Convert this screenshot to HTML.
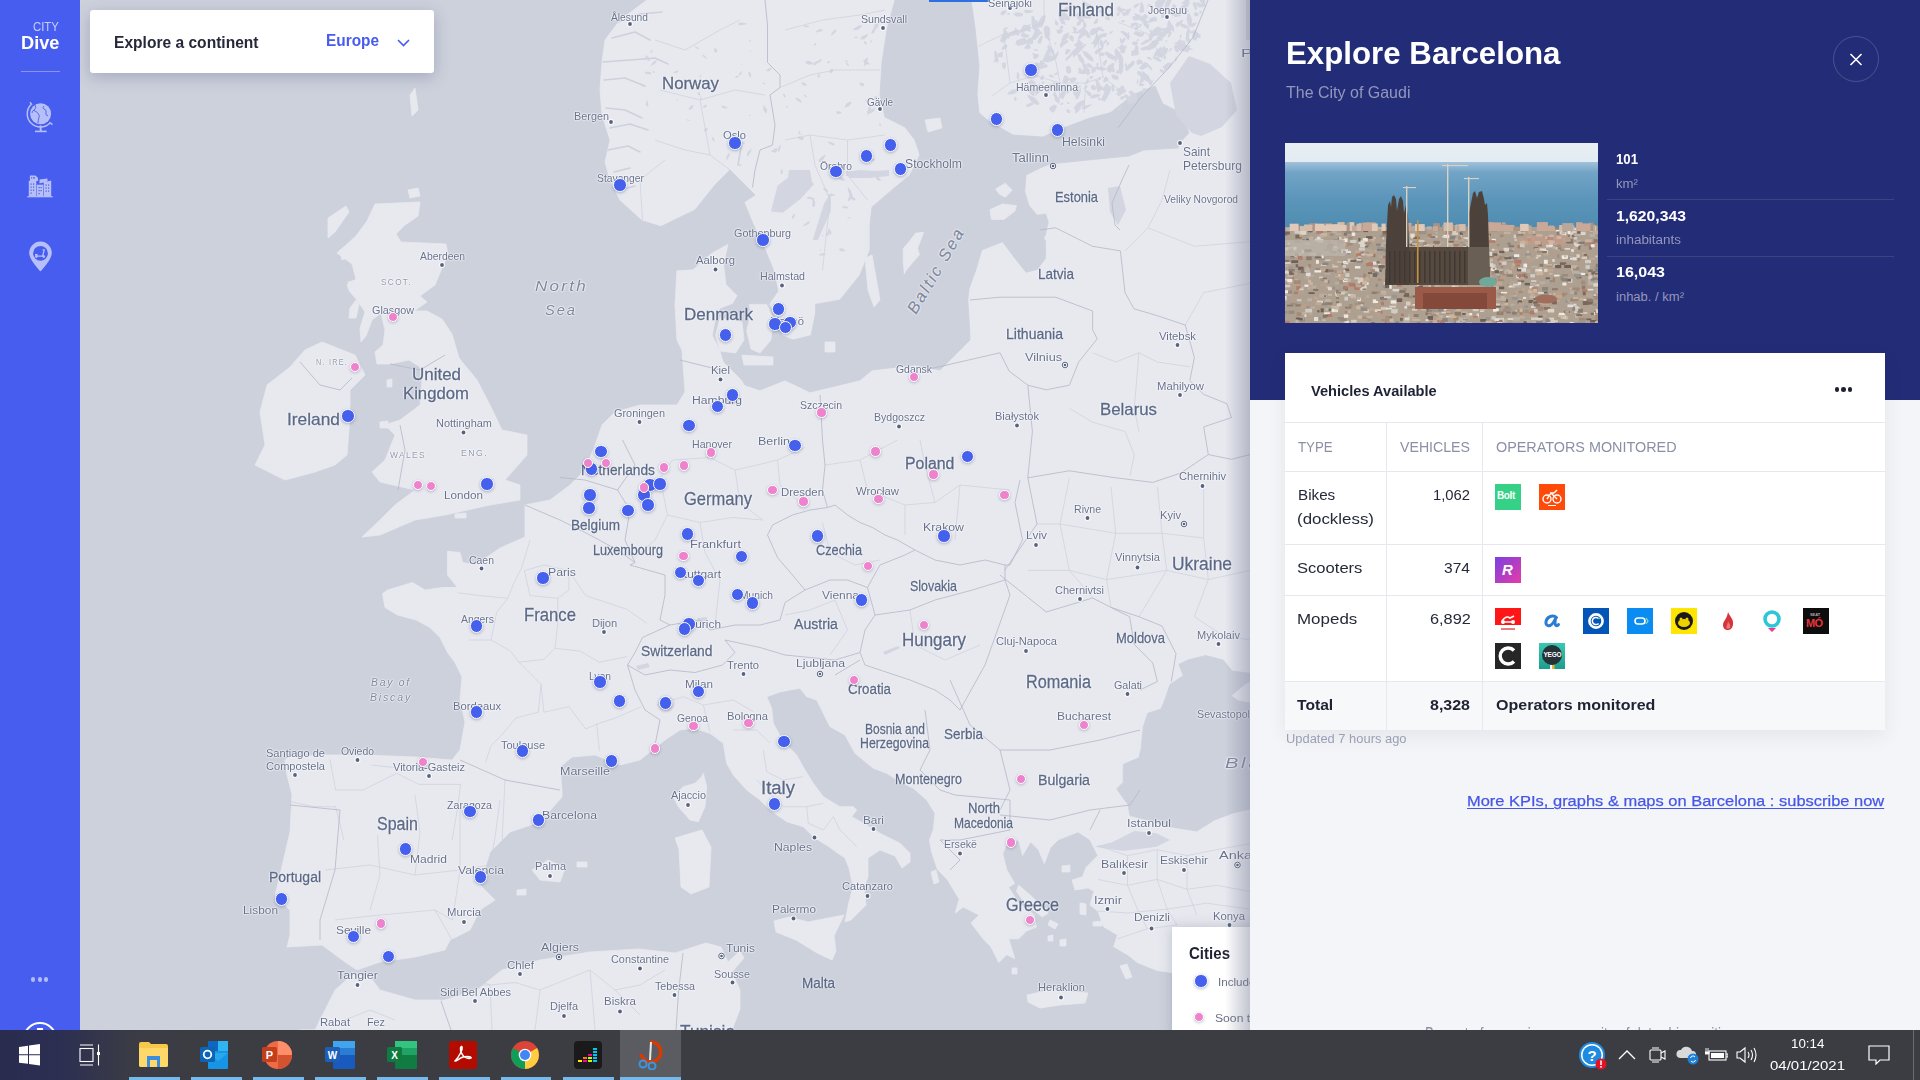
<!DOCTYPE html>
<html><head><meta charset="utf-8">
<style>
*{margin:0;padding:0;box-sizing:border-box}
html,body{width:1920px;height:1080px;overflow:hidden;background:#cdd1dc;font-family:"Liberation Sans",sans-serif}
.abs{position:absolute}
.tx{position:absolute;white-space:nowrap;line-height:1;transform-origin:0 0}
#map{position:absolute;left:80px;top:0;width:1170px;height:1030px;overflow:hidden;background:#cdd1dc}
#mapin{position:absolute;left:-80px;top:0;width:1920px;height:1030px}
.lb{text-shadow:0 0 1px #fff,0 0 2px #fff,0 0 2px #fff}
.c{color:#67718d}
.r{color:#8e97ab;letter-spacing:1.5px}
.k{color:#5b6987;-webkit-text-stroke:0.3px #5b6987}
.s{color:#7d879f;font-style:italic;letter-spacing:2px}
.bd{position:absolute;width:13.6px;height:13.6px;border-radius:50%;background:#4660ee;border:1.9px solid #fff;box-shadow:0 1px 3px rgba(60,70,110,.35)}
.pd{position:absolute;width:10.4px;height:10.4px;border-radius:50%;background:#ef82cd;border:1.7px solid #fff;box-shadow:0 1px 3px rgba(60,70,110,.3)}
#side{position:absolute;left:0;top:0;width:80px;height:1030px;background:#465def;overflow:hidden}
#panel{position:absolute;left:1250px;top:0;width:670px;height:1030px;background:#f4f5f8;overflow:hidden}
#task{position:absolute;left:0;top:1030px;width:1920px;height:50px;background:linear-gradient(90deg,#292c4f 0px,#2c2f52 60px,#3a3b45 130px,#3c3d42 200px,#3c3d42 100%)}
</style></head><body>
<div id="map"><div id="mapin">
<svg class="abs" style="left:0;top:0" width="1920" height="1030" viewBox="0 0 1920 1030">
<rect x="0" y="0" width="1920" height="1030" fill="#cdd1dc"/>
<g fill="#e8e9ef" stroke="#e8e9ef" stroke-width="0.8" stroke-linejoin="round">
<polygon points="647,0 1250,0 1250,975 1171,972.5 1157.2,970.5 1137.4,962.6 1127.5,954.7 1113.7,946.7 1117.6,934.9 1103.8,927 1097.8,911 1090,905.1 1093.9,891.3 1080,883.4 1086,867.5 1097.8,855.6 1090,839.8 1078,831.9 1058.2,839.8 1050.3,847.7 1044.4,863.6 1038.4,849.7 1030.5,841.8 1022.6,855.6 1018.6,839.8 1006.7,843.8 1002.8,853.7 1006.7,869.5 1014.7,883.4 1008.7,887.3 1018.6,903.2 1034.5,915 1036.4,927 1026.5,931 1018.6,938.8 1008.7,938.8 1014.7,958.6 1006.7,954.7 998.8,962.6 990.9,946.7 983,938.8 971,923 979,915 963.2,907.1 955.2,913 959.2,899.2 947.3,879.4 937.4,869.5 931.5,851.7 929.5,839.8 933.3,830 935,813.3 926.7,800 913.3,788.3 900,781.7 886.7,773.3 873.3,768.3 855,753.3 845,735 830,726.7 823.3,713.3 816.7,700 806.7,696.7 800,688.3 790,690 780,692 766.7,696.7 771.7,708.3 773.3,723.3 783.3,741.7 796.7,755 805,770 813.3,783.3 823.3,796.7 840,806.7 853.3,806.7 856.7,810 851.7,816.7 863.3,823.3 880,833.3 900,843.3 910,853.3 910,862 902,868 895,856 880,850 868,858 868,877 864,887 866,905 851,920 845,922 849,902 853,887 849,868 845,858 836,852 828,846 823.3,843.3 813.3,836.7 803.3,826.7 786.7,821.7 770,810 760,800 746.7,790 733.3,775 726.7,763.3 723.3,743.3 710,733.3 693.3,728.3 680,730 665,740 640,760 620,765 595,755 572,757 560,767 562,790 562,797 540,822 510,832 490,852 480,885 495,900 480,910 470,930 450,940 445,950 415,957 380,962 357,970 345,962 322,945 287,947 290,935 290,910 275,895 280,875 290,832 292,795 287,775 285,760 290,757 327,755 365,755 415,757 452,760 460,750 465,722 460,700 462,677 455,662.5 447.5,652.5 440,637.5 430,627.5 416.25,620 397.5,615 385,607.5 382.5,593.75 387.5,590 412.5,582.5 425,590 442.5,587.5 457.5,587.5 447.5,575 447.5,551.3 460,552.5 462.5,562.5 475,565 490,555 500,548 525,537 525,505 550,500 570,485 585,470 595,445 602,425 615,412 640,405 677,405 685,392 682,350 677,340 675,305 677,270 665,227 642,220 620,200 610,180 605,162 610,140 602,115 600,90 602,62 605,40 620,20"/>
<polygon points="300,1030 315,1030 335,990 352,975 370,977 380,990 415,1000 445,1000 477,990 502,970 540,960 590,952 638,949 675,953 706,943 721,947 728,962 740,951 744,958 732,972 740,990 740,1009 732,1030"/>
</g>
<g fill="#cdd1dc" stroke="#cdd1dc" stroke-width="0.8" stroke-linejoin="round">
<polygon points="655,229 662,226 695,210 715,185 730,170 740,180 750,190 755,195 744,202 753,224 764,247 773,269 778,291 769,304 778,324 782,335.6 793,340 811,335.6 815.6,313 815.6,304.4 840,300 860,275 870,250 870,225 872,207 892,190 910,175 920,155 915,140 905,127 885,117 880,95 882,62 887,30 895,0 971,0 975,28 979,66 977,94 979,113 990,122 1013,135 1043,137 1058,130 1088.5,118.5 1110.7,112.6 1133,94.8 1155,86 1162.6,103.7 1180.4,112.6 1189,133 1180.4,142 1178,148 1144,150 1129,156 1088,160 1050,164 1040,168 1026,175 1024.7,191.7 1028.9,205.6 1037.2,215.3 1045.6,213.9 1048.3,222.2 1045.6,233.3 1045.6,258.3 1037.2,269.4 1026,272.2 1015,258.3 1002.5,241.7 981.7,250 976,269.4 969,288.9 967.8,300 969.4,325 970,340 950,360 940,370 915,365 872,370 860,380 810,392 785,380 760,390 745,385 742,380 733,371 724,362 720,349 713,335.6 715.6,322 720,309 733,304 737.8,295.6 726.7,284.4 724.4,264.4 729,243 711,253 693,269 677,270 668,272"/>
<polygon points="1187.8,660 1205.6,655.6 1223.3,660 1232.2,671.1 1250,673.3 1250,808.9 1232.2,813.3 1214.4,820 1196.7,831.1 1170,826.7 1147.8,820 1130,815.6 1127.8,804.4 1116.7,788.9 1123.3,782.2 1123.3,764.4 1138.9,757.8 1141.1,748.9 1143.3,726.7 1147.8,713.3 1161.1,708.9 1165.6,697.8 1170,684.4 1183.3,675.6 1178.9,664.4"/>
</g>
<g fill="#e8e9ef" stroke="#e8e9ef" stroke-width="0.8" stroke-linejoin="round">
<polygon points="375,204 420,202 418,216 405,225 396,234 401,242 446,244 448,255 442,268 435,285 420,296 427,302 414,311 427,311 442,319 452,334 459,358 477,380 490,405 502,430 527,435 527,455 505,480 520,485 520,500 490,505 445,515 415,520 380,535 362,537 380,520 395,505 415,490 380,482 372,472 385,460 395,435 385,425 400,420 420,405 422,380 420,367 409,360 390,364 377,364 375,352 383,345 385,330 381,313 372,320 366,336 361,342 360,328 365,312 357,300 350,292 347,285 356,279 352,264 337,253 356,236 367,221"/>
<polygon points="322,342 355,355 365,375 350,390 350,417 347,455 335,465 315,472 285,480 255,465 265,445 260,412 267,385 290,367 305,350"/>
<polygon points="703.3,773.3 706.7,786.7 705,806.7 698.3,821.7 690,820 678.3,806.7 673.3,796.7 683.3,786.7 695,783.3 701.7,776.7"/>
<polygon points="679,849 675,838 702,830 711,847 709,887 691,894 681,887"/>
<polygon points="774,921 789,917 808,922 844,915 834,936 836,951 832,960 817,953 796,940 776,932"/>
<polygon points="1027,995 1050,990 1088,993 1085,1003 1060,1005 1040,1008 1028,1002"/>
<polygon points="532,870 548,860 565,868 560,882 540,880"/>
<polygon points="577,862 587,862 587,867 577,867"/>
<polygon points="517,890 526,889 526,895 517,895"/>
<polygon points="749,304.4 766.7,304.4 773,318 771,340 760,353 751,349 746.7,331 751,313"/>
<polygon points="720,318 742,322 744,340 735.6,353 720,351 715.6,335.6"/>
<polygon points="742,355 773,357 773,365 744,365"/>
<polygon points="915.5,233.3 923.6,232.3 920.5,240.5 917.5,248.6 919.5,254.7 913.4,261.8 906.3,270 904.3,274 903.2,259.8 903.2,248.6 909.3,241.5"/>
<polygon points="865,258 872,255 880,300 874,307 868,290"/>
<polygon points="825,342 835,342 835,352 825,352"/>
<polygon points="990,209.7 1002.5,204 1016.4,205.6 1015,211 1003.9,219.4 991.4,219.4"/>
<polygon points="995.6,188.9 1005.3,183.3 1012.2,190.3 1005.3,197.2 999.7,194.4"/>
<polygon points="1018.6,885.3 1030.5,895.2 1048.3,913 1042.4,917 1024.6,903.2 1016.6,891.3"/>
<polygon points="1080,903 1086,904 1086,915 1080,914"/>
<polygon points="1093,922 1102,921 1102,926 1093,926"/>
<polygon points="1120,966 1127,964 1132,977 1126,979"/>
<polygon points="1060,940 1066,939 1066,946 1060,946"/>
<polygon points="1048,936 1053,935 1053,941 1048,941"/>
<polygon points="1050,920 1058,924 1055,929 1048,925"/>
<polygon points="1062,866 1070,865 1070,872 1062,872"/>
<polygon points="1047,839 1053,839 1053,845 1047,845"/>
<polygon points="1012,968 1017,968 1017,974 1012,974"/>
<polygon points="931,872 936,870 939,882 934,884"/>
<polygon points="410,95 415,88 418,110 412,116"/>
<polygon points="408,190 418,188 420,196 410,198"/>
<polygon points="328,218 346,206 349,212 335,232 328,238"/>
<polygon points="340,250 350,247 352,256 342,260"/>
<polygon points="348,282 356,280 357,288 349,290"/>
<polygon points="350,308 356,300 359,304 356,318 349,318"/>
<polygon points="387,380 392,379 392,387 387,387"/>
<polygon points="380,422 388,421 388,428 380,428"/>
<polygon points="455,514 466,513 466,518 455,518"/>
<polygon points="925,120 940,118 942,128 928,132"/>
<polygon points="1045,236 1050,236 1050,240 1045,240"/>
<polygon points="1072,880 1085,876 1088,888 1075,890"/>
<polygon points="1232.2,695.6 1245.6,684.4 1250,682.2 1250,702.2 1238,700"/>
</g>
<g fill="none" stroke="#cdd1dc" stroke-width="1.6" stroke-linecap="round" stroke-linejoin="round">
<polyline points="618,22 640,14 662,12"/>
<polyline points="612,38 635,32 650,40"/>
<polyline points="603,62 630,60 655,58 668,64"/>
<polyline points="604,80 625,78 645,86"/>
<polyline points="606,108 625,110 642,118"/>
<polyline points="610,128 630,124 648,130"/>
<polyline points="608,150 628,146 640,152"/>
<polyline points="614,172 630,168"/>
<polyline points="620,190 635,186"/>
<polyline points="738,165 742,142"/>
</g>
<g fill="#d3d6e0">
<polygon points="789,170 810,170 812.6,185.5 801,198.5 782.8,212.8 771,211.5 777.6,185.5 788,177.8"/>
<polygon points="830.7,193 824,203.7 812.6,240 817.8,240 830.7,211.5"/>
<polygon points="1189,56 1210,64 1231,83 1237,110 1222,127 1201,136 1192,133 1176,115.5 1170,83"/>
<polygon points="1108,188 1120,186 1126,210 1118,225 1110,212"/>
<polygon points="883,652 898,646 900,648 885,655"/>
<polygon points="636,666 648,663 650,667 638,670"/>
<polygon points="697,618 707,617 707,621 698,622"/>
<polygon points="1094.4,846.7 1112.2,842.2 1134.4,831.1 1156.7,833.3 1170,840 1156.7,846.7 1123.3,851.1"/>
<polygon points="1246,0 1250,0 1250,40 1246,40"/>
<polygon points="846,172 860,170 875,171 889,170 889,176 870,178 850,178"/>
<polygon points="846,171 862,171 862,175 846,176"/>
<polygon points="1045.4,63.9 1043.4,64.3 1042.0,64.3 1039.7,64.2 1039.9,62.3 1039.9,60.5 1041.9,60.4 1043.7,60.7 1044.1,62.2"/>
<polygon points="1132.4,104.1 1128.8,103.7 1124.0,94.3 1127.9,94.9 1133.1,100.6"/>
<polygon points="1164.9,47.6 1165.2,49.3 1163.6,52.2 1161.4,51.0 1160.9,48.8 1163.2,47.1"/>
<polygon points="1102.2,49.5 1100.9,46.4 1099.9,45.1 1099.4,42.5 1100.3,40.3 1101.9,40.1 1103.0,42.5 1103.8,44.8 1103.4,47.4"/>
<polygon points="1093.7,49.0 1094.2,40.6 1096.5,32.6 1098.5,35.9 1098.6,43.1"/>
<polygon points="1078.4,73.4 1078.6,71.4 1079.2,69.4 1080.3,67.8 1081.2,67.9 1080.8,70.0 1079.7,72.1"/>
<polygon points="1103.2,66.3 1103.2,64.5 1102.7,62.9 1104.0,61.2 1105.3,60.3 1107.0,59.6 1106.8,62.0 1105.7,64.1 1104.6,65.8"/>
<polygon points="1127.2,36.6 1127.0,34.9 1127.7,33.0 1129.2,31.8 1129.0,33.9 1128.7,35.8"/>
<polygon points="1148.3,42.2 1149.3,37.0 1151.3,31.4 1155.9,27.9 1155.7,33.5 1152.1,38.8"/>
<polygon points="1033.1,64.5 1037.0,62.1 1040.6,64.7 1040.4,67.1 1035.9,68.0"/>
<polygon points="1128.3,92.4 1129.2,91.6 1131.9,91.9 1134.2,92.6 1133.0,93.2 1131.8,93.7 1129.7,93.2"/>
<polygon points="1099.5,94.3 1100.5,95.5 1097.0,97.6 1092.5,98.5 1089.9,98.1 1090.4,96.7 1092.1,95.2 1095.3,94.1 1097.7,94.0"/>
<polygon points="1150.2,18.9 1152.6,18.4 1154.0,18.1 1156.5,17.6 1156.9,19.6 1157.1,21.5 1154.6,21.3 1153.2,21.4 1152.1,20.4"/>
<polygon points="1186.1,12.1 1187.1,13.4 1185.7,14.6 1184.7,15.0 1184.1,13.9 1184.6,12.4"/>
<polygon points="1013.1,13.9 1016.7,12.3 1022.9,13.2 1022.6,16.4 1016.0,16.6"/>
<polygon points="1081.6,13.5 1084.4,11.9 1087.3,14.4 1086.2,17.2 1083.1,15.8"/>
<polygon points="1179.5,9.1 1181.4,6.3 1185.1,3.2 1190.3,1.8 1188.9,4.8 1187.3,7.5 1182.6,9.5"/>
<polygon points="1049.7,45.9 1050.8,48.7 1049.7,53.1 1049.1,57.4 1047.2,57.3 1045.8,57.6 1044.0,56.5 1046.2,52.2 1047.5,49.6"/>
<polygon points="1171.4,11.9 1171.9,9.8 1177.5,12.6 1181.6,16.1 1178.4,16.5 1175.4,17.1 1169.4,13.5"/>
<polygon points="1171.1,24.7 1172.0,24.4 1173.5,26.4 1174.0,29.5 1174.4,32.6 1172.9,31.3 1171.8,29.7 1170.2,27.5 1169.9,24.4"/>
<polygon points="1148.9,23.5 1142.6,22.1 1136.6,17.8 1133.6,13.0 1139.5,14.8 1144.5,18.1"/>
<polygon points="1036.4,66.6 1035.6,67.6 1034.8,68.7 1033.0,68.8 1032.2,68.2 1032.1,67.5 1032.9,66.9 1033.8,66.0 1035.1,66.2"/>
<polygon points="1021.3,45.2 1024.8,41.2 1029.8,37.7 1035.3,37.3 1032.3,41.8 1026.7,43.7"/>
<polygon points="1161.4,5.8 1162.5,7.1 1161.7,8.7 1160.6,10.5 1160.0,8.6 1160.4,7.2"/>
<polygon points="1060.1,46.0 1059.8,44.6 1061.3,41.7 1064.2,41.2 1068.0,39.5 1067.9,42.3 1063.9,44.9 1060.6,48.3"/>
<polygon points="1163.2,29.6 1164.9,28.3 1167.3,27.1 1170.3,28.3 1171.6,30.4 1170.1,32.0 1169.0,33.8 1165.8,33.5 1164.6,31.4"/>
<polygon points="1122.1,60.5 1122.9,61.8 1123.0,65.2 1121.4,68.4 1120.0,67.5 1120.1,64.3 1120.8,61.2"/>
<polygon points="1091.6,97.2 1087.9,95.3 1084.7,90.0 1087.7,90.5 1091.2,93.2"/>
<polygon points="1111.3,74.8 1114.4,74.4 1118.1,76.1 1118.7,79.6 1115.1,79.7 1112.1,77.9"/>
<polygon points="1159.1,10.1 1157.8,8.1 1159.4,2.3 1162.6,-3.7 1166.3,-6.5 1166.7,-1.8 1163.6,4.2 1161.5,8.3"/>
<polygon points="1037.7,93.3 1034.7,92.6 1032.1,91.9 1031.2,89.5 1029.1,86.0 1032.9,87.7 1035.6,87.8 1037.5,90.6"/>
<polygon points="1069.4,32.0 1068.0,37.8 1062.6,42.9 1061.2,40.1 1063.9,34.4"/>
<polygon points="1083.3,88.9 1085.0,86.7 1087.8,85.3 1087.7,86.5 1085.9,88.7"/>
<polygon points="1033.5,57.2 1033.4,56.1 1035.0,54.1 1037.8,54.1 1039.0,54.9 1038.6,56.4 1036.8,58.5 1033.4,58.9"/>
<polygon points="1108.4,19.9 1107.3,20.1 1105.9,19.7 1105.9,18.1 1106.3,17.1 1106.9,15.9 1108.3,16.4 1109.8,17.6 1108.9,19.0"/>
<polygon points="1079.0,50.1 1076.6,48.3 1076.8,43.6 1078.3,38.0 1081.3,42.3 1082.1,49.0"/>
<polygon points="1096.7,66.3 1096.4,65.0 1096.2,63.4 1097.6,63.2 1099.0,63.0 1098.5,64.7 1098.1,66.2"/>
<polygon points="1094.4,24.2 1093.6,23.3 1094.8,21.0 1096.4,18.8 1097.9,18.7 1098.0,20.5 1097.7,22.8 1095.8,23.7"/>
<polygon points="1083.7,63.9 1081.5,63.3 1079.0,59.3 1077.0,54.8 1078.7,54.1 1080.4,54.6 1082.3,57.6 1084.4,61.6"/>
<polygon points="1102.9,26.7 1099.0,30.2 1097.4,32.1 1093.8,35.0 1090.0,35.6 1091.9,32.6 1091.5,30.8 1095.4,28.1 1098.6,27.7"/>
<polygon points="1115.0,94.5 1119.9,91.0 1126.3,89.6 1125.8,91.9 1121.0,94.5"/>
<polygon points="1201.1,10.4 1201.7,12.0 1200.2,14.0 1199.4,12.8 1199.4,10.9"/>
<polygon points="1007.6,37.0 1007.6,34.6 1012.2,31.3 1016.3,30.1 1019.0,29.9 1019.2,31.3 1020.1,33.4 1014.8,35.2 1012.0,35.8"/>
<polygon points="1188.9,11.8 1187.8,12.1 1186.1,11.0 1184.6,9.8 1183.8,8.3 1185.1,8.2 1186.0,7.6 1187.6,9.2 1188.5,10.5"/>
<polygon points="1058.3,72.6 1057.5,74.6 1054.6,75.1 1053.3,74.4 1056.1,72.7"/>
<polygon points="1175.1,10.7 1173.2,9.4 1172.1,6.9 1172.7,4.2 1174.6,4.4 1176.4,6.0 1176.1,8.6"/>
<polygon points="1054.9,54.9 1051.2,53.3 1048.7,50.2 1047.0,46.8 1048.2,44.5 1051.7,47.7 1053.9,50.9"/>
<polygon points="1069.0,113.2 1067.5,113.0 1066.8,111.6 1066.0,110.0 1067.4,109.5 1068.6,109.2 1069.6,110.4 1070.5,112.3"/>
<polygon points="1085.4,27.8 1084.1,29.9 1080.5,33.0 1076.9,33.1 1079.1,29.9 1083.6,26.7"/>
<polygon points="1113.3,30.7 1112.6,32.3 1109.7,34.2 1109.2,33.1 1111.6,31.0"/>
<polygon points="1083.7,59.5 1082.4,60.5 1079.9,60.7 1077.9,59.8 1079.8,58.7 1082.9,58.2"/>
<polygon points="1115.3,59.3 1112.9,59.9 1107.8,57.4 1104.3,52.8 1106.8,51.6 1111.2,54.0 1116.3,57.1"/>
<polygon points="1071.5,32.6 1074.8,31.0 1078.7,31.8 1080.1,33.2 1075.5,33.4"/>
<polygon points="1093.7,32.7 1092.7,33.6 1092.0,34.8 1090.5,34.5 1089.7,33.8 1090.6,32.9 1091.4,32.5 1092.7,32.0"/>
<polygon points="1107.3,45.7 1106.4,44.3 1107.1,42.1 1109.4,41.7 1108.6,44.7"/>
<polygon points="1094.5,80.5 1095.5,80.1 1097.4,80.2 1098.6,80.9 1098.2,81.4 1097.1,81.7 1095.3,81.2"/>
<polygon points="1161.7,32.8 1160.4,34.7 1155.7,36.1 1152.4,35.7 1147.7,34.6 1154.5,32.1 1161.4,30.3"/>
<polygon points="1103.8,91.4 1102.9,90.4 1103.7,87.1 1105.9,84.1 1107.9,83.6 1108.8,85.4 1107.7,89.2 1105.2,92.3"/>
<polygon points="1065.2,83.7 1062.6,82.2 1063.2,78.2 1064.8,74.9 1067.2,76.3 1069.7,78.6 1067.6,82.3"/>
<polygon points="1087.6,68.2 1088.4,69.6 1089.5,70.9 1088.3,72.3 1087.3,72.8 1086.2,73.1 1085.0,72.2 1085.6,70.4 1086.1,68.6"/>
<polygon points="1140.4,44.0 1143.5,41.8 1145.8,39.8 1149.4,39.2 1149.9,40.2 1149.4,41.4 1147.0,42.7 1142.3,45.1"/>
<polygon points="1033.3,49.5 1034.5,48.9 1036.9,49.2 1037.9,50.1 1038.1,50.9 1036.2,50.7 1034.1,50.5"/>
<polygon points="1116.9,10.1 1120.6,8.7 1124.8,8.8 1126.2,10.5 1120.2,11.4"/>
<polygon points="1190.1,28.1 1184.7,28.5 1180.5,26.0 1179.7,22.8 1185.6,24.8"/>
<polygon points="1035.4,65.0 1035.6,63.4 1039.2,63.0 1043.5,64.3 1045.6,66.2 1043.4,67.2 1041.3,67.4 1038.6,67.7 1036.3,66.4"/>
<polygon points="1038.0,105.2 1034.9,104.3 1031.3,101.7 1029.1,98.6 1026.8,94.8 1030.1,95.4 1034.9,97.8 1039.4,103.3"/>
<polygon points="1028.7,25.6 1030.3,26.9 1030.9,29.3 1030.5,32.1 1028.6,31.6 1026.4,30.2 1027.2,26.9"/>
<polygon points="1126.4,50.6 1123.6,50.7 1120.3,49.9 1118.7,48.3 1117.5,46.4 1121.3,47.0 1123.8,48.7"/>
<polygon points="1081.6,50.2 1087.3,52.3 1092.6,57.5 1093.8,62.1 1089.0,60.1 1084.7,56.0"/>
<polygon points="1112.9,92.2 1111.6,89.8 1111.9,86.4 1112.9,83.5 1114.1,86.1 1114.5,90.3"/>
<polygon points="1024.8,49.0 1024.4,47.5 1026.6,45.0 1028.4,42.4 1029.7,42.8 1031.3,42.5 1029.8,44.9 1028.6,46.9 1026.4,48.8"/>
<polygon points="1063.6,29.9 1061.7,32.8 1058.6,33.9 1056.9,32.5 1056.4,29.8 1060.1,29.6"/>
<polygon points="1116.8,54.5 1116.7,57.5 1116.9,59.9 1115.4,62.4 1114.7,61.0 1114.4,59.1 1115.1,55.6"/>
<polygon points="1066.2,87.5 1063.9,89.3 1061.3,89.8 1058.8,88.8 1058.7,86.7 1060.8,84.7 1063.8,85.9"/>
<polygon points="1163.9,18.2 1162.6,17.6 1162.9,14.4 1163.7,13.1 1164.5,12.9 1165.6,14.2 1164.6,16.4"/>
<polygon points="1083.9,31.4 1084.6,31.7 1085.7,32.5 1085.1,34.0 1085.0,35.9 1083.9,36.0 1082.9,34.7 1082.3,32.9 1082.8,31.3"/>
<polygon points="1134.9,56.0 1134.0,52.0 1135.5,45.1 1138.2,46.4 1138.7,54.4"/>
<polygon points="1019.2,89.3 1017.3,92.0 1013.2,94.2 1010.0,94.5 1007.4,94.4 1008.5,92.4 1011.4,90.1 1015.8,88.9"/>
<polygon points="1135.1,30.4 1135.0,29.0 1134.6,27.5 1136.1,26.0 1137.6,25.3 1138.8,25.9 1138.6,27.7 1137.7,29.2 1136.5,30.0"/>
<polygon points="1119.4,74.1 1118.2,72.9 1117.3,72.5 1116.8,71.3 1117.0,70.5 1117.2,69.3 1118.3,70.5 1118.7,71.6 1119.4,72.7"/>
<polygon points="1055.9,57.3 1055.1,55.6 1056.6,52.9 1058.4,50.8 1058.5,53.4 1057.5,55.9"/>
<polygon points="1053.8,93.4 1055.9,93.8 1058.5,98.6 1059.0,102.2 1057.8,103.1 1055.1,100.4 1054.3,96.6"/>
<polygon points="1057.8,86.9 1056.3,86.8 1055.5,84.8 1055.6,82.5 1057.4,82.0 1058.9,83.8 1059.3,86.2"/>
<polygon points="1074.3,45.6 1074.4,44.0 1077.2,42.6 1080.5,41.2 1082.0,42.5 1083.9,43.6 1081.0,45.4 1078.3,47.4 1075.7,46.6"/>
<polygon points="1159.0,-1.7 1160.6,-0.7 1161.0,2.9 1160.0,6.0 1158.8,8.6 1156.8,9.5 1155.4,6.6 1155.1,1.9 1157.5,0.0"/>
<polygon points="1079.2,16.8 1082.7,15.5 1085.7,13.9 1090.6,14.6 1091.5,16.6 1090.5,18.6 1085.8,18.8 1082.4,18.1"/>
<polygon points="1034.7,30.9 1032.5,28.3 1031.5,22.6 1031.5,16.4 1033.9,16.0 1035.9,21.8 1036.5,28.6"/>
<polygon points="1008.5,26.8 1007.0,28.7 1004.8,30.4 1003.7,30.1 1003.0,29.0 1006.3,27.3"/>
<polygon points="1051.2,111.8 1049.5,109.6 1051.4,106.0 1054.7,104.4 1057.1,106.2 1055.6,109.5 1053.8,112.7"/>
<polygon points="1124.7,15.8 1123.9,16.1 1122.7,15.2 1122.1,13.5 1122.2,12.3 1123.0,11.9 1124.2,12.2 1125.6,13.7 1125.5,15.4"/>
<polygon points="1158.5,58.1 1157.8,57.6 1157.8,55.3 1158.5,52.7 1159.6,51.7 1160.5,52.6 1159.9,55.7 1159.3,58.1"/>
<polygon points="1008.4,39.1 1006.1,37.3 1003.5,33.3 1003.2,28.9 1006.6,31.0 1009.8,37.2"/>
<polygon points="1055.3,77.0 1053.1,77.2 1051.4,77.6 1049.2,76.6 1048.8,75.5 1049.7,74.6 1052.1,74.8 1053.1,75.9"/>
<polygon points="1032.4,66.8 1033.8,64.9 1038.2,64.0 1041.2,66.3 1043.6,68.2 1040.2,69.1 1037.3,70.7 1033.6,69.0"/>
<polygon points="1060.8,98.5 1059.4,96.3 1060.9,92.5 1062.6,90.4 1065.0,86.3 1066.9,87.9 1067.0,91.3 1065.4,94.6 1063.4,98.7"/>
<polygon points="1084.5,22.7 1085.6,22.1 1086.2,24.2 1086.6,26.7 1085.4,27.3 1084.5,28.9 1083.5,26.7 1082.9,24.4 1083.2,22.0"/>
<polygon points="1043.3,75.3 1044.3,76.3 1042.8,80.0 1041.3,80.1 1039.8,79.3 1041.9,75.5"/>
<polygon points="1100.0,101.2 1098.4,99.5 1097.6,97.3 1099.5,97.5 1100.8,99.0"/>
<polygon points="1060.8,15.4 1062.7,13.8 1063.9,19.1 1065.9,25.1 1063.1,24.3 1061.3,23.8 1059.8,20.2 1058.1,14.6"/>
<polygon points="1047.3,36.1 1047.8,34.5 1049.2,34.1 1049.7,35.1 1048.9,36.3"/>
<polygon points="1034.0,102.7 1032.4,105.2 1027.1,107.3 1025.9,105.2 1030.9,102.5"/>
<polygon points="1068.3,74.1 1066.3,71.7 1066.0,66.4 1070.2,66.0 1071.4,72.1"/>
<polygon points="1111.6,85.5 1110.8,90.5 1108.3,95.7 1104.8,101.7 1102.9,100.7 1100.7,99.9 1103.9,93.2 1108.1,86.7"/>
<polygon points="1131.6,43.1 1133.5,41.5 1136.8,41.6 1138.1,43.1 1137.8,44.3 1136.3,45.6 1133.2,44.9"/>
<polygon points="1135.5,22.6 1136.9,23.9 1134.2,25.9 1131.9,27.8 1130.9,26.2 1131.1,23.5 1133.8,22.9"/>
<polygon points="1175.6,45.3 1177.6,44.1 1182.2,43.7 1186.7,46.7 1194.0,49.4 1189.0,50.1 1187.9,52.6 1180.2,50.3 1174.9,47.3"/>
<polygon points="1121.9,90.3 1120.2,90.8 1118.4,91.1 1115.8,90.5 1116.4,89.3 1118.7,89.0 1121.3,89.1"/>
<polygon points="1069.9,104.0 1068.5,103.9 1067.1,103.6 1066.4,102.3 1067.8,102.0 1069.1,102.8"/>
<polygon points="1119.0,71.8 1118.2,73.3 1115.7,73.6 1116.1,71.6 1117.7,70.8"/>
<polygon points="1037.2,91.4 1035.4,91.8 1033.6,90.2 1035.0,89.3 1036.4,89.8"/>
<polygon points="1142.0,13.0 1139.4,12.2 1140.1,6.5 1141.0,1.2 1143.5,5.1 1144.3,11.6"/>
<polygon points="1063.3,9.5 1066.2,7.0 1071.1,5.9 1071.6,7.7 1066.5,11.4"/>
<polygon points="1200.6,38.2 1197.3,37.7 1191.8,32.8 1192.6,30.6 1194.7,29.7 1200.5,35.0"/>
<polygon points="1080.7,68.2 1081.4,68.8 1081.0,70.3 1079.6,70.5 1078.7,70.5 1078.1,69.7 1078.6,68.1 1080.1,67.8"/>
<polygon points="1165.8,42.1 1165.6,41.5 1165.6,40.9 1166.2,40.1 1167.1,40.3 1167.0,41.4 1166.5,42.4"/>
<polygon points="1072.6,26.3 1075.1,27.2 1077.2,29.0 1076.0,30.9 1074.0,30.9 1073.0,28.9"/>
<polygon points="1121.7,55.6 1120.3,56.7 1118.3,57.5 1116.4,57.3 1117.0,56.4 1117.9,55.5 1120.0,55.2"/>
<polygon points="1072.8,54.9 1069.4,54.8 1074.1,49.3 1079.0,46.0 1081.6,45.6 1086.9,43.6 1082.3,49.2 1078.3,53.5 1073.0,57.7"/>
<polygon points="1086.5,63.6 1089.5,63.3 1092.5,66.2 1093.6,69.3 1086.9,66.6"/>
<polygon points="1144.3,34.9 1140.5,37.2 1133.2,34.1 1135.5,30.9 1140.8,32.2"/>
<polygon points="1137.4,71.2 1139.7,71.0 1142.4,73.2 1143.3,75.8 1142.3,77.7 1139.6,75.7 1137.0,73.5"/>
<polygon points="1116.8,10.9 1117.1,8.3 1118.0,6.2 1118.6,6.8 1118.4,9.1"/>
<polygon points="1015.9,97.3 1016.5,98.0 1016.6,99.0 1016.3,100.5 1015.0,100.9 1014.3,99.7 1013.7,98.3 1014.7,96.8"/>
<polygon points="1190.5,26.2 1188.2,25.9 1186.5,19.1 1187.4,13.6 1189.7,13.4 1191.8,18.6 1191.8,24.1"/>
<polygon points="1146.3,27.4 1144.4,26.1 1142.8,22.8 1143.2,18.9 1144.9,18.2 1146.2,20.1 1147.6,22.1 1147.0,24.6"/>
<polygon points="1140.3,3.1 1137.6,6.6 1134.0,8.4 1133.5,6.2 1135.9,4.0"/>
<polygon points="1107.1,39.9 1107.2,41.5 1105.3,43.0 1103.2,44.7 1103.5,42.9 1103.6,41.5 1105.5,39.8"/>
<polygon points="1175.4,62.1 1175.1,60.1 1175.2,58.7 1175.8,56.8 1176.7,57.9 1177.4,59.0 1176.5,60.5"/>
<polygon points="1118.8,99.6 1120.2,98.3 1120.8,96.8 1123.9,95.8 1125.3,96.1 1127.5,96.1 1124.2,98.0 1122.3,99.8 1120.7,99.3"/>
<polygon points="1147.5,22.9 1149.7,18.5 1155.6,16.4 1155.7,19.3 1152.5,22.1"/>
<polygon points="1097.6,28.3 1099.8,27.9 1103.4,29.3 1104.7,31.1 1102.6,31.6 1098.7,30.1"/>
<polygon points="1098.5,80.1 1098.1,78.3 1099.7,77.1 1100.7,78.2 1100.4,80.1"/>
<polygon points="1054.0,96.5 1053.6,95.7 1053.4,94.1 1054.5,93.5 1055.5,93.1 1055.4,94.9 1054.8,96.4"/>
<polygon points="1110.9,65.3 1112.6,65.0 1114.2,68.0 1115.0,71.6 1113.3,72.4 1111.8,71.0 1110.0,69.5 1110.4,67.1"/>
<polygon points="1104.0,88.2 1102.0,90.3 1098.4,90.8 1096.0,87.8 1098.9,85.5 1101.9,86.3"/>
<polygon points="1147.4,63.5 1149.3,65.0 1150.7,66.6 1152.1,68.7 1152.1,70.2 1150.6,69.4 1148.7,68.0 1147.3,65.2"/>
<polygon points="1143.9,64.4 1141.9,63.5 1140.0,61.7 1138.3,59.4 1139.2,58.9 1141.4,60.0 1142.7,62.2"/>
<polygon points="1176.5,48.4 1179.6,47.4 1182.1,46.4 1184.5,48.0 1188.4,49.2 1185.4,50.3 1183.9,51.0 1181.6,51.2 1178.9,50.3"/>
<polygon points="1176.5,26.1 1175.2,25.4 1177.0,22.6 1179.5,21.5 1182.1,19.6 1183.5,20.3 1181.3,23.2 1179.7,24.9 1177.1,27.7"/>
<polygon points="1051.2,83.3 1051.7,85.7 1050.7,89.7 1048.2,93.3 1045.6,96.5 1042.8,97.6 1045.4,91.4 1046.6,87.9 1049.0,84.4"/>
<polygon points="1137.9,78.5 1138.2,80.1 1138.5,81.5 1138.0,82.9 1137.4,84.0 1136.7,83.7 1136.8,81.4 1137.2,79.6"/>
<polygon points="1117.9,110.5 1118.9,108.3 1121.6,105.4 1122.0,107.4 1120.2,109.8"/>
<polygon points="1180.3,38.2 1179.6,37.1 1179.9,35.7 1180.5,34.6 1181.4,34.5 1181.6,35.9 1181.3,37.5"/>
<polygon points="1152.0,59.3 1151.0,59.7 1149.4,59.4 1147.7,58.8 1147.2,57.9 1146.8,57.0 1148.2,56.8 1150.4,57.4 1151.6,58.5"/>
<polygon points="1076.6,25.9 1077.2,22.2 1080.8,20.2 1081.7,21.8 1080.2,24.8"/>
<polygon points="1094.4,28.2 1094.9,29.5 1093.5,31.7 1091.9,32.8 1089.7,34.3 1089.6,32.2 1091.0,29.8 1092.9,28.3"/>
<polygon points="1130.5,37.3 1126.5,37.6 1120.0,31.5 1122.9,30.7 1127.9,33.6"/>
<polygon points="1169.9,62.4 1171.3,64.3 1169.8,67.8 1167.6,69.2 1166.0,70.4 1163.9,70.8 1164.2,68.0 1164.8,64.7 1167.5,63.0"/>
<polygon points="1147.2,15.0 1147.8,18.1 1143.5,19.4 1141.6,19.1 1141.7,17.0 1144.4,14.1"/>
<polygon points="1171.1,-2.7 1171.4,0.8 1169.8,4.6 1168.5,7.8 1165.7,12.1 1165.0,9.0 1164.6,6.5 1165.5,2.0 1168.4,-1.2"/>
<polygon points="1165.5,54.5 1164.5,55.0 1162.7,54.9 1162.3,53.7 1163.6,53.4 1164.9,53.5"/>
<polygon points="1173.8,44.0 1176.5,42.1 1179.7,41.1 1182.6,40.5 1185.9,40.6 1182.9,42.3 1180.6,44.3 1177.4,44.0"/>
<polygon points="1141.1,84.6 1139.5,84.1 1140.0,80.2 1140.6,78.0 1141.5,75.6 1142.9,75.5 1143.6,77.8 1144.0,81.1 1142.3,82.5"/>
<polygon points="1104.7,54.2 1104.1,55.4 1101.9,56.0 1099.2,55.7 1099.5,54.3 1100.0,53.2 1101.8,52.1 1104.1,52.9"/>
<polygon points="1196.9,22.4 1195.6,24.9 1192.2,27.2 1190.0,26.7 1190.4,24.5 1194.0,22.8"/>
<polygon points="1064.8,54.4 1065.6,51.8 1066.0,49.2 1068.6,49.2 1070.9,50.3 1069.0,52.7 1067.4,54.0"/>
<polygon points="1015.3,43.7 1016.6,40.2 1024.6,37.6 1026.9,40.2 1026.1,43.6 1018.3,45.9"/>
<polygon points="1120.2,75.0 1118.7,70.7 1118.9,63.7 1121.8,62.8 1123.7,65.1 1122.9,71.5"/>
<polygon points="1121.4,20.9 1121.2,20.1 1122.6,20.3 1124.2,20.2 1125.1,21.1 1124.9,22.0 1123.3,22.0 1122.2,22.2 1121.6,21.5"/>
<polygon points="1078.6,39.5 1077.9,38.8 1078.3,36.5 1079.5,35.5 1079.8,37.2 1079.5,39.1"/>
<polygon points="1149.9,85.0 1149.1,84.1 1151.2,81.0 1153.6,80.1 1152.4,82.9 1151.1,85.4"/>
<polygon points="1161.5,13.7 1162.9,14.3 1163.0,17.3 1162.3,18.1 1161.3,17.7 1161.1,15.4"/>
<polygon points="1138.7,27.6 1138.9,26.2 1139.5,24.7 1140.9,23.7 1142.1,23.3 1141.9,24.6 1141.1,26.0 1139.8,27.8"/>
<polygon points="1184.4,41.4 1185.6,41.5 1185.5,44.4 1185.9,46.9 1185.1,48.5 1184.2,46.3 1183.9,44.6 1183.5,42.1"/>
<polygon points="1081.3,86.2 1080.3,87.3 1078.2,88.2 1076.8,87.3 1077.8,86.0 1080.0,85.6"/>
<polygon points="1056.1,54.6 1057.2,57.4 1052.7,60.7 1051.9,58.7 1053.2,54.4"/>
<polygon points="1142.3,32.1 1143.2,32.0 1143.7,33.3 1144.3,34.9 1143.2,35.2 1142.3,34.0 1141.6,32.7"/>
<polygon points="1117.9,7.5 1119.5,6.2 1121.8,8.9 1122.7,11.0 1122.4,12.7 1120.7,12.6 1118.6,11.7 1117.9,9.4"/>
<polygon points="1177.8,41.5 1178.7,40.8 1181.8,42.2 1184.3,42.8 1184.7,43.9 1186.1,45.4 1183.3,44.8 1180.7,44.2 1178.3,42.7"/>
<polygon points="1168.4,51.7 1169.4,50.1 1170.4,48.5 1172.2,47.9 1171.7,49.6 1169.9,51.5"/>
<polygon points="1082.9,62.6 1085.9,63.9 1088.4,68.9 1090.8,73.3 1089.1,73.9 1087.8,76.0 1084.9,70.8 1082.3,65.7"/>
<polygon points="1121.6,88.6 1122.3,89.9 1122.5,92.5 1120.3,95.6 1118.2,96.0 1117.1,95.1 1117.9,92.7 1117.9,90.0 1120.1,88.3"/>
<polygon points="1076.6,17.5 1078.7,16.5 1081.9,18.2 1084.1,19.9 1084.5,22.1 1080.8,22.0 1078.0,19.6"/>
<polygon points="1104.9,16.6 1106.8,16.7 1109.6,17.9 1110.2,19.4 1109.7,19.9 1108.2,20.2 1105.6,18.2"/>
<polygon points="1092.6,68.0 1096.5,66.2 1102.0,67.0 1105.8,68.0 1106.2,69.7 1102.2,70.8 1097.5,69.8"/>
<polygon points="1053.2,57.6 1053.0,60.5 1047.6,62.5 1044.0,61.2 1042.6,59.9 1043.3,58.1 1046.4,57.0 1051.5,55.3"/>
<polygon points="1111.2,55.6 1110.4,56.4 1108.7,56.4 1107.2,55.0 1106.4,53.3 1108.5,53.3 1110.2,53.2 1111.1,54.6"/>
<polygon points="1121.3,42.6 1121.4,41.4 1122.1,39.4 1124.3,37.5 1125.2,38.0 1125.7,38.9 1124.6,41.5 1121.7,44.2"/>
<polygon points="1050.6,40.6 1048.7,40.2 1047.1,39.0 1047.8,38.1 1050.3,38.6"/>
<polygon points="1135.1,61.7 1134.1,64.6 1131.3,67.2 1126.4,71.2 1124.7,68.7 1128.7,64.4 1132.6,60.7"/>
<polygon points="1029.9,81.8 1032.0,83.3 1034.3,83.6 1034.8,86.7 1035.5,89.5 1033.9,90.3 1031.7,88.8 1030.6,86.3 1030.0,84.3"/>
<polygon points="1135.6,53.0 1136.0,54.0 1134.5,54.8 1133.2,56.1 1131.6,55.9 1131.1,54.8 1131.7,53.4 1133.4,52.6 1134.6,52.8"/>
<polygon points="1121.7,43.5 1120.6,43.1 1119.7,40.1 1120.3,37.6 1121.8,39.9 1122.2,42.4"/>
<polygon points="1200.2,-0.6 1201.9,-1.6 1205.0,-0.0 1205.2,2.2 1205.4,4.4 1202.4,3.4 1199.6,1.3"/>
<polygon points="1078.4,73.1 1079.8,71.2 1084.1,68.7 1089.6,68.7 1089.3,70.5 1088.6,71.9 1085.3,73.9 1080.8,74.0"/>
<polygon points="1062.9,103.3 1063.5,104.0 1062.2,104.8 1061.1,105.1 1060.1,104.9 1060.6,103.9 1061.3,103.1 1062.7,102.3"/>
<polygon points="1080.9,88.0 1081.0,91.0 1080.1,94.4 1078.2,98.7 1076.0,98.9 1075.3,97.3 1075.2,95.4 1075.4,91.5 1078.3,90.1"/>
<polygon points="1004.5,69.7 1002.4,67.5 1001.9,63.0 1003.8,62.7 1005.8,62.4 1005.8,66.7"/>
<polygon points="1092.4,73.6 1091.0,69.9 1093.8,67.9 1096.2,68.5 1095.5,71.5"/>
<polygon points="1168.0,37.8 1167.9,35.7 1168.8,33.7 1170.1,32.0 1171.6,32.0 1171.3,34.7 1169.6,36.5"/>
<polygon points="1134.9,100.3 1133.4,97.5 1134.1,94.2 1135.1,94.1 1135.6,96.9"/>
<polygon points="1089.2,13.2 1085.7,16.1 1079.9,17.5 1074.9,16.0 1077.2,13.4 1079.3,10.8 1086.0,10.6"/>
<polygon points="1131.1,8.5 1129.5,12.9 1125.1,16.1 1124.2,13.4 1126.5,9.5"/>
<polygon points="1056.3,101.4 1055.7,100.4 1056.0,99.2 1056.5,98.3 1057.4,97.6 1058.5,97.8 1058.6,99.1 1059.0,100.8 1057.6,101.9"/>
<polygon points="1054.2,81.6 1055.8,84.0 1056.7,87.4 1055.9,90.7 1053.9,91.8 1052.9,87.5 1052.4,83.3"/>
<polygon points="1039.7,29.6 1041.0,33.4 1035.0,40.3 1031.8,37.3 1035.6,29.1"/>
<polygon points="1056.8,43.6 1055.7,44.4 1054.4,43.4 1054.4,42.4 1056.1,42.4"/>
<polygon points="1006.8,34.5 1007.0,38.4 1003.2,43.3 999.8,41.0 1002.5,34.5"/>
<polygon points="1015.5,27.2 1017.2,29.3 1018.5,31.5 1019.3,34.9 1018.1,36.3 1016.5,34.8 1014.9,32.5 1014.6,29.3"/>
<polygon points="1071.0,38.7 1072.2,38.8 1073.4,40.0 1073.7,41.5 1072.9,41.8 1071.7,41.3 1071.0,39.9"/>
<polygon points="1069.7,80.6 1068.3,79.0 1072.0,77.8 1075.2,77.3 1076.6,78.5 1076.1,80.2 1073.4,82.2 1070.1,82.1"/>
<polygon points="1099.2,93.0 1097.3,91.6 1096.6,87.5 1095.7,83.7 1097.3,83.2 1098.3,83.1 1099.8,83.3 1100.8,87.2 1099.7,89.4"/>
<polygon points="1045.8,15.0 1044.8,20.2 1042.3,27.1 1038.4,27.8 1036.6,24.3 1041.6,16.5"/>
<polygon points="1067.1,93.5 1066.3,92.0 1068.2,89.9 1069.8,89.1 1068.8,93.0"/>
<polygon points="1035.3,96.0 1035.8,91.1 1036.5,87.3 1039.6,82.7 1040.3,86.7 1042.1,89.3 1038.7,92.9"/>
<polygon points="1082.2,27.7 1086.5,29.8 1090.3,35.6 1090.1,38.6 1087.2,37.6 1084.4,33.0"/>
<polygon points="1046.6,62.2 1044.4,61.6 1044.3,56.6 1046.3,56.8 1047.5,60.4"/>
<polygon points="1041.4,34.2 1040.7,34.3 1040.1,32.9 1040.3,31.8 1040.9,31.5 1042.0,32.1 1042.2,33.9"/>
<polygon points="1137.0,62.6 1136.2,60.8 1138.9,60.0 1141.2,61.1 1142.9,62.1 1141.8,63.3 1140.6,63.9 1138.9,64.7 1136.0,64.3"/>
<polygon points="1055.5,18.8 1056.8,21.3 1058.2,22.8 1058.3,25.8 1056.7,25.3 1055.7,25.1 1054.7,23.4 1055.1,21.6"/>
<polygon points="1125.6,12.7 1126.2,12.8 1127.0,13.3 1128.4,14.3 1128.4,15.2 1128.4,16.2 1126.9,15.0 1125.9,14.2 1125.0,12.9"/>
<polygon points="1177.6,52.2 1175.9,52.0 1174.0,47.4 1174.6,45.0 1176.7,47.0 1179.1,51.3"/>
<polygon points="1153.0,35.4 1152.2,35.5 1150.9,34.3 1151.3,33.1 1151.9,32.7 1152.8,33.5 1153.3,34.7"/>
<polygon points="1027.3,84.8 1029.8,86.0 1032.0,88.7 1034.2,91.4 1034.5,93.7 1034.4,96.4 1031.3,94.8 1027.9,90.9 1027.8,87.7"/>
<polygon points="1086.7,84.0 1085.7,82.7 1086.4,80.8 1086.9,79.6 1088.2,78.4 1088.7,80.1 1088.8,81.5 1088.0,82.8"/>
<polygon points="1095.5,89.9 1093.8,90.1 1091.8,89.4 1090.8,87.0 1091.9,85.0 1094.2,85.3 1095.9,86.5 1095.9,88.3"/>
<polygon points="1168.2,48.0 1167.3,52.5 1161.5,57.5 1158.2,56.3 1163.7,47.7"/>
<polygon points="1125.3,62.6 1126.9,64.5 1128.3,67.8 1128.2,70.7 1126.9,70.3 1126.0,67.9 1124.9,65.0"/>
<polygon points="1072.1,53.9 1071.2,56.2 1068.8,58.4 1065.8,60.9 1065.0,59.6 1067.2,56.9 1070.0,54.3"/>
<polygon points="1149.7,84.0 1149.3,82.9 1149.4,81.0 1150.5,79.3 1151.1,80.3 1151.6,81.5 1150.7,83.7"/>
<polygon points="1153.5,57.1 1155.1,57.2 1156.9,56.7 1159.6,58.8 1161.7,60.7 1161.0,61.8 1158.5,61.6 1155.6,59.8 1152.4,57.9"/>
<polygon points="1125.5,45.5 1126.6,45.6 1126.5,47.4 1126.1,48.8 1124.9,48.1 1124.7,46.1"/>
<polygon points="1158.5,39.0 1158.8,43.2 1153.5,48.4 1147.7,50.8 1148.3,45.0 1154.3,39.7"/>
<polygon points="1163.8,73.1 1162.6,73.1 1160.8,72.0 1159.3,69.8 1160.2,69.0 1161.5,69.4 1163.1,70.0 1164.6,72.2"/>
<polygon points="1091.6,75.9 1093.2,76.1 1092.4,78.0 1091.3,79.0 1089.9,79.0 1089.3,77.2 1090.6,75.9"/>
<polygon points="1082.9,42.9 1082.3,44.1 1081.5,44.9 1080.6,45.2 1079.5,45.5 1080.0,44.5 1080.5,43.7 1081.6,43.2"/>
<polygon points="997.1,63.0 995.3,60.6 994.4,55.9 994.5,50.8 996.4,51.3 997.5,55.8 998.7,61.2"/>
<polygon points="1150.2,84.2 1147.0,81.6 1142.8,79.4 1142.2,74.2 1142.0,70.6 1145.2,73.0 1148.7,75.8 1151.1,81.5"/>
<polygon points="1081.1,109.1 1079.7,109.4 1078.1,109.8 1075.8,108.8 1075.2,107.3 1075.7,106.3 1077.6,106.6 1079.3,106.7 1079.8,107.9"/>
<polygon points="1193.8,1.5 1196.0,3.4 1197.1,8.8 1195.5,10.4 1192.6,4.0"/>
<polygon points="1080.6,59.0 1081.7,58.1 1082.7,58.0 1083.1,58.8 1081.9,59.7"/>
<polygon points="1097.5,12.2 1098.4,11.0 1100.1,10.0 1102.2,10.3 1103.1,11.0 1103.9,11.9 1102.4,12.7 1100.8,12.6 1099.5,12.6"/>
<polygon points="1103.7,34.2 1100.4,40.1 1094.5,44.3 1090.9,43.8 1097.6,36.1"/>
<polygon points="1055.1,91.2 1055.2,90.4 1055.8,89.7 1056.8,89.3 1057.9,89.3 1057.6,90.3 1056.7,91.0 1055.8,91.6"/>
<polygon points="1103.6,89.9 1105.4,89.9 1107.5,90.1 1109.2,91.7 1110.5,92.9 1110.0,93.6 1108.4,93.4 1106.7,92.5 1105.1,91.5"/>
<polygon points="1111.6,71.4 1110.5,73.3 1107.4,71.1 1106.4,69.0 1107.1,67.5 1109.8,67.0 1111.0,69.8"/>
<polygon points="1038.6,43.6 1037.2,42.0 1039.4,37.7 1041.7,35.2 1043.1,35.9 1042.3,39.2 1040.8,43.7"/>
<polygon points="1060.3,14.1 1061.6,12.1 1068.5,16.1 1070.2,19.6 1068.9,20.5 1065.4,20.1 1060.7,16.4"/>
<polygon points="1098.3,86.4 1097.0,85.1 1096.1,82.4 1096.5,79.8 1097.9,79.6 1098.7,82.2 1098.8,84.3"/>
<polygon points="1036.7,19.4 1038.4,24.7 1038.1,31.6 1035.2,29.8 1033.9,24.1"/>
<polygon points="1031.4,23.9 1029.6,27.0 1027.0,30.6 1021.3,33.3 1018.5,32.2 1021.4,28.6 1023.4,25.1 1027.3,24.9"/>
<polygon points="1140.7,19.6 1137.2,20.2 1133.8,20.7 1132.8,18.4 1132.1,16.4 1135.2,16.1 1138.9,17.1"/>
<polygon points="1082.0,100.6 1082.1,102.7 1081.4,105.8 1078.6,111.6 1074.9,113.7 1075.2,109.9 1073.6,108.2 1077.3,103.0 1080.0,101.7"/>
<polygon points="1081.9,-0.2 1088.9,4.0 1092.5,8.1 1092.0,10.5 1085.8,6.4"/>
<polygon points="1143.7,95.6 1142.3,91.8 1142.8,88.5 1145.8,87.9 1146.1,92.3"/>
<polygon points="1158.6,39.8 1155.9,38.4 1161.8,32.3 1167.5,26.2 1168.0,29.9 1166.2,35.1 1161.3,39.2"/>
<polygon points="1172.1,29.4 1170.8,31.3 1167.3,26.8 1167.4,23.0 1168.0,21.7 1169.1,19.6 1171.7,24.5 1173.9,29.1"/>
<polygon points="1082.7,100.0 1085.0,101.6 1083.3,106.6 1081.7,106.6 1080.8,102.0"/>
<polygon points="1030.6,46.0 1030.9,47.9 1028.8,49.2 1027.0,48.5 1026.2,47.7 1025.3,46.3 1027.3,45.3 1028.9,45.6"/>
<polygon points="1017.6,79.2 1016.7,78.5 1016.7,75.9 1016.9,72.2 1018.3,72.6 1019.3,75.5 1018.9,79.7"/>
<polygon points="1147.7,10.2 1148.8,11.3 1149.6,12.0 1149.8,13.1 1150.1,14.5 1149.1,14.1 1148.4,12.7 1147.9,11.6"/>
<polygon points="1069.1,84.0 1068.8,85.8 1067.6,87.8 1065.7,87.6 1064.9,86.7 1065.1,84.8 1067.4,83.5"/>
<polygon points="1002.9,51.8 1002.8,54.4 1002.3,57.8 999.5,57.1 997.1,56.7 997.6,53.5 1000.4,52.4"/>
<polygon points="1119.0,12.1 1119.8,13.9 1118.5,16.0 1116.7,15.4 1117.1,12.7"/>
<polygon points="1080.8,108.8 1084.0,106.0 1088.6,104.7 1092.5,104.5 1089.1,106.8 1085.0,108.9"/>
<polygon points="1007.1,14.7 1007.1,14.0 1007.8,13.5 1008.4,13.2 1009.3,13.1 1010.0,13.7 1009.4,14.6 1008.5,14.9 1007.9,14.8"/>
<polygon points="1059.4,28.9 1059.8,27.3 1060.9,25.4 1063.0,25.7 1063.5,27.2 1062.6,28.6 1060.9,29.9"/>
<polygon points="1058.9,11.0 1060.8,10.9 1064.6,14.5 1064.6,17.7 1063.8,19.5 1060.4,17.4 1057.6,12.4"/>
<polygon points="1204.7,3.3 1205.5,5.9 1201.9,7.6 1200.2,6.0 1202.1,2.3"/>
<polygon points="1130.7,52.0 1132.4,51.1 1133.3,49.7 1134.5,50.8 1136.6,51.3 1134.8,52.3 1133.8,53.7 1131.7,53.2"/>
<polygon points="1023.7,10.5 1027.0,9.7 1033.9,10.7 1031.3,12.8 1025.4,13.2"/>
<polygon points="1167.0,68.2 1165.2,68.5 1163.6,68.3 1162.6,67.2 1163.1,66.3 1164.4,65.0 1166.5,66.5"/>
<polygon points="1184.3,50.7 1183.4,50.0 1183.8,48.4 1184.5,47.3 1185.2,47.0 1185.7,47.4 1186.6,47.7 1186.3,49.3 1185.3,50.0"/>
<polygon points="1127.9,39.5 1127.0,38.9 1126.4,36.7 1126.8,34.0 1127.8,33.9 1128.9,33.8 1129.5,36.7 1129.0,39.7"/>
<polygon points="1117.6,62.5 1118.3,61.4 1120.6,61.2 1121.5,62.1 1121.9,62.8 1120.6,63.5 1119.1,63.1"/>
<polygon points="1180.1,39.3 1181.0,39.8 1180.7,41.7 1179.4,43.0 1178.0,44.3 1177.6,43.0 1177.8,41.8 1178.3,40.6 1179.2,39.5"/>
<polygon points="1190.5,30.0 1191.4,30.9 1191.8,32.3 1191.8,33.6 1191.0,33.7 1190.0,32.9 1189.4,30.6"/>
<polygon points="1041.3,82.7 1042.0,82.1 1042.8,81.6 1044.0,81.8 1044.2,82.5 1044.8,83.2 1043.6,83.3 1042.7,83.9 1041.7,83.4"/>
<polygon points="1041.2,67.0 1042.3,65.6 1045.5,64.1 1047.8,65.0 1047.3,67.3 1042.3,68.4"/>
<polygon points="1196.2,40.5 1193.2,40.2 1191.9,35.4 1193.6,33.2 1196.3,34.0 1197.3,37.8"/>
<polygon points="997.4,57.9 997.0,60.0 995.2,61.9 993.6,62.3 994.3,60.5 995.3,59.2"/>
<polygon points="1046.7,38.7 1045.0,37.5 1044.2,33.6 1043.7,28.3 1045.5,25.4 1047.5,26.1 1049.8,27.8 1050.2,34.1 1048.7,38.7"/>
<polygon points="1194.2,13.4 1195.2,11.7 1197.4,12.7 1199.2,13.7 1198.6,15.3 1197.6,16.3 1195.9,16.2 1193.8,15.3"/>
<polygon points="1114.7,63.2 1113.8,66.1 1110.6,69.2 1108.2,69.5 1107.1,68.8 1107.9,66.2 1112.1,63.1"/>
<polygon points="1144.4,85.0 1143.4,85.8 1140.7,86.3 1139.3,85.4 1138.0,84.3 1141.1,84.1 1144.3,83.8"/>
<polygon points="1079.3,38.2 1078.4,36.9 1080.0,34.1 1081.5,31.1 1083.6,30.3 1084.2,32.4 1083.4,36.0 1080.8,38.4"/>
<polygon points="1051.6,111.0 1050.8,111.5 1050.0,109.9 1049.4,108.7 1049.7,107.8 1049.9,106.4 1051.2,107.5 1051.7,109.1 1052.2,110.5"/>
<polygon points="1171.9,61.8 1171.9,63.6 1170.9,65.8 1169.7,67.0 1168.6,67.2 1169.4,64.9 1170.4,63.4"/>
<polygon points="1131.8,90.8 1133.7,92.6 1135.8,93.7 1137.0,97.6 1137.0,100.7 1135.7,102.5 1133.4,98.4 1130.3,95.7 1129.5,90.8"/>
<polygon points="1046.4,53.4 1048.6,55.1 1050.9,57.3 1050.0,58.2 1048.9,58.3 1046.7,55.8"/>
<polygon points="1189.2,43.8 1186.5,41.1 1185.5,37.8 1188.3,37.3 1191.0,40.2"/>
<polygon points="1088.4,64.7 1089.2,64.3 1090.4,65.6 1090.1,66.4 1089.3,66.6 1088.0,65.5"/>
<polygon points="1188.9,27.8 1189.7,30.4 1189.4,33.8 1188.8,37.7 1187.4,37.8 1185.8,40.0 1186.0,36.2 1186.2,33.2 1187.2,29.3"/>
<polygon points="1147.1,23.9 1149.2,24.5 1148.8,28.1 1147.4,29.5 1145.6,25.4"/>
<polygon points="1092.8,6.5 1091.4,6.7 1089.5,6.2 1088.2,4.8 1089.9,4.3 1092.0,5.4"/>
<polygon points="1122.7,53.3 1120.5,52.8 1120.5,48.7 1120.4,44.6 1122.6,44.5 1124.3,45.4 1125.1,48.6 1125.0,52.8"/>
<polygon points="1153.5,35.0 1152.2,34.7 1150.4,32.8 1149.2,30.7 1149.5,29.7 1150.6,29.8 1152.4,31.4 1153.7,33.8"/>
<polygon points="1006.1,10.2 1006.6,11.9 1004.5,14.2 1002.2,15.6 1001.3,14.7 1000.1,13.8 1001.8,11.3 1004.1,10.5"/>
<polygon points="1133.6,23.2 1134.2,22.7 1135.6,22.5 1138.0,23.1 1138.7,24.7 1137.8,25.5 1136.3,25.7 1134.7,25.0 1132.3,24.1"/>
<polygon points="1182.9,4.3 1181.8,3.0 1184.9,0.3 1187.6,-1.9 1188.8,-0.9 1189.8,-0.4 1189.0,1.3 1187.2,3.4 1184.9,4.1"/>
<polygon points="1163.3,51.4 1162.2,48.8 1163.4,46.2 1165.3,46.7 1165.6,49.7"/>
<polygon points="1049.8,53.4 1050.7,53.6 1051.4,53.7 1051.7,54.4 1051.7,55.0 1051.5,55.5 1050.8,55.3 1050.4,54.9 1049.7,54.2"/>
<polygon points="1151.6,5.4 1151.3,6.4 1150.1,7.4 1148.7,6.4 1147.1,6.2 1147.4,5.2 1148.2,4.4 1149.8,3.9 1151.3,4.4"/>
<polygon points="1075.9,95.8 1074.6,95.6 1072.8,92.3 1073.6,90.5 1075.4,91.5 1076.9,94.8"/>
<polygon points="1136.9,41.1 1136.2,40.6 1137.0,39.9 1137.4,39.1 1138.3,38.8 1138.9,39.4 1138.5,40.3 1138.3,41.1 1137.5,41.4"/>
<polygon points="1124.4,86.9 1124.8,89.4 1123.2,92.2 1120.2,94.7 1118.2,93.0 1117.5,91.6 1116.8,89.6 1119.3,88.0 1122.3,85.2"/>
<polygon points="1130.8,96.2 1133.8,96.6 1135.4,98.6 1136.1,100.9 1134.9,103.8 1132.0,101.5 1130.4,99.1"/>
<polygon points="1069.4,35.2 1072.3,35.6 1074.1,38.5 1073.2,40.2 1071.4,40.5 1068.9,38.1"/>
<polygon points="1077.2,86.5 1076.5,85.7 1075.9,83.6 1076.6,82.8 1077.2,81.1 1077.7,83.7 1077.5,85.3"/>
<polygon points="1067.4,15.2 1066.3,15.8 1064.1,15.7 1062.0,15.0 1057.8,13.7 1060.8,13.1 1061.7,11.9 1065.0,12.8 1066.5,14.1"/>
<polygon points="1035.0,85.5 1034.0,87.3 1030.5,85.2 1027.9,81.8 1029.8,80.7 1031.2,79.9 1034.3,81.0 1036.4,84.3"/>
<polygon points="1099.5,36.5 1099.9,34.6 1103.8,33.2 1106.5,33.1 1107.1,34.3 1105.9,36.9 1101.7,37.0"/>
<polygon points="1164.2,54.1 1165.9,55.7 1165.7,58.7 1164.0,59.5 1163.4,56.3"/>
<polygon points="1123.2,61.5 1121.0,63.2 1115.6,56.7 1114.5,51.2 1115.9,48.1 1121.0,53.8 1123.2,58.7"/>
<polygon points="1028.7,37.2 1026.7,37.8 1024.5,37.4 1021.6,36.7 1020.4,34.7 1022.0,33.7 1023.2,32.2 1025.9,34.0 1029.2,35.3"/>
<polygon points="1188.6,47.8 1187.7,49.0 1183.4,48.3 1177.1,47.4 1174.1,44.8 1179.8,44.6 1184.2,44.4 1191.0,46.0"/>
<polygon points="1154.8,30.3 1154.5,28.6 1157.6,26.5 1161.5,27.9 1164.2,28.5 1166.1,30.1 1161.7,31.1 1158.7,32.0 1153.6,32.6"/>
<polygon points="1103.2,82.2 1103.4,80.1 1104.4,78.5 1105.5,76.3 1106.9,77.1 1107.8,77.6 1108.5,79.0 1107.0,81.0 1105.0,82.6"/>
<polygon points="1163.1,39.9 1162.1,40.6 1159.5,41.0 1157.5,40.4 1157.9,39.6 1159.6,39.1 1162.4,39.0"/>
<polygon points="1007.8,45.7 1006.2,48.6 1001.3,50.3 1002.0,47.4 1004.6,44.3"/>
<polygon points="1032.5,53.4 1033.3,52.8 1034.7,53.7 1036.0,54.6 1036.1,55.8 1035.1,56.3 1033.5,55.5 1032.4,54.3"/>
<polygon points="1030.8,39.9 1032.9,40.1 1033.4,42.7 1031.6,44.5 1029.1,41.8"/>
<polygon points="1099.4,26.4 1100.4,28.2 1098.9,30.5 1097.0,32.6 1095.9,31.0 1095.9,28.9 1097.5,27.3"/>
<polygon points="1201.2,5.4 1201.3,7.3 1198.8,7.5 1197.2,5.6 1195.5,4.1 1196.2,2.5 1198.4,2.4 1200.1,3.3 1202.3,4.2"/>
<polygon points="1055.9,89.9 1055.6,93.2 1054.5,95.8 1053.1,95.7 1054.0,92.5"/>
<polygon points="1094.4,53.1 1095.5,50.6 1099.9,48.0 1103.7,47.8 1101.1,50.9 1096.5,54.4"/>
<polygon points="1153.0,47.3 1149.0,49.4 1143.4,50.6 1139.7,49.3 1143.3,47.1 1149.8,45.4"/>
<polygon points="1147.9,63.2 1147.8,66.8 1142.9,69.8 1138.8,68.6 1141.6,65.0 1144.7,61.9"/>
<polygon points="1066.2,13.2 1067.0,14.2 1066.5,16.8 1065.8,18.1 1065.0,18.6 1065.1,16.5 1065.3,14.2"/>
<polygon points="1153.3,57.6 1154.2,53.6 1157.0,49.7 1161.6,46.4 1161.1,50.4 1160.8,53.3 1157.3,56.0"/>
<polygon points="852.5,194.6 851.7,197.7 849.3,200.9 847.6,200.6 849.7,195.3"/>
<polygon points="813.4,45.6 814.2,44.3 815.5,43.1 816.2,43.8 816.4,44.7 814.9,45.5"/>
<polygon points="785.1,97.3 784.1,97.4 783.0,94.4 783.4,93.6 784.2,93.8 785.8,96.6"/>
<polygon points="795.5,97.8 797.9,97.7 801.5,100.9 801.3,103.1 796.6,100.0"/>
<polygon points="830.3,61.7 829.4,62.9 827.2,63.2 827.0,62.3 828.9,61.0"/>
<polygon points="828.2,192.2 825.9,191.6 823.8,189.8 823.0,187.4 825.5,188.4 827.5,189.9"/>
<polygon points="848.0,208.0 847.3,208.6 844.4,208.3 841.3,207.1 842.8,206.4 844.8,205.9 848.0,207.1"/>
<polygon points="803.9,94.6 805.3,95.0 807.3,97.2 806.0,97.2 804.2,96.0"/>
<polygon points="869.5,105.2 868.4,105.1 866.8,103.0 865.9,101.5 864.8,99.2 866.5,100.3 867.9,102.1 869.8,104.3"/>
<polygon points="821.2,58.7 821.7,60.5 819.4,62.8 817.9,62.1 819.6,59.4"/>
<polygon points="828.0,195.6 827.5,194.5 831.4,193.7 833.4,194.2 835.6,194.9 832.2,196.3 829.1,196.1"/>
<polygon points="834.6,145.0 833.4,145.7 830.5,144.2 828.3,142.9 828.1,141.6 830.9,141.9 834.7,143.7"/>
<polygon points="805.6,61.8 807.4,61.1 809.9,60.9 812.3,62.4 813.3,64.1 811.0,64.5 808.8,64.7 806.2,63.4"/>
<polygon points="885.9,103.1 884.4,104.6 880.3,105.3 875.3,106.3 872.5,105.2 875.9,103.5 879.8,102.1 884.6,101.9"/>
<polygon points="864.2,66.3 864.2,63.3 863.8,60.5 865.8,58.8 867.3,57.0 868.1,58.6 867.1,61.6 866.0,65.0"/>
<polygon points="788.4,196.2 786.4,197.1 783.2,190.6 782.9,186.9 786.0,189.2 788.8,194.1"/>
<polygon points="857.7,37.3 857.2,37.9 855.8,37.9 853.9,37.7 854.5,36.9 855.8,36.7 857.4,36.6"/>
<polygon points="776.7,150.1 776.4,151.2 773.3,152.1 771.3,151.9 771.6,151.1 772.7,150.0 775.5,149.5"/>
<polygon points="844.6,107.6 846.2,103.8 849.6,101.8 852.0,102.6 848.5,106.4"/>
<polygon points="825.9,253.8 824.9,255.1 822.5,255.7 820.8,255.4 818.5,255.1 820.2,253.9 822.0,253.3 823.8,253.4"/>
<polygon points="801.6,135.3 801.1,135.2 800.8,134.5 801.0,133.6 801.5,133.5 802.0,133.6 802.0,134.5 802.1,135.3"/>
<polygon points="804.2,138.4 802.4,140.3 798.4,139.0 798.4,136.5 802.2,137.0"/>
<polygon points="813.8,184.3 812.4,185.9 808.2,184.9 807.4,182.8 809.9,182.5 813.0,182.4"/>
<polygon points="825.0,154.5 825.4,155.9 823.4,159.3 820.3,162.4 819.1,161.8 818.5,160.5 821.0,157.3 822.9,156.1"/>
<polygon points="875.1,158.4 875.1,159.6 873.7,160.9 872.1,161.3 871.3,160.7 870.8,159.8 872.0,158.2 873.6,158.5"/>
<polygon points="792.1,219.0 791.6,216.9 794.1,213.6 795.1,215.1 793.9,218.0"/>
<polygon points="851.1,217.8 849.9,218.3 848.3,218.4 846.6,217.9 848.4,217.4 849.9,217.3"/>
<polygon points="845.1,180.2 843.1,181.1 839.5,179.3 837.0,177.8 837.7,176.8 840.2,176.6 843.4,178.2"/>
<polygon points="781.7,174.2 780.5,173.3 781.0,169.8 782.1,169.2 782.9,170.3 782.8,173.1"/>
<polygon points="869.4,64.6 868.1,64.8 865.1,63.9 863.9,61.9 863.0,59.8 866.8,61.3 869.4,63.3"/>
<polygon points="878.3,23.0 878.1,26.5 873.5,31.8 873.3,29.1 875.1,24.3"/>
<polygon points="829.7,72.8 829.0,71.9 830.2,69.9 831.7,68.6 832.6,69.0 833.9,69.5 832.6,71.8 830.7,73.6"/>
<polygon points="822.7,222.4 823.5,223.4 823.8,225.4 823.0,226.3 821.6,226.3 821.7,223.0"/>
<polygon points="827.0,235.9 826.0,235.4 827.3,233.1 828.4,230.3 830.1,229.7 830.1,231.9 829.5,234.2 828.1,235.4"/>
<polygon points="862.1,25.6 860.6,28.1 857.4,30.1 854.7,30.2 852.8,29.2 856.3,27.1 859.2,25.3"/>
<polygon points="806.9,182.9 804.4,183.9 799.5,182.8 796.5,180.6 800.0,179.8 805.0,180.9"/>
<polygon points="787.5,108.0 786.9,108.1 786.1,107.1 785.9,106.2 785.8,105.2 786.7,106.1 787.1,106.5 787.8,107.4"/>
<polygon points="822.3,29.6 822.6,30.9 819.3,31.8 816.6,32.6 815.6,31.7 818.1,29.8 821.3,29.0"/>
<polygon points="872.7,33.2 870.9,33.4 872.1,31.1 872.9,29.3 874.2,29.2 875.1,30.1 874.4,31.9 873.7,33.4"/>
<polygon points="777.0,148.3 777.7,150.3 774.8,152.9 773.0,151.7 775.0,148.3"/>
<polygon points="847.6,186.7 850.5,190.1 852.2,194.6 853.3,198.7 852.2,200.4 849.7,195.7 848.2,191.5"/>
<polygon points="780.6,144.4 780.5,148.1 778.9,152.2 777.9,151.2 778.4,147.0"/>
<polygon points="875.8,107.9 873.7,111.5 869.4,114.0 867.3,113.0 871.8,108.9"/>
<polygon points="858.9,83.1 860.3,82.8 862.3,82.7 864.1,84.1 863.8,85.1 863.6,86.3 860.9,86.0 859.9,84.3"/>
<polygon points="880.1,126.6 879.2,125.3 879.4,123.6 880.2,122.7 881.0,125.3"/>
<polygon points="863.5,40.9 865.4,41.4 866.9,42.9 866.8,44.3 865.4,44.4 864.1,42.8"/>
<polygon points="844.2,60.7 845.8,60.6 847.9,60.8 848.5,61.6 847.1,61.7 844.9,61.6"/>
<polygon points="830.8,234.4 829.5,233.6 828.2,230.0 828.6,227.7 830.2,229.9 831.6,233.3"/>
<polygon points="875.8,177.1 878.3,176.5 881.2,180.6 879.2,181.1 876.5,179.5"/>
<polygon points="876.2,95.8 877.2,97.2 875.6,100.8 874.3,99.5 874.6,96.5"/>
<polygon points="803.1,26.5 804.3,25.8 806.0,25.3 807.9,25.8 809.4,26.5 807.9,27.2 806.0,27.2 804.7,27.0"/>
<polygon points="820.3,250.7 819.9,250.3 820.0,249.4 820.7,248.8 821.1,249.6 820.8,250.5"/>
<polygon points="868.3,33.9 867.3,36.4 864.0,39.3 861.6,39.6 860.1,39.2 861.6,36.5 865.0,35.1"/>
<polygon points="819.6,60.8 818.2,62.7 815.5,65.1 813.1,64.9 813.9,62.8 817.5,60.8"/>
<polygon points="806.5,85.4 805.3,86.3 802.2,84.6 801.2,82.6 803.3,82.2 806.4,83.9"/>
<polygon points="818.2,77.9 817.1,76.5 818.6,74.2 819.5,73.8 820.0,74.8 819.6,77.0"/>
<polygon points="845.8,61.9 847.6,63.4 849.0,65.3 848.5,66.4 846.1,64.0"/>
<polygon points="809.9,221.1 809.0,223.8 805.7,225.5 802.7,226.8 804.5,224.3 806.8,222.2"/>
<polygon points="812.9,197.4 814.1,199.0 815.1,202.3 814.9,206.3 813.7,207.0 812.4,206.6 812.4,202.6 812.5,200.5"/>
<polygon points="772.8,66.7 771.4,68.7 770.2,70.6 767.8,71.7 767.5,71.0 766.0,71.0 768.4,68.4 770.5,67.9"/>
<polygon points="814.9,198.7 812.4,199.6 808.9,199.0 806.6,198.3 807.2,197.5 808.7,196.5 812.4,197.4"/>
<polygon points="869.9,43.2 870.2,42.0 870.5,40.9 871.4,39.9 872.4,39.1 872.0,40.5 871.6,41.6 870.8,42.4"/>
<polygon points="836.4,113.4 836.7,111.0 840.1,111.4 841.9,113.0 838.2,114.0"/>
<polygon points="845.8,251.1 842.0,251.4 838.7,249.7 840.0,248.3 842.8,248.6"/>
<polygon points="836.3,29.5 836.1,31.1 834.5,33.5 832.8,34.7 831.4,35.4 831.0,34.5 832.6,31.9 835.0,29.6"/>
<polygon points="823.7,234.8 823.4,235.6 822.6,236.5 821.6,236.5 822.1,235.5 822.8,234.9"/>
<polygon points="799.5,130.8 800.4,131.9 799.5,134.3 798.5,134.8 798.7,132.0"/>
<polygon points="852.6,198.3 853.3,197.3 855.4,198.4 855.2,199.8 855.0,200.6 853.7,200.6 852.6,199.4"/>
<polygon points="867.5,116.0 867.2,111.8 868.8,107.1 870.3,105.9 871.2,107.5 869.8,112.0"/>
<polygon points="892.7,151.1 892.2,151.9 890.7,152.5 889.8,151.8 890.1,150.6 892.0,150.6"/>
<polygon points="699.3,77.4 699.5,76.1 700.6,74.3 701.3,75.0 700.5,76.9"/>
<polygon points="765.4,84.8 763.7,84.3 762.1,82.7 762.9,82.3 764.6,83.2"/>
<polygon points="657.2,60.3 655.8,62.7 654.0,64.6 652.2,65.3 649.7,66.6 651.5,64.4 652.4,62.7 655.2,60.4"/>
<polygon points="751.3,40.6 750.4,41.4 748.9,41.7 749.1,40.7 750.2,39.9"/>
<polygon points="702.6,107.3 704.0,105.8 705.8,104.4 706.8,105.0 706.9,106.2 704.2,107.9"/>
<polygon points="646.9,99.4 647.7,102.0 648.5,105.5 647.2,106.6 645.7,105.7 646.2,101.9"/>
<polygon points="707.9,127.9 707.1,130.7 705.0,132.1 704.0,131.2 704.9,128.3"/>
<polygon points="734.9,77.8 735.9,76.2 738.0,75.8 739.2,76.7 736.8,77.8"/>
<polygon points="738.5,23.9 738.4,22.7 741.9,22.4 744.3,22.9 747.6,23.7 744.7,24.7 742.0,25.1 738.2,25.2"/>
<polygon points="690.8,120.6 689.1,120.8 687.5,120.5 686.5,120.1 686.5,119.6 687.8,119.6 689.5,119.9"/>
<polygon points="742.0,65.1 741.5,65.0 741.8,63.7 742.3,63.2 742.6,63.4 742.8,64.0 742.4,64.7"/>
<polygon points="711.7,137.0 713.3,137.5 714.4,139.7 714.7,142.0 712.8,140.6 711.9,138.9"/>
<polygon points="744.6,142.1 744.7,142.9 743.8,144.0 743.2,143.7 742.9,143.2 743.7,142.1"/>
<polygon points="721.6,106.3 722.2,105.3 724.9,106.4 727.2,106.9 727.7,108.0 726.2,108.4 724.3,108.5 722.0,107.4"/>
<polygon points="698.3,92.1 699.8,92.5 700.2,94.5 699.0,95.9 697.5,93.5"/>
<polygon points="702.0,54.3 704.4,55.4 706.5,57.5 706.3,59.1 703.2,56.6"/>
<polygon points="651.2,73.7 651.0,74.6 648.3,73.9 645.3,73.7 645.0,72.7 645.6,71.7 648.7,71.8 651.4,72.8"/>
<polygon points="654.2,73.3 653.6,73.0 652.6,71.7 653.1,70.4 654.1,71.5 654.8,72.9"/>
<polygon points="700.9,100.2 700.1,98.8 700.1,96.9 701.3,96.2 701.4,98.6"/>
<polygon points="645.5,55.2 647.3,56.0 649.4,58.3 650.0,60.7 648.1,61.1 645.3,56.9"/>
<polygon points="641.1,86.0 642.5,85.3 644.2,85.1 645.4,85.5 645.8,86.2 644.4,86.9 642.5,86.8"/>
<polygon points="698.3,48.7 697.7,49.0 696.4,48.4 694.9,47.1 695.4,46.1 697.3,47.2 699.2,48.0"/>
<polygon points="766.0,113.5 764.8,112.0 763.5,110.3 763.3,107.4 763.8,104.7 765.4,107.2 767.1,109.4 767.0,112.6"/>
<polygon points="677.8,99.9 677.4,100.5 675.9,100.5 676.0,99.8 677.4,99.3"/>
<polygon points="688.9,110.1 688.6,108.7 690.1,106.8 692.0,105.1 693.6,105.7 692.3,108.4 690.4,109.4"/>
<polygon points="727.3,159.7 725.9,158.9 727.1,155.4 728.1,153.8 729.5,152.8 729.8,155.7 728.4,157.8"/>
<polygon points="673.3,72.5 675.4,71.0 677.9,70.4 678.5,71.7 675.7,73.3"/>
<polygon points="741.3,71.3 741.8,72.1 741.5,74.3 740.2,75.3 739.2,75.4 739.2,73.4 740.4,72.2"/>
<polygon points="741.6,164.5 740.8,165.9 738.9,166.1 738.7,165.5 740.1,164.3"/>
<polygon points="714.7,47.2 715.9,48.5 717.5,50.4 716.7,52.2 715.7,53.0 714.1,51.3 714.1,48.6"/>
<polygon points="752.1,147.9 750.9,151.0 750.1,153.1 747.9,156.4 746.9,155.6 747.0,154.1 747.9,151.7 749.7,150.2"/>
<polygon points="749.0,115.2 749.2,114.7 750.3,114.9 750.9,115.2 751.2,115.5 750.8,115.8 750.2,116.0 749.5,115.7"/>
<polygon points="750.5,50.1 750.8,50.4 751.2,50.8 751.1,51.5 750.9,51.7 750.4,51.9 750.3,51.0 750.2,50.3"/>
<polygon points="650.1,53.5 650.6,52.1 650.9,51.0 652.1,49.9 653.3,49.5 652.5,51.1 652.2,52.1 651.1,53.1"/>
<polygon points="749.5,71.6 750.5,73.0 751.4,75.1 750.9,77.0 750.0,77.2 748.9,75.5 748.2,72.1"/>
</g>
<g fill="none" stroke="#ccd0dc" stroke-width="0.7" stroke-linejoin="round">
<polyline points="1092.6,352.8 1115.7,362 1138.9,352.8 1157.4,362 1189.8,366.7"/>
<polyline points="1092.6,422.2 1125,431.5 1134.3,454.6 1130,476"/>
<polyline points="1138.9,352.8 1134.3,408.3 1138.9,431.5"/>
<polyline points="1069.4,408.3 1092.6,422.2"/>
<polyline points="1069.4,477.8 1060,524 1069.4,570.4 1092.6,598"/>
<polyline points="1111,487 1115.7,533.3 1106.5,579.6 1111,607"/>
<polyline points="1157.4,487 1162,533.3 1166.7,570.4 1138.9,616.7"/>
<polyline points="1037,524 1060,524 1115.7,533.3 1162,533.3 1203.7,538"/>
<polyline points="1027.8,570.4 1069.4,570.4 1106.5,579.6 1166.7,570.4 1208.3,579.6 1250,570.4"/>
<polyline points="1203.7,487 1203.7,538 1208.3,579.6 1194.4,616.7 1222.2,635.2 1250,640"/>
<polyline points="1125,250.9 1148,227.8 1162,200 1170,170"/>
<polyline points="1185.2,325 1203.7,292.6 1250,283.3"/>
<polyline points="1148,227.8 1194.4,246.3 1250,241.7"/>
<polyline points="457.8,592.8 480,595.6 507.8,598.3 513.3,584.4 521.7,567.8 530,540"/>
<polyline points="524.4,570.6 543.9,565 568.9,570.6 568.9,590 557.8,598.3 530,595.6 524.4,570.6"/>
<polyline points="507.8,598.3 496.7,612.2 491.1,640 510.6,651.1 518.9,662.2 543.9,659.4 555,648.3 557.8,623.3 557.8,598.3"/>
<polyline points="468.9,640 491.1,640"/>
<polyline points="518.9,662.2 541.1,684.4 538.3,712.2 516.1,717.8 502.2,734.4 491.1,745.6 485.6,762.2"/>
<polyline points="555,648.3 580,651.1 599.4,662.2 627.2,656.7"/>
<polyline points="541.1,684.4 543.9,712.2 568.9,706.7 585.6,728.9 599.4,723.3 616.1,717.8 641.1,706.7"/>
<polyline points="568.9,570.6 585.6,595.6 627.2,609.4 646.7,623.3"/>
<polyline points="596.7,723.3 599.4,751.1"/>
<polyline points="330,759.4 335.6,790"/>
<polyline points="371.7,765 396.7,767.8"/>
<polyline points="335.6,790 363.3,790 396.7,773.3 418.9,784.4 460.6,784.4"/>
<polyline points="460.6,784.4 457.8,806.7 452.2,840"/>
<polyline points="505,778.9 502.2,840"/>
<polyline points="288,801 313.3,806.7 335.6,806.7 343.9,840"/>
<polyline points="325,870 370,865 415,875 460,870 490,865"/>
<polyline points="335,920 380,915 435,910 452.5,920"/>
<polyline points="435,910 455,945"/>
<polyline points="415,795 420,832.5 415,875"/>
<polyline points="460,807.5 460,870 452.5,920"/>
<polyline points="500,800 495,837.5 490,865"/>
<polyline points="377.5,835 380,875 370,910"/>
<polyline points="660,477.5 672.5,460 710,457.5 735,470 757.5,465 777.5,460 805,447.5"/>
<polyline points="660,477.5 667.5,515 655,540 635,557.5"/>
<polyline points="735,470 740,502.5 762.5,520"/>
<polyline points="667.5,515 700,522.5 732.5,517.5 762.5,520"/>
<polyline points="700,522.5 705,552.5 720,580 715,625"/>
<polyline points="777.5,460 780,485 800,502.5"/>
<polyline points="825,465 860,460 897.5,440"/>
<polyline points="860,460 867.5,490 905,505 935,502.5 960,485 1010,490"/>
<polyline points="905,505 905,535"/>
<polyline points="935,502.5 925,465 920,440"/>
<polyline points="960,485 955,540"/>
<polyline points="822.5,522.5 830,552.5 855,565 880,560"/>
<polyline points="785,615 810,610 835,600 847.5,630 830,655"/>
<polyline points="910,610 915,645 945,660 980,645"/>
<polyline points="1097.8,845.7 1127.5,855.6 1157.2,849.7 1187,855.6 1216.6,849.7 1249.5,843.8"/>
<polyline points="1097.8,879.4 1127.5,885.3 1157.2,879.4 1187,889.3 1216.6,885.3 1249.5,891.3"/>
<polyline points="1127.5,855.6 1127.5,885.3 1137.4,909.1 1147.3,928.9"/>
<polyline points="1157.2,849.7 1157.2,879.4 1167.1,909.1 1177,925"/>
<polyline points="1187,855.6 1187,889.3 1196.8,915"/>
<polyline points="1097.8,911 1127.5,913 1167.1,909.1 1206.7,903.2 1249.5,909.1"/>
<polyline points="1117.6,938.8 1147.3,928.9 1177,925"/>
<polyline points="440,1000 465,975 490,985 515,982.5 540,990 590,970 615,990 640,985 665,970"/>
<polyline points="490,985 492,1030"/>
<polyline points="540,990 535,1030"/>
<polyline points="590,970 595,1030"/>
<polyline points="615,990 640,1015"/>
<polyline points="441,1001 460,985 490,985"/>
<polyline points="345,1020 370,1010 395,1020"/>
<polyline points="655,40 685,50 720,30 740,20"/>
<polyline points="660,90 700,100 735,90 765,95"/>
<polyline points="655,140 685,150 710,155"/>
<polyline points="642.5,220 640,180 665,160"/>
<polyline points="700,100 710,155 730,170"/>
<polyline points="785,30 822.5,20 860,15 885,10"/>
<polyline points="780,87.5 810,75 835,70 880,70"/>
<polyline points="785,140 810,135 847.5,140 885,135"/>
<polyline points="810,135 815,165 830,200 822.5,270"/>
<polyline points="847.5,140 847.5,175 867.5,200"/>
<polyline points="978.9,46 1004,34 1026,29.6 1044,22 1044,0"/>
<polyline points="1004,34 1010,83 992,96"/>
<polyline points="1047,34 1056,62 1060,83 1059,103.7"/>
<polyline points="1010,83 1035,75.6 1060,83 1085.6,83 1103,77 1118,89"/>
<polyline points="1085.6,83 1084,112.6"/>
<polyline points="1096,29.6 1103,77"/>
<polyline points="1118,22 1148,34 1162.6,59"/>
<polyline points="656.7,705 683.3,696.7 703.3,705 733.3,700 753.3,711.7"/>
<polyline points="703.3,705 710,731.7"/>
<polyline points="733.3,730 756.7,730 770,743.3"/>
<polyline points="763.3,750 766.7,771.7 783.3,780 803.3,776.7"/>
<polyline points="756.7,780 783.3,806.7 806.7,806.7 823.3,803.3"/>
<polyline points="806.7,806.7 808.3,823.3 823.3,830 833.3,816.7 840,830 856.7,846.7"/>
</g>
<g fill="none" stroke="#b2b8c8" stroke-width="0.8" stroke-linejoin="round">
<polyline points="765,0 767.5,25 767.5,62.5 780,75 780,87.5 770,95 775,125 772.5,145 760,150 755,170 752.5,187.5"/>
<polyline points="1208,0 1193,37.6 1169,67.7 1140.6,97.7 1118,127.8"/>
<polyline points="1129,165 1122,180 1112,203 1115,225 1120,230"/>
<polyline points="680,360 720,370"/>
<polyline points="950,680 970,725 1000,750 1050,750 1100,740 1140,730"/>
<polyline points="1000,750 1010,790 1000,810"/>
<polyline points="1000,815 1050,820 1090,810 1130,805 1140,790"/>
<polyline points="925,710 930,750 920,770 940,790 955,795"/>
<polyline points="955,795 1010,800 1010,830 960,840 940,840"/>
<polyline points="940,840 960,860 950,870"/>
<polyline points="1090,830 1100,810"/>
<polyline points="1040,230 1055.6,227.8 1092.6,246.3 1120.4,250.9 1125,292.6 1134,308.8 1157.4,315.7 1185.2,325 1194.4,357.4 1189.8,380.6 1203.7,394.4 1226.9,403.7 1231.5,417.6 1203.7,426.9 1208.3,454.6 1180.6,473.1 1152.8,482.4 1115.7,477.8 1069.4,470.8 1027.8,477.8"/>
<polyline points="1092.6,329.6 1097.2,338.9 1078.7,362 1069.4,385.2 1046.3,389.8 1027.8,385.2 1032.4,431.5 1027.8,477.8 1037,524 1004.6,570.4"/>
<polyline points="970,300 1000,297.2 1055.6,297.2 1092.6,311 1092.6,329.6"/>
<polyline points="925,370 1000,352.8 1009.3,371.3 1027.8,385.2"/>
<polyline points="1000,575 1046.3,612 1092.6,598 1111,607.4 1129.6,616.7 1134.3,644.4 1152.8,663 1157.4,681.5 1140,690"/>
<polyline points="1111,607.4 1138.9,616.7 1162,626 1176,653.7 1171.3,681.5"/>
<polyline points="1208.3,454.6 1231.5,459.3 1250,454.6"/>
<polyline points="820,395 822.5,440 825,465 822.5,490 827.5,507.5 835,505 847.5,515 860,522.5 872.5,527.5 885,535 897.5,540 915,550 935,560 960,565 985,560 1005,565 1010,565 1022.5,540 1015,502.5 1020,480"/>
<polyline points="827.5,507.5 810,510 792.5,515 772.5,525 767.5,535 777.5,557.5 792.5,575 805,590 785,602.5 780,620 760,625 735,625 710,630 700,620 670,625 642.5,637.5 635,652.5 627.5,665 645,675 670,670 695,672.5 722.5,665 735,652.5 725,640 760,647.5 785,655 810,657.5 835,660 860,652.5 865,665 910,680 935,690 950,700"/>
<polyline points="805,590 830,580 847.5,580 867.5,587.5 880,565 905,555 915,550"/>
<polyline points="867.5,587.5 875,615 865,630 860,652.5"/>
<polyline points="875,615 910,610 935,600 972.5,590 1005,580 1010,595 985,665 960,710 950,700"/>
<polyline points="1005,565 1005,580"/>
<polyline points="630,565 665,575 665,595 660,620 670,625"/>
<polyline points="622.5,440 635,465 617.5,490 630,510 625,540 635,562.5 630,565"/>
<polyline points="560,477.5 585,480 617.5,490"/>
<polyline points="525,505 560,520 590,535 617.5,550 635,562.5"/>
<polyline points="627.5,665 635,690 645,710 660,720 655,745"/>
<polyline points="835,675 860,660"/>
<polyline points="460,760 505,780 560,790"/>
<polyline points="290,805 340,810 335,870 320,920 320,940"/>
<polyline points="441,1001 451,1030"/>
<polyline points="683,953 678.5,992 676,1030"/>
<polyline points="390,364 420,370 445,355"/>
<polyline points="300,362 320,385 340,390 352,378"/>
<polyline points="400,425 405,450 398,490"/>
</g>
<circle cx="630" cy="24" r="3" fill="#fff" opacity="0.8"/><circle cx="630" cy="24" r="1.9" fill="#56627f"/>
<circle cx="611" cy="122" r="3" fill="#fff" opacity="0.8"/><circle cx="611" cy="122" r="1.9" fill="#56627f"/>
<circle cx="442" cy="265" r="3" fill="#fff" opacity="0.8"/><circle cx="442" cy="265" r="1.9" fill="#56627f"/>
<circle cx="463.5" cy="432.5" r="3" fill="#fff" opacity="0.8"/><circle cx="463.5" cy="432.5" r="1.9" fill="#56627f"/>
<circle cx="639.5" cy="422" r="3" fill="#fff" opacity="0.8"/><circle cx="639.5" cy="422" r="1.9" fill="#56627f"/>
<circle cx="883" cy="28" r="3" fill="#fff" opacity="0.8"/><circle cx="883" cy="28" r="1.9" fill="#56627f"/>
<circle cx="880" cy="109" r="3" fill="#fff" opacity="0.8"/><circle cx="880" cy="109" r="1.9" fill="#56627f"/>
<circle cx="715.5" cy="269.5" r="3" fill="#fff" opacity="0.8"/><circle cx="715.5" cy="269.5" r="1.9" fill="#56627f"/>
<circle cx="782" cy="285.5" r="3" fill="#fff" opacity="0.8"/><circle cx="782" cy="285.5" r="1.9" fill="#56627f"/>
<circle cx="720.5" cy="379.5" r="3" fill="#fff" opacity="0.8"/><circle cx="720.5" cy="379.5" r="1.9" fill="#56627f"/>
<circle cx="899" cy="426.5" r="3" fill="#fff" opacity="0.8"/><circle cx="899" cy="426.5" r="1.9" fill="#56627f"/>
<circle cx="1017" cy="425.5" r="3" fill="#fff" opacity="0.8"/><circle cx="1017" cy="425.5" r="1.9" fill="#56627f"/>
<circle cx="1010" cy="8" r="3" fill="#fff" opacity="0.8"/><circle cx="1010" cy="8" r="1.9" fill="#56627f"/>
<circle cx="1167" cy="17" r="3" fill="#fff" opacity="0.8"/><circle cx="1167" cy="17" r="1.9" fill="#56627f"/>
<circle cx="1046" cy="95" r="3" fill="#fff" opacity="0.8"/><circle cx="1046" cy="95" r="1.9" fill="#56627f"/>
<circle cx="1053" cy="166" r="3.6" fill="#fff"/><circle cx="1053" cy="166" r="2.8" fill="none" stroke="#56627f" stroke-width="1"/><circle cx="1053" cy="166" r="1.3" fill="#56627f"/>
<circle cx="1180" cy="143" r="3" fill="#fff" opacity="0.8"/><circle cx="1180" cy="143" r="1.9" fill="#56627f"/>
<circle cx="1065" cy="365" r="3.6" fill="#fff"/><circle cx="1065" cy="365" r="2.8" fill="none" stroke="#56627f" stroke-width="1"/><circle cx="1065" cy="365" r="1.3" fill="#56627f"/>
<circle cx="1177.5" cy="345" r="3" fill="#fff" opacity="0.8"/><circle cx="1177.5" cy="345" r="1.9" fill="#56627f"/>
<circle cx="1180" cy="395" r="3" fill="#fff" opacity="0.8"/><circle cx="1180" cy="395" r="1.9" fill="#56627f"/>
<circle cx="1202.5" cy="486" r="3" fill="#fff" opacity="0.8"/><circle cx="1202.5" cy="486" r="1.9" fill="#56627f"/>
<circle cx="1087.5" cy="518" r="3" fill="#fff" opacity="0.8"/><circle cx="1087.5" cy="518" r="1.9" fill="#56627f"/>
<circle cx="1184" cy="524" r="3.6" fill="#fff"/><circle cx="1184" cy="524" r="2.8" fill="none" stroke="#56627f" stroke-width="1"/><circle cx="1184" cy="524" r="1.3" fill="#56627f"/>
<circle cx="1036" cy="545" r="3" fill="#fff" opacity="0.8"/><circle cx="1036" cy="545" r="1.9" fill="#56627f"/>
<circle cx="1137.5" cy="567.5" r="3" fill="#fff" opacity="0.8"/><circle cx="1137.5" cy="567.5" r="1.9" fill="#56627f"/>
<circle cx="1080" cy="599" r="3" fill="#fff" opacity="0.8"/><circle cx="1080" cy="599" r="1.9" fill="#56627f"/>
<circle cx="1218.5" cy="644" r="3" fill="#fff" opacity="0.8"/><circle cx="1218.5" cy="644" r="1.9" fill="#56627f"/>
<circle cx="1026" cy="651" r="3" fill="#fff" opacity="0.8"/><circle cx="1026" cy="651" r="1.9" fill="#56627f"/>
<circle cx="743.5" cy="674" r="3" fill="#fff" opacity="0.8"/><circle cx="743.5" cy="674" r="1.9" fill="#56627f"/>
<circle cx="820" cy="674" r="3.6" fill="#fff"/><circle cx="820" cy="674" r="2.8" fill="none" stroke="#56627f" stroke-width="1"/><circle cx="820" cy="674" r="1.3" fill="#56627f"/>
<circle cx="1127.5" cy="694" r="3" fill="#fff" opacity="0.8"/><circle cx="1127.5" cy="694" r="1.9" fill="#56627f"/>
<circle cx="688" cy="805" r="3" fill="#fff" opacity="0.8"/><circle cx="688" cy="805" r="1.9" fill="#56627f"/>
<circle cx="873.5" cy="829" r="3" fill="#fff" opacity="0.8"/><circle cx="873.5" cy="829" r="1.9" fill="#56627f"/>
<circle cx="1149" cy="833" r="3" fill="#fff" opacity="0.8"/><circle cx="1149" cy="833" r="1.9" fill="#56627f"/>
<circle cx="814.5" cy="837.5" r="3" fill="#fff" opacity="0.8"/><circle cx="814.5" cy="837.5" r="1.9" fill="#56627f"/>
<circle cx="960" cy="853.5" r="3" fill="#fff" opacity="0.8"/><circle cx="960" cy="853.5" r="1.9" fill="#56627f"/>
<circle cx="1124" cy="873" r="3" fill="#fff" opacity="0.8"/><circle cx="1124" cy="873" r="1.9" fill="#56627f"/>
<circle cx="1184" cy="870" r="3" fill="#fff" opacity="0.8"/><circle cx="1184" cy="870" r="1.9" fill="#56627f"/>
<circle cx="1237.5" cy="865" r="3.6" fill="#fff"/><circle cx="1237.5" cy="865" r="2.8" fill="none" stroke="#56627f" stroke-width="1"/><circle cx="1237.5" cy="865" r="1.3" fill="#56627f"/>
<circle cx="867.5" cy="896" r="3" fill="#fff" opacity="0.8"/><circle cx="867.5" cy="896" r="1.9" fill="#56627f"/>
<circle cx="1107.5" cy="909" r="3" fill="#fff" opacity="0.8"/><circle cx="1107.5" cy="909" r="1.9" fill="#56627f"/>
<circle cx="793.5" cy="918.5" r="3" fill="#fff" opacity="0.8"/><circle cx="793.5" cy="918.5" r="1.9" fill="#56627f"/>
<circle cx="1151.5" cy="928.5" r="3" fill="#fff" opacity="0.8"/><circle cx="1151.5" cy="928.5" r="1.9" fill="#56627f"/>
<circle cx="721.5" cy="956" r="3.6" fill="#fff"/><circle cx="721.5" cy="956" r="2.8" fill="none" stroke="#56627f" stroke-width="1"/><circle cx="721.5" cy="956" r="1.3" fill="#56627f"/>
<circle cx="732.5" cy="982.5" r="3" fill="#fff" opacity="0.8"/><circle cx="732.5" cy="982.5" r="1.9" fill="#56627f"/>
<circle cx="674.5" cy="995" r="3" fill="#fff" opacity="0.8"/><circle cx="674.5" cy="995" r="1.9" fill="#56627f"/>
<circle cx="1061" cy="997.5" r="3" fill="#fff" opacity="0.8"/><circle cx="1061" cy="997.5" r="1.9" fill="#56627f"/>
<circle cx="481.5" cy="568.5" r="3" fill="#fff" opacity="0.8"/><circle cx="481.5" cy="568.5" r="1.9" fill="#56627f"/>
<circle cx="604" cy="632" r="3" fill="#fff" opacity="0.8"/><circle cx="604" cy="632" r="1.9" fill="#56627f"/>
<circle cx="295" cy="775" r="3" fill="#fff" opacity="0.8"/><circle cx="295" cy="775" r="1.9" fill="#56627f"/>
<circle cx="357.5" cy="760" r="3" fill="#fff" opacity="0.8"/><circle cx="357.5" cy="760" r="1.9" fill="#56627f"/>
<circle cx="429" cy="776" r="3" fill="#fff" opacity="0.8"/><circle cx="429" cy="776" r="1.9" fill="#56627f"/>
<circle cx="550" cy="876" r="3" fill="#fff" opacity="0.8"/><circle cx="550" cy="876" r="1.9" fill="#56627f"/>
<circle cx="464" cy="922" r="3" fill="#fff" opacity="0.8"/><circle cx="464" cy="922" r="1.9" fill="#56627f"/>
<circle cx="559" cy="957" r="3.6" fill="#fff"/><circle cx="559" cy="957" r="2.8" fill="none" stroke="#56627f" stroke-width="1"/><circle cx="559" cy="957" r="1.3" fill="#56627f"/>
<circle cx="640" cy="968.5" r="3" fill="#fff" opacity="0.8"/><circle cx="640" cy="968.5" r="1.9" fill="#56627f"/>
<circle cx="520" cy="974" r="3" fill="#fff" opacity="0.8"/><circle cx="520" cy="974" r="1.9" fill="#56627f"/>
<circle cx="357.5" cy="985" r="3" fill="#fff" opacity="0.8"/><circle cx="357.5" cy="985" r="1.9" fill="#56627f"/>
<circle cx="475" cy="1001" r="3" fill="#fff" opacity="0.8"/><circle cx="475" cy="1001" r="1.9" fill="#56627f"/>
<circle cx="564" cy="1016" r="3" fill="#fff" opacity="0.8"/><circle cx="564" cy="1016" r="1.9" fill="#56627f"/>
<circle cx="620" cy="1011.5" r="3" fill="#fff" opacity="0.8"/><circle cx="620" cy="1011.5" r="1.9" fill="#56627f"/>
<circle cx="1229.5" cy="925" r="3" fill="#fff" opacity="0.8"/><circle cx="1229.5" cy="925" r="1.9" fill="#56627f"/>
</svg>
<div class="abs" style="left:929px;top:0;width:60px;height:1.5px;background:#2f6fe0"></div>
<div class="tx lb c" id="L0" style="left:611px;top:12.01px;font-size:10.97px;transform:scaleX(0.933);">Ålesund</div>
<div class="tx lb c" id="L1" style="left:574px;top:111.01px;font-size:10.97px;transform:scaleX(0.989);">Bergen</div>
<div class="tx lb c" id="L2" style="left:597px;top:173.01px;font-size:10.97px;transform:scaleX(0.940);">Stavanger</div>
<div class="tx lb c" id="L3" style="left:420px;top:251.01px;font-size:10.97px;transform:scaleX(0.946);">Aberdeen</div>
<div class="tx lb c" id="L4" style="left:372px;top:305.01px;font-size:10.97px;transform:scaleX(0.984);">Glasgow</div>
<div class="tx lb c" id="L5" style="left:436px;top:418.01px;font-size:10.97px;transform:scaleX(0.998);">Nottingham</div>
<div class="tx lb c" id="L6" style="left:444px;top:488.93px;font-size:11.66px;transform:scaleX(1.002);">London</div>
<div class="tx lb c" id="L7" style="left:614px;top:408.01px;font-size:10.97px;transform:scaleX(0.995);">Groningen</div>
<div class="tx lb c" id="L8" style="left:861px;top:14.01px;font-size:10.97px;transform:scaleX(0.967);">Sundsvall</div>
<div class="tx lb c" id="L9" style="left:867px;top:96.51px;font-size:10.97px;transform:scaleX(0.907);">Gävle</div>
<div class="tx lb c" id="L10" style="left:723px;top:128.93px;font-size:11.66px;transform:scaleX(0.960);">Oslo</div>
<div class="tx lb c" id="L11" style="left:820px;top:161.01px;font-size:10.97px;transform:scaleX(0.937);">Örebro</div>
<div class="tx lb c" id="L12" style="left:905px;top:157.85px;font-size:12.35px;transform:scaleX(0.989);">Stockholm</div>
<div class="tx lb c" id="L13" style="left:734px;top:226.93px;font-size:11.66px;transform:scaleX(0.926);">Gothenburg</div>
<div class="tx lb c" id="L14" style="left:696px;top:255.01px;font-size:10.97px;transform:scaleX(1.031);">Aalborg</div>
<div class="tx lb c" id="L15" style="left:760px;top:271.01px;font-size:10.97px;transform:scaleX(0.971);">Halmstad</div>
<div class="tx lb c" id="L16" style="left:770px;top:315.51px;font-size:10.97px;transform:scaleX(1.033);">Malmö</div>
<div class="tx lb c" id="L17" style="left:711px;top:365.01px;font-size:10.97px;transform:scaleX(1.038);">Kiel</div>
<div class="tx lb c" id="L18" style="left:692px;top:393.93px;font-size:11.66px;transform:scaleX(1.043);">Hamburg</div>
<div class="tx lb c" id="L19" style="left:800px;top:400.01px;font-size:10.97px;transform:scaleX(0.957);">Szczecin</div>
<div class="tx lb c" id="L20" style="left:896px;top:364.01px;font-size:10.97px;transform:scaleX(0.952);">Gdansk</div>
<div class="tx lb c" id="L21" style="left:874px;top:412.01px;font-size:10.97px;transform:scaleX(0.961);">Bydgoszcz</div>
<div class="tx lb c" id="L22" style="left:995px;top:411.01px;font-size:10.97px;transform:scaleX(1.002);">Białystok</div>
<div class="tx lb c" id="L23" style="left:692px;top:439.01px;font-size:10.97px;transform:scaleX(0.965);">Hanover</div>
<div class="tx lb c" id="L24" style="left:758px;top:434.93px;font-size:11.66px;transform:scaleX(1.073);">Berlin</div>
<div class="tx lb c" id="L25" style="left:988px;top:-1.99px;font-size:10.97px;transform:scaleX(0.988);">Seinäjoki</div>
<div class="tx lb c" id="L26" style="left:1148px;top:5.01px;font-size:10.97px;transform:scaleX(0.940);">Joensuu</div>
<div class="tx lb c" id="L27" style="left:1016px;top:82.01px;font-size:10.97px;transform:scaleX(0.959);">Hämeenlinna</div>
<div class="tx lb c" id="L28" style="left:1062px;top:135.85px;font-size:12.35px;transform:scaleX(0.995);">Helsinki</div>
<div class="tx lb c" id="L29" style="left:1012px;top:151.85px;font-size:12.35px;transform:scaleX(1.057);">Tallinn</div>
<div class="tx lb c" id="L30" style="left:1183px;top:145.85px;font-size:12.35px;transform:scaleX(0.959);">Saint</div>
<div class="tx lb c" id="L31" style="left:1183px;top:159.85px;font-size:12.35px;transform:scaleX(0.977);">Petersburg</div>
<div class="tx lb c" id="L32" style="left:1164px;top:194.01px;font-size:10.97px;transform:scaleX(0.934);">Veliky Novgorod</div>
<div class="tx lb c" id="L33" style="left:1025px;top:352.01px;font-size:10.97px;transform:scaleX(1.152);">Vilnius</div>
<div class="tx lb c" id="L34" style="left:1159px;top:331.01px;font-size:10.97px;transform:scaleX(1.034);">Vitebsk</div>
<div class="tx lb c" id="L35" style="left:1157px;top:381.01px;font-size:10.97px;transform:scaleX(1.028);">Mahilyow</div>
<div class="tx lb c" id="L36" style="left:1179px;top:471.01px;font-size:10.97px;transform:scaleX(1.014);">Chernihiv</div>
<div class="tx lb c" id="L37" style="left:1074px;top:504.01px;font-size:10.97px;transform:scaleX(0.963);">Rivne</div>
<div class="tx lb c" id="L38" style="left:1160px;top:510.01px;font-size:10.97px;transform:scaleX(1.013);">Kyiv</div>
<div class="tx lb c" id="L39" style="left:856px;top:486.01px;font-size:10.97px;transform:scaleX(1.027);">Wrocław</div>
<div class="tx lb c" id="L40" style="left:781px;top:487.01px;font-size:10.97px;transform:scaleX(1.037);">Dresden</div>
<div class="tx lb c" id="L41" style="left:923px;top:522.01px;font-size:10.97px;transform:scaleX(1.121);">Krakow</div>
<div class="tx lb c" id="L42" style="left:1026px;top:530.01px;font-size:10.97px;transform:scaleX(1.076);">Lviv</div>
<div class="tx lb c" id="L43" style="left:690px;top:537.93px;font-size:11.66px;transform:scaleX(1.093);">Frankfurt</div>
<div class="tx lb c" id="L44" style="left:676px;top:567.93px;font-size:11.66px;transform:scaleX(1.021);">Stuttgart</div>
<div class="tx lb c" id="L45" style="left:740px;top:588.93px;font-size:11.66px;transform:scaleX(0.878);">Munich</div>
<div class="tx lb c" id="L46" style="left:822px;top:588.93px;font-size:11.66px;transform:scaleX(1.025);">Vienna</div>
<div class="tx lb c" id="L47" style="left:688px;top:617.93px;font-size:11.66px;transform:scaleX(1.019);">Zurich</div>
<div class="tx lb c" id="L48" style="left:1115px;top:552.01px;font-size:10.97px;transform:scaleX(1.016);">Vinnytsia</div>
<div class="tx lb c" id="L49" style="left:1055px;top:585.01px;font-size:10.97px;transform:scaleX(1.005);">Chernivtsi</div>
<div class="tx lb c" id="L50" style="left:1197px;top:630.01px;font-size:10.97px;transform:scaleX(1.008);">Mykolaiv</div>
<div class="tx lb c" id="L51" style="left:996px;top:636.01px;font-size:10.97px;transform:scaleX(1.011);">Cluj-Napoca</div>
<div class="tx lb c" id="L52" style="left:727px;top:660.01px;font-size:10.97px;transform:scaleX(1.022);">Trento</div>
<div class="tx lb c" id="L53" style="left:796px;top:658.01px;font-size:10.97px;transform:scaleX(1.116);">Ljubljana</div>
<div class="tx lb c" id="L54" style="left:685px;top:677.93px;font-size:11.66px;transform:scaleX(1.005);">Milan</div>
<div class="tx lb c" id="L55" style="left:1114px;top:680.01px;font-size:10.97px;transform:scaleX(0.977);">Galati</div>
<div class="tx lb c" id="L56" style="left:1197px;top:709.01px;font-size:10.97px;transform:scaleX(0.976);">Sevastopol</div>
<div class="tx lb c" id="L57" style="left:677px;top:713.01px;font-size:10.97px;transform:scaleX(0.941);">Genoa</div>
<div class="tx lb c" id="L58" style="left:727px;top:711.01px;font-size:10.97px;transform:scaleX(1.018);">Bologna</div>
<div class="tx lb c" id="L59" style="left:1057px;top:709.93px;font-size:11.66px;transform:scaleX(1.029);">Bucharest</div>
<div class="tx lb c" id="L60" style="left:671px;top:790.01px;font-size:10.97px;transform:scaleX(0.990);">Ajaccio</div>
<div class="tx lb c" id="L61" style="left:863px;top:815.01px;font-size:10.97px;transform:scaleX(1.076);">Bari</div>
<div class="tx lb c" id="L62" style="left:1127px;top:816.93px;font-size:11.66px;transform:scaleX(1.078);">Istanbul</div>
<div class="tx lb c" id="L63" style="left:774px;top:840.93px;font-size:11.66px;transform:scaleX(1.047);">Naples</div>
<div class="tx lb c" id="L64" style="left:944px;top:839.01px;font-size:10.97px;transform:scaleX(0.967);">Ersekë</div>
<div class="tx lb c" id="L65" style="left:1101px;top:859.01px;font-size:10.97px;transform:scaleX(1.117);">Balıkesir</div>
<div class="tx lb c" id="L66" style="left:1160px;top:855.01px;font-size:10.97px;transform:scaleX(1.079);">Eskisehir</div>
<div class="tx lb c" id="L67" style="left:1219px;top:850.01px;font-size:10.97px;transform:scaleX(1.323);">Ankara</div>
<div class="tx lb c" id="L68" style="left:842px;top:881.01px;font-size:10.97px;transform:scaleX(1.008);">Catanzaro</div>
<div class="tx lb c" id="L69" style="left:1094px;top:895.01px;font-size:10.97px;transform:scaleX(1.178);">Izmir</div>
<div class="tx lb c" id="L70" style="left:772px;top:904.01px;font-size:10.97px;transform:scaleX(1.077);">Palermo</div>
<div class="tx lb c" id="L71" style="left:1134px;top:912.01px;font-size:10.97px;transform:scaleX(1.093);">Denizli</div>
<div class="tx lb c" id="L72" style="left:1213px;top:911.01px;font-size:10.97px;transform:scaleX(1.029);">Konya</div>
<div class="tx lb c" id="L73" style="left:726px;top:941.93px;font-size:11.66px;transform:scaleX(1.033);">Tunis</div>
<div class="tx lb c" id="L74" style="left:714px;top:969.01px;font-size:10.97px;transform:scaleX(0.984);">Sousse</div>
<div class="tx lb c" id="L75" style="left:655px;top:981.01px;font-size:10.97px;transform:scaleX(0.979);">Tebessa</div>
<div class="tx lb c" id="L76" style="left:1038px;top:982.01px;font-size:10.97px;transform:scaleX(1.014);">Heraklion</div>
<div class="tx lb c" id="L77" style="left:469px;top:555.01px;font-size:10.97px;transform:scaleX(0.953);">Caen</div>
<div class="tx lb c" id="L78" style="left:548px;top:565.93px;font-size:11.66px;transform:scaleX(1.054);">Paris</div>
<div class="tx lb c" id="L79" style="left:461px;top:614.01px;font-size:10.97px;transform:scaleX(0.949);">Angers</div>
<div class="tx lb c" id="L80" style="left:592px;top:618.01px;font-size:10.97px;transform:scaleX(1.000);">Dijon</div>
<div class="tx lb c" id="L81" style="left:589px;top:669.93px;font-size:11.66px;transform:scaleX(0.886);">Lyon</div>
<div class="tx lb c" id="L82" style="left:453px;top:699.93px;font-size:11.66px;transform:scaleX(0.962);">Bordeaux</div>
<div class="tx lb c" id="L83" style="left:501px;top:738.93px;font-size:11.66px;transform:scaleX(0.943);">Toulouse</div>
<div class="tx lb c" id="L84" style="left:266px;top:748.01px;font-size:10.97px;transform:scaleX(1.007);">Santiago de</div>
<div class="tx lb c" id="L85" style="left:266px;top:761.01px;font-size:10.97px;transform:scaleX(1.008);">Compostela</div>
<div class="tx lb c" id="L86" style="left:341px;top:746.01px;font-size:10.97px;transform:scaleX(0.949);">Oviedo</div>
<div class="tx lb c" id="L87" style="left:393px;top:762.01px;font-size:10.97px;transform:scaleX(1.004);">Vitoria-Gasteiz</div>
<div class="tx lb c" id="L88" style="left:560px;top:764.93px;font-size:11.66px;transform:scaleX(1.072);">Marseille</div>
<div class="tx lb c" id="L89" style="left:447px;top:800.01px;font-size:10.97px;transform:scaleX(0.971);">Zaragoza</div>
<div class="tx lb c" id="L90" style="left:542px;top:808.93px;font-size:11.66px;transform:scaleX(1.048);">Barcelona</div>
<div class="tx lb c" id="L91" style="left:410px;top:852.93px;font-size:11.66px;transform:scaleX(1.038);">Madrid</div>
<div class="tx lb c" id="L92" style="left:535px;top:861.01px;font-size:10.97px;transform:scaleX(0.997);">Palma</div>
<div class="tx lb c" id="L93" style="left:458px;top:863.93px;font-size:11.66px;transform:scaleX(1.049);">Valencia</div>
<div class="tx lb c" id="L94" style="left:243px;top:903.93px;font-size:11.66px;transform:scaleX(1.019);">Lisbon</div>
<div class="tx lb c" id="L95" style="left:447px;top:907.01px;font-size:10.97px;transform:scaleX(1.033);">Murcia</div>
<div class="tx lb c" id="L96" style="left:336px;top:923.93px;font-size:11.66px;transform:scaleX(1.019);">Seville</div>
<div class="tx lb c" id="L97" style="left:541px;top:940.93px;font-size:11.66px;transform:scaleX(1.066);">Algiers</div>
<div class="tx lb c" id="L98" style="left:611px;top:954.01px;font-size:10.97px;transform:scaleX(0.991);">Constantine</div>
<div class="tx lb c" id="L99" style="left:507px;top:960.01px;font-size:10.97px;transform:scaleX(1.054);">Chlef</div>
<div class="tx lb c" id="L100" style="left:337px;top:970.01px;font-size:10.97px;transform:scaleX(1.139);">Tangier</div>
<div class="tx lb c" id="L101" style="left:440px;top:987.01px;font-size:10.97px;transform:scaleX(1.004);">Sidi Bel Abbes</div>
<div class="tx lb c" id="L102" style="left:550px;top:1001.01px;font-size:10.97px;transform:scaleX(0.998);">Djelfa</div>
<div class="tx lb c" id="L103" style="left:604px;top:996.01px;font-size:10.97px;transform:scaleX(1.050);">Biskra</div>
<div class="tx lb c" id="L104" style="left:320px;top:1017.01px;font-size:10.97px;transform:scaleX(1.025);">Rabat</div>
<div class="tx lb c" id="L105" style="left:367px;top:1017.01px;font-size:10.97px;transform:scaleX(0.984);">Fez</div>
<div class="tx lb c" id="L106" style="left:1241px;top:48.01px;font-size:10.97px;transform:scaleX(1.565);">Pe</div>
<div class="tx lb r" id="L107" style="left:381px;top:278.25px;font-size:8.92px;transform:scaleX(0.919);">SCOT.</div>
<div class="tx lb r" id="L108" style="left:316px;top:358.25px;font-size:8.92px;transform:scaleX(0.816);">N. IRE.</div>
<div class="tx lb r" id="L109" style="left:390px;top:451.25px;font-size:8.92px;transform:scaleX(0.938);">WALES</div>
<div class="tx lb r" id="L110" style="left:461px;top:449.25px;font-size:8.92px;transform:scaleX(0.972);">ENG.</div>
<div class="tx lb k" id="L111" style="left:662px;top:74.69px;font-size:17.15px;transform:scaleX(0.981);">Norway</div>
<div class="tx lb k" id="L112" style="left:1058px;top:1.60px;font-size:17.83px;transform:scaleX(0.958);">Finland</div>
<div class="tx lb k" id="L113" style="left:1055px;top:189.51px;font-size:14.40px;transform:scaleX(0.896);">Estonia</div>
<div class="tx lb k" id="L114" style="left:1038px;top:267.01px;font-size:14.40px;transform:scaleX(0.937);">Latvia</div>
<div class="tx lb k" id="L115" style="left:1006px;top:327.01px;font-size:14.40px;transform:scaleX(0.976);">Lithuania</div>
<div class="tx lb k" id="L116" style="left:1100px;top:400.69px;font-size:17.15px;transform:scaleX(0.981);">Belarus</div>
<div class="tx lb k" id="L117" style="left:684px;top:305.69px;font-size:17.15px;transform:scaleX(0.992);">Denmark</div>
<div class="tx lb k" id="L118" style="left:412px;top:365.69px;font-size:17.15px;transform:scaleX(0.989);">United</div>
<div class="tx lb k" id="L119" style="left:403px;top:384.69px;font-size:17.15px;transform:scaleX(0.976);">Kingdom</div>
<div class="tx lb k" id="L120" style="left:287px;top:410.69px;font-size:17.15px;transform:scaleX(1.011);">Ireland</div>
<div class="tx lb k" id="L121" style="left:581px;top:461.93px;font-size:15.09px;transform:scaleX(0.910);">Netherlands</div>
<div class="tx lb k" id="L122" style="left:571px;top:516.93px;font-size:15.09px;transform:scaleX(0.899);">Belgium</div>
<div class="tx lb k" id="L123" style="left:593px;top:541.93px;font-size:15.09px;transform:scaleX(0.835);">Luxembourg</div>
<div class="tx lb k" id="L124" style="left:684px;top:490.60px;font-size:17.83px;transform:scaleX(0.927);">Germany</div>
<div class="tx lb k" id="L125" style="left:904.6px;top:456.06px;font-size:15.64px;transform:scaleX(1.015);">Poland</div>
<div class="tx lb k" id="L126" style="left:816px;top:541.93px;font-size:15.09px;transform:scaleX(0.844);">Czechia</div>
<div class="tx lb k" id="L127" style="left:910px;top:579.01px;font-size:14.40px;transform:scaleX(0.864);">Slovakia</div>
<div class="tx lb k" id="L128" style="left:1172px;top:555.60px;font-size:17.83px;transform:scaleX(0.977);">Ukraine</div>
<div class="tx lb k" id="L129" style="left:794px;top:615.93px;font-size:15.09px;transform:scaleX(0.937);">Austria</div>
<div class="tx lb k" id="L130" style="left:902px;top:631.60px;font-size:17.83px;transform:scaleX(0.950);">Hungary</div>
<div class="tx lb k" id="L131" style="left:641px;top:642.93px;font-size:15.09px;transform:scaleX(0.917);">Switzerland</div>
<div class="tx lb k" id="L132" style="left:1116px;top:629.93px;font-size:15.09px;transform:scaleX(0.860);">Moldova</div>
<div class="tx lb k" id="L133" style="left:1026px;top:673.60px;font-size:17.83px;transform:scaleX(0.911);">Romania</div>
<div class="tx lb k" id="L134" style="left:848px;top:680.93px;font-size:15.09px;transform:scaleX(0.885);">Croatia</div>
<div class="tx lb k" id="L135" style="left:524px;top:606.60px;font-size:17.83px;transform:scaleX(0.937);">France</div>
<div class="tx lb k" id="L136" style="left:377px;top:815.60px;font-size:17.83px;transform:scaleX(0.899);">Spain</div>
<div class="tx lb k" id="L137" style="left:269px;top:868.93px;font-size:15.09px;transform:scaleX(0.926);">Portugal</div>
<div class="tx lb k" id="L138" style="left:761px;top:779.60px;font-size:17.83px;transform:scaleX(1.040);">Italy</div>
<div class="tx lb k" id="L139" style="left:865px;top:722.01px;font-size:14.40px;transform:scaleX(0.833);">Bosnia and</div>
<div class="tx lb k" id="L140" style="left:860px;top:736.01px;font-size:14.40px;transform:scaleX(0.854);">Herzegovina</div>
<div class="tx lb k" id="L141" style="left:944px;top:727.01px;font-size:14.40px;transform:scaleX(0.937);">Serbia</div>
<div class="tx lb k" id="L142" style="left:895px;top:772.01px;font-size:14.40px;transform:scaleX(0.872);">Montenegro</div>
<div class="tx lb k" id="L143" style="left:1038px;top:771.93px;font-size:15.09px;transform:scaleX(0.940);">Bulgaria</div>
<div class="tx lb k" id="L144" style="left:968px;top:801.01px;font-size:14.40px;transform:scaleX(0.909);">North</div>
<div class="tx lb k" id="L145" style="left:954px;top:816.01px;font-size:14.40px;transform:scaleX(0.838);">Macedonia</div>
<div class="tx lb k" id="L146" style="left:1006px;top:896.60px;font-size:17.83px;transform:scaleX(0.906);">Greece</div>
<div class="tx lb k" id="L147" style="left:802px;top:976.01px;font-size:14.40px;transform:scaleX(0.937);">Malta</div>
<div class="tx lb k" id="L148" style="left:680px;top:1023.60px;font-size:17.83px;transform:scaleX(0.968);">Tunisia</div>
<div class="tx lb s" id="L149" style="left:535px;top:277.53px;font-size:15.09px;transform:scaleX(1.131);">North</div>
<div class="tx lb s" id="L150" style="left:545px;top:301.53px;font-size:15.09px;transform:scaleX(0.974);">Sea</div>
<div class="tx lb s" id="L151" style="left:371px;top:675.93px;font-size:11.66px;transform:scaleX(0.888);">Bay of</div>
<div class="tx lb s" id="L152" style="left:370px;top:690.93px;font-size:11.66px;transform:scaleX(0.906);">Biscay</div>
<div class="tx lb s" id="L153" style="left:1225px;top:754.53px;font-size:15.09px;transform:scaleX(1.331);">Bla</div>
<div class="tx lb s" style="left:915.5px;top:301.33px;font-size:16.5px;transform-origin:0 13.97px;transform:rotate(-59.5deg);letter-spacing:2.3px;-webkit-text-stroke:0.2px #7d879f">Baltic Sea</div>
<div class="bd" style="left:613.2px;top:178.2px"></div>
<div class="bd" style="left:728.2px;top:136.2px"></div>
<div class="bd" style="left:756.2px;top:233.2px"></div>
<div class="bd" style="left:829.2px;top:164.7px"></div>
<div class="bd" style="left:859.7px;top:149.2px"></div>
<div class="bd" style="left:883.7px;top:138.2px"></div>
<div class="bd" style="left:893.7px;top:162.2px"></div>
<div class="bd" style="left:1024.2px;top:63.2px"></div>
<div class="bd" style="left:989.7px;top:112.2px"></div>
<div class="bd" style="left:1050.7px;top:123.2px"></div>
<div class="bd" style="left:718.7px;top:328.2px"></div>
<div class="bd" style="left:771.7px;top:302.2px"></div>
<div class="bd" style="left:768.2px;top:317.2px"></div>
<div class="bd" style="left:783.2px;top:315.7px"></div>
<div class="bd" style="left:778.7px;top:320.7px"></div>
<div class="bd" style="left:725.7px;top:388.2px"></div>
<div class="bd" style="left:710.7px;top:399.7px"></div>
<div class="bd" style="left:682.2px;top:418.7px"></div>
<div class="bd" style="left:788.2px;top:438.7px"></div>
<div class="bd" style="left:960.7px;top:449.7px"></div>
<div class="bd" style="left:341.2px;top:409.2px"></div>
<div class="bd" style="left:480.2px;top:477.2px"></div>
<div class="bd" style="left:594.0px;top:444.9px"></div>
<div class="bd" style="left:584.7px;top:462.2px"></div>
<div class="bd" style="left:643.2px;top:478.2px"></div>
<div class="bd" style="left:653.2px;top:477.2px"></div>
<div class="bd" style="left:637.2px;top:488.2px"></div>
<div class="bd" style="left:641.2px;top:498.2px"></div>
<div class="bd" style="left:583.2px;top:488.2px"></div>
<div class="bd" style="left:582.2px;top:501.2px"></div>
<div class="bd" style="left:621.0px;top:503.7px"></div>
<div class="bd" style="left:680.7px;top:527.2px"></div>
<div class="bd" style="left:734.7px;top:549.7px"></div>
<div class="bd" style="left:810.7px;top:529.2px"></div>
<div class="bd" style="left:937.2px;top:529.2px"></div>
<div class="bd" style="left:673.7px;top:565.7px"></div>
<div class="bd" style="left:691.7px;top:573.7px"></div>
<div class="bd" style="left:730.7px;top:587.7px"></div>
<div class="bd" style="left:745.7px;top:596.2px"></div>
<div class="bd" style="left:854.7px;top:593.2px"></div>
<div class="bd" style="left:682.2px;top:617.2px"></div>
<div class="bd" style="left:677.7px;top:622.2px"></div>
<div class="bd" style="left:691.7px;top:684.7px"></div>
<div class="bd" style="left:659.2px;top:695.7px"></div>
<div class="bd" style="left:777.2px;top:734.7px"></div>
<div class="bd" style="left:767.7px;top:797.2px"></div>
<div class="bd" style="left:536.2px;top:571.2px"></div>
<div class="bd" style="left:469.7px;top:619.2px"></div>
<div class="bd" style="left:593.2px;top:675.2px"></div>
<div class="bd" style="left:612.7px;top:694.2px"></div>
<div class="bd" style="left:658.7px;top:696.2px"></div>
<div class="bd" style="left:469.7px;top:705.2px"></div>
<div class="bd" style="left:515.7px;top:744.2px"></div>
<div class="bd" style="left:604.7px;top:754.2px"></div>
<div class="bd" style="left:463.2px;top:804.7px"></div>
<div class="bd" style="left:531.7px;top:813.2px"></div>
<div class="bd" style="left:398.7px;top:842.2px"></div>
<div class="bd" style="left:473.7px;top:870.2px"></div>
<div class="bd" style="left:274.7px;top:892.2px"></div>
<div class="bd" style="left:346.7px;top:929.7px"></div>
<div class="bd" style="left:381.7px;top:949.7px"></div>
<div class="pd" style="left:387.8px;top:311.8px"></div>
<div class="pd" style="left:349.8px;top:361.8px"></div>
<div class="pd" style="left:412.8px;top:479.8px"></div>
<div class="pd" style="left:425.8px;top:480.8px"></div>
<div class="pd" style="left:582.8px;top:457.8px"></div>
<div class="pd" style="left:600.8px;top:457.8px"></div>
<div class="pd" style="left:638.8px;top:482.3px"></div>
<div class="pd" style="left:658.8px;top:462.3px"></div>
<div class="pd" style="left:678.8px;top:460.3px"></div>
<div class="pd" style="left:705.8px;top:447.3px"></div>
<div class="pd" style="left:816.3px;top:407.3px"></div>
<div class="pd" style="left:908.8px;top:371.8px"></div>
<div class="pd" style="left:870.3px;top:446.3px"></div>
<div class="pd" style="left:928.3px;top:469.2px"></div>
<div class="pd" style="left:999.3px;top:489.8px"></div>
<div class="pd" style="left:767.3px;top:484.8px"></div>
<div class="pd" style="left:798.3px;top:496.3px"></div>
<div class="pd" style="left:873.3px;top:493.8px"></div>
<div class="pd" style="left:678.3px;top:550.8px"></div>
<div class="pd" style="left:862.8px;top:560.8px"></div>
<div class="pd" style="left:918.8px;top:619.8px"></div>
<div class="pd" style="left:848.8px;top:674.8px"></div>
<div class="pd" style="left:688.3px;top:720.8px"></div>
<div class="pd" style="left:743.3px;top:717.8px"></div>
<div class="pd" style="left:649.8px;top:743.3px"></div>
<div class="pd" style="left:1078.8px;top:719.8px"></div>
<div class="pd" style="left:1015.8px;top:773.8px"></div>
<div class="pd" style="left:1005.8px;top:837.3px"></div>
<div class="pd" style="left:1024.8px;top:914.8px"></div>
<div class="pd" style="left:417.8px;top:756.8px"></div>
<div class="pd" style="left:375.8px;top:918.3px"></div>
<div class="abs" style="left:1172px;top:927px;width:100px;height:110px;background:#fff;box-shadow:0 0 12px rgba(60,70,110,.25)"></div>
<div class="bd" style="left:1194.2px;top:974.2px"></div>
<div class="pd" style="left:1193.8px;top:1011.8px"></div>
<div class="tx " id="L183" style="left:1188.5px;top:945.08px;font-size:16.32px;transform:scaleX(0.923);color:#1f2233;font-weight:700">Cities</div>
<div class="tx " id="L184" style="left:1218px;top:975.63px;font-size:11.66px;transform:scaleX(0.998);color:#6a7083">Included</div>
<div class="tx " id="L185" style="left:1215px;top:1011.63px;font-size:11.66px;transform:scaleX(1.043);color:#6a7083">Soon to come</div>
<div class="abs" style="left:1225px;top:0;width:25px;height:1030px;background:linear-gradient(90deg,rgba(120,125,150,0),rgba(120,125,150,.45))"></div>
</div>
<div class="abs" style="left:10px;top:10px;width:344px;height:63px;background:#fff;border-radius:3px;box-shadow:0 4px 16px rgba(60,70,110,.28)"></div>
</div>
<div id="cardtexts"><div class="tx " id="L154" style="left:114.25px;top:34.36px;font-size:16.12px;transform:scaleX(0.967);color:#262939;font-weight:700;-webkit-text-stroke:0px">Explore a continent</div>
<div class="tx " id="L155" style="left:326.25px;top:33.22px;font-size:16.87px;transform:scaleX(0.913);color:#475bef;font-weight:700">Europe</div><svg class="abs" style="left:396px;top:37px" width="15" height="12"><path d="M2 3 L7.5 8.5 L13 3" fill="none" stroke="#475bef" stroke-width="1.6"/></svg></div>
<div id="side"><div class="abs" style="left:21px;top:71px;width:39px;height:1px;background:rgba(255,255,255,.35)"></div>
<svg class="abs" style="left:15px;top:95px" width="50" height="45" viewBox="0 0 50 45"><circle cx="25.6" cy="18.75" r="10.5" fill="#b7bff9"/><path d="M20 10 q2 3 -1 5 q-2 1 -2 3 M19 15.5 q3 1 4 3 q2 2 1 4 q-1 3 -1 6 M29 11 q-2 2 0 3 q3 1 2 4 q-1 2 2 3" stroke="#465def" stroke-width="0.9" fill="none"/><path d="M16 9.5 A13.2 13.2 0 0 0 35 28" stroke="#b7bff9" stroke-width="1.5" fill="none"/><path d="M15 7.3 L17 9.8 M34.5 27.2 L37.5 29.6" stroke="#b7bff9" stroke-width="1.4"/><rect x="24.7" y="30.5" width="1.9" height="5.5" fill="#b7bff9"/><rect x="20" y="35.6" width="11.6" height="1.6" fill="#b7bff9"/></svg>
<svg class="abs" style="left:27px;top:174px" width="27" height="24" viewBox="0 0 27 24"><polygon points="2.9,1.6 8.5,1.6 11,4 11,7 2.9,7" fill="#b7bff9"/><polygon points="12.5,5.5 20.5,4.6 20.5,7.5 12.5,9.5" fill="#b7bff9"/><rect x="1.8" y="6.8" width="7.5" height="16" fill="#b7bff9"/><rect x="9.8" y="10.7" width="6.4" height="12.3" fill="#b7bff9"/><polygon points="16.7,8.2 24.2,6.5 24.2,23 16.7,23" fill="#b7bff9"/><rect x="0.2" y="22.2" width="25.6" height="1.1" fill="#b7bff9"/><g fill="#465def"><rect x="4" y="3.3" width="1.2" height="1.2"/><rect x="6" y="3.3" width="2" height="1.2"/><rect x="3.5" y="9.5" width="1.2" height="1.2"/><rect x="6" y="9.5" width="1.2" height="1.2"/><rect x="3.5" y="12.5" width="1.2" height="1.2"/><rect x="6" y="12.5" width="1.2" height="1.2"/><rect x="3.5" y="15.5" width="1.2" height="1.2"/><rect x="6" y="15.5" width="1.2" height="1.2"/><rect x="3.5" y="18.5" width="1.2" height="1.2"/><rect x="11.5" y="13" width="1.2" height="1.2"/><rect x="13.5" y="13" width="1.2" height="1.2"/><rect x="11.5" y="16" width="1.2" height="1.2"/><rect x="13.5" y="16" width="1.2" height="1.2"/><rect x="11.5" y="19" width="1.2" height="1.2"/><rect x="18.5" y="10.5" width="1.2" height="1.2"/><rect x="21" y="10.5" width="1.2" height="1.2"/><rect x="18.5" y="13.5" width="1.2" height="1.2"/><rect x="21" y="13.5" width="1.2" height="1.2"/><rect x="18.5" y="16.5" width="1.2" height="1.2"/><rect x="21" y="16.5" width="1.2" height="1.2"/></g></svg>
<svg class="abs" style="left:28px;top:241px" width="25" height="31" viewBox="0 0 25 31"><path d="M12.5 0.6 A11.3 11.3 0 0 1 23.8 12 C23.8 19 12.5 30.4 12.5 30.4 C12.5 30.4 1.2 19 1.2 12 A11.3 11.3 0 0 1 12.5 0.6Z" fill="#b7bff9"/><circle cx="12.5" cy="12.3" r="7.4" fill="#465def"/><path d="M7.8 15.2 h6.8 l1.6 -6.4 h-1.6 M14.6 15.2 l1.4 0" stroke="#b7bff9" stroke-width="1.3" fill="none"/><rect x="7" y="13" width="2.6" height="1.6" fill="#b7bff9"/><circle cx="8.3" cy="15.6" r="1.3" fill="#b7bff9"/><circle cx="15.8" cy="15.6" r="1.3" fill="#b7bff9"/></svg>
<div class="abs" style="left:30.8px;top:977.4px;width:4.4px;height:4.4px;border-radius:50%;background:#b3bcf8"></div>
<div class="abs" style="left:37.6px;top:977.4px;width:4.4px;height:4.4px;border-radius:50%;background:#b3bcf8"></div>
<div class="abs" style="left:44.1px;top:977.4px;width:4.4px;height:4.4px;border-radius:50%;background:#b3bcf8"></div>
<div class="abs" style="left:23px;top:1022px;width:34px;height:34px;border-radius:50%;border:2px solid #fff"></div>
<div class="abs" style="left:37px;top:1028px;width:6px;height:2px;background:#fff"></div></div>
<div class="tx " id="L156" style="left:33.3px;top:21.32px;font-size:12.62px;transform:scaleX(0.901);color:#c9cffb">CITY</div>
<div class="tx " id="L157" style="left:20.8px;top:33.96px;font-size:18.24px;transform:scaleX(0.997);color:#fff;font-weight:700">Dive</div>
<div id="panel"><div class="abs" style="left:0;top:0;width:670px;height:400px;background:#232c77"></div>
<div class="abs" style="left:583px;top:36px;width:46px;height:46px;border-radius:50%;border:1px solid rgba(255,255,255,.18)"></div>
<svg class="abs" style="left:598px;top:51px" width="16" height="16"><path d="M2.5 3 L13.5 14 M13.5 3 L2.5 14" stroke="#fff" stroke-width="1.6"/></svg>
<svg width="313" height="180" viewBox="0 0 313 180" style="position:absolute;left:35px;top:143px">
<defs><linearGradient id="sky" x1="0" y1="0" x2="0" y2="1"><stop offset="0" stop-color="#e8eff3"/><stop offset="1" stop-color="#e2ecf2"/></linearGradient><linearGradient id="sea" x1="0" y1="0" x2="0" y2="1"><stop offset="0" stop-color="#a2c2da"/><stop offset="0.15" stop-color="#72a4c6"/><stop offset="0.55" stop-color="#5c95ba"/><stop offset="1" stop-color="#4e8bb0"/></linearGradient><filter id="bl" x="-5%" y="-5%" width="110%" height="110%"><feGaussianBlur stdDeviation="0.55"/></filter></defs>
<rect width="313" height="20" fill="url(#sky)"/>
<rect y="19" width="313" height="68" fill="url(#sea)"/>
<g filter="url(#bl)">
<rect y="84" width="313" height="96" fill="#ada091"/>
<rect x="139.4" y="136.9" width="6.6" height="2.7" fill="#6f6158"/>
<rect x="267.0" y="100.6" width="6.0" height="2.7" fill="#b9b0a8"/>
<rect x="247.4" y="91.2" width="3.5" height="1.7" fill="#8a8580"/>
<rect x="197.1" y="140.4" width="4.0" height="2.6" fill="#b9b0a8"/>
<rect x="202.1" y="143.1" width="6.2" height="1.7" fill="#8e7b6c"/>
<rect x="56.3" y="105.7" width="2.2" height="2.7" fill="#bcae9f"/>
<rect x="183.3" y="101.1" width="3.2" height="2.2" fill="#c2b2a0"/>
<rect x="206.0" y="126.8" width="3.4" height="4.0" fill="#d6ccc0"/>
<rect x="220.4" y="112.9" width="3.1" height="2.2" fill="#d6ccc0"/>
<rect x="174.5" y="92.6" width="2.5" height="2.2" fill="#d6ccc0"/>
<rect x="299.7" y="165.0" width="2.0" height="2.0" fill="#8e7b6c"/>
<rect x="145.0" y="178.1" width="4.0" height="1.7" fill="#b27c68"/>
<rect x="58.9" y="148.1" width="3.7" height="2.3" fill="#c2b2a0"/>
<rect x="301.6" y="156.3" width="2.6" height="2.1" fill="#a38a77"/>
<rect x="-0.5" y="127.6" width="4.4" height="3.2" fill="#ddd4ca"/>
<rect x="137.8" y="100.7" width="5.7" height="1.8" fill="#b27c68"/>
<rect x="117.6" y="120.7" width="7.0" height="1.5" fill="#d0cbc4"/>
<rect x="92.4" y="168.7" width="3.1" height="2.5" fill="#b9b0a8"/>
<rect x="199.5" y="91.8" width="6.9" height="2.0" fill="#c4a68e"/>
<rect x="-1.0" y="141.8" width="6.2" height="2.5" fill="#d6ccc0"/>
<rect x="24.6" y="139.1" width="3.2" height="3.0" fill="#cfb49b"/>
<rect x="193.2" y="94.5" width="4.9" height="3.6" fill="#7a685c"/>
<rect x="270.7" y="99.9" width="2.8" height="3.8" fill="#b9b0a8"/>
<rect x="75.1" y="100.6" width="5.7" height="3.9" fill="#ddd4ca"/>
<rect x="213.8" y="120.0" width="4.4" height="1.7" fill="#8e7b6c"/>
<rect x="28.9" y="85.8" width="6.8" height="2.1" fill="#8a8580"/>
<rect x="120.1" y="123.2" width="6.5" height="2.7" fill="#6f6158"/>
<rect x="51.6" y="152.6" width="2.3" height="2.1" fill="#e2ddd6"/>
<rect x="203.2" y="142.4" width="2.4" height="2.0" fill="#ddd4ca"/>
<rect x="233.4" y="88.8" width="4.1" height="2.1" fill="#8e7b6c"/>
<rect x="51.9" y="118.1" width="4.9" height="1.8" fill="#cfb49b"/>
<rect x="39.9" y="126.1" width="3.7" height="3.3" fill="#6f6158"/>
<rect x="181.3" y="95.8" width="2.2" height="1.5" fill="#cfb49b"/>
<rect x="218.2" y="176.4" width="2.1" height="3.1" fill="#c9b8a4"/>
<rect x="17.3" y="112.5" width="2.7" height="1.7" fill="#bcae9f"/>
<rect x="169.1" y="154.2" width="6.5" height="3.3" fill="#8a8580"/>
<rect x="37.1" y="176.4" width="3.7" height="1.7" fill="#c9b8a4"/>
<rect x="281.6" y="167.4" width="4.1" height="3.5" fill="#c9b8a4"/>
<rect x="177.6" y="143.2" width="3.9" height="3.0" fill="#b9b0a8"/>
<rect x="18.9" y="90.9" width="2.6" height="2.1" fill="#9a9490"/>
<rect x="226.8" y="120.1" width="5.7" height="3.0" fill="#bcae9f"/>
<rect x="142.7" y="135.0" width="4.6" height="2.8" fill="#b3a699"/>
<rect x="186.6" y="129.1" width="3.2" height="3.2" fill="#c9b8a4"/>
<rect x="243.2" y="146.7" width="4.4" height="3.7" fill="#cfb49b"/>
<rect x="91.4" y="148.5" width="3.0" height="1.9" fill="#968b80"/>
<rect x="205.2" y="125.3" width="6.5" height="2.3" fill="#efe9e2"/>
<rect x="75.4" y="144.1" width="6.0" height="3.4" fill="#ddd4ca"/>
<rect x="275.0" y="119.7" width="4.9" height="2.3" fill="#7a685c"/>
<rect x="38.7" y="116.4" width="6.5" height="1.6" fill="#d6ccc0"/>
<rect x="297.2" y="109.1" width="2.8" height="2.6" fill="#c4a68e"/>
<rect x="289.5" y="163.4" width="3.9" height="2.8" fill="#efe9e2"/>
<rect x="96.0" y="164.2" width="6.9" height="2.6" fill="#d6ccc0"/>
<rect x="258.7" y="109.3" width="5.0" height="3.2" fill="#c4a68e"/>
<rect x="176.9" y="112.3" width="6.0" height="1.5" fill="#7a685c"/>
<rect x="124.4" y="100.6" width="5.8" height="2.2" fill="#7a685c"/>
<rect x="248.6" y="178.4" width="2.6" height="1.8" fill="#e2ddd6"/>
<rect x="203.6" y="161.1" width="6.8" height="3.2" fill="#ddd4ca"/>
<rect x="257.2" y="107.1" width="5.6" height="3.4" fill="#e2ddd6"/>
<rect x="222.4" y="99.6" width="3.4" height="2.4" fill="#8a8580"/>
<rect x="296.1" y="131.0" width="7.0" height="1.9" fill="#8a8580"/>
<rect x="283.3" y="90.5" width="6.7" height="3.3" fill="#7a685c"/>
<rect x="138.8" y="101.3" width="6.4" height="1.5" fill="#e2ddd6"/>
<rect x="176.3" y="168.2" width="6.0" height="3.9" fill="#bcae9f"/>
<rect x="99.5" y="178.3" width="2.5" height="3.7" fill="#b27c68"/>
<rect x="289.0" y="94.1" width="3.2" height="2.5" fill="#d6ccc0"/>
<rect x="305.8" y="134.6" width="6.0" height="2.3" fill="#8a8580"/>
<rect x="267.3" y="116.2" width="2.4" height="2.6" fill="#e2ddd6"/>
<rect x="129.6" y="109.0" width="6.6" height="2.0" fill="#d6ccc0"/>
<rect x="132.0" y="85.4" width="4.7" height="3.2" fill="#7a685c"/>
<rect x="145.2" y="180.0" width="6.5" height="2.8" fill="#efe9e2"/>
<rect x="214.5" y="174.7" width="4.5" height="3.9" fill="#d6ccc0"/>
<rect x="236.2" y="125.1" width="4.8" height="3.6" fill="#e2ddd6"/>
<rect x="198.5" y="133.2" width="6.2" height="2.9" fill="#b3a699"/>
<rect x="208.8" y="175.6" width="6.4" height="3.0" fill="#b3a699"/>
<rect x="265.7" y="176.9" width="4.6" height="2.9" fill="#ddd4ca"/>
<rect x="126.3" y="93.2" width="2.0" height="2.4" fill="#e2ddd6"/>
<rect x="303.3" y="132.6" width="4.0" height="3.5" fill="#d0cbc4"/>
<rect x="34.7" y="91.1" width="2.8" height="3.8" fill="#bcae9f"/>
<rect x="127.2" y="175.8" width="6.6" height="2.2" fill="#c9b8a4"/>
<rect x="152.3" y="115.3" width="6.5" height="3.8" fill="#c9b8a4"/>
<rect x="162.4" y="92.6" width="4.1" height="1.6" fill="#c4a68e"/>
<rect x="37.0" y="158.4" width="2.1" height="2.0" fill="#857468"/>
<rect x="-0.2" y="109.8" width="5.6" height="2.1" fill="#c9b8a4"/>
<rect x="29.2" y="153.6" width="2.6" height="2.8" fill="#c4a68e"/>
<rect x="223.5" y="150.7" width="6.4" height="1.6" fill="#b27c68"/>
<rect x="127.0" y="133.9" width="2.8" height="2.0" fill="#b27c68"/>
<rect x="165.3" y="103.4" width="3.1" height="2.9" fill="#d0cbc4"/>
<rect x="267.6" y="104.8" width="5.7" height="3.5" fill="#b8a08a"/>
<rect x="96.1" y="112.9" width="6.6" height="2.0" fill="#ddd4ca"/>
<rect x="277.4" y="95.1" width="3.2" height="3.3" fill="#c4a68e"/>
<rect x="119.0" y="124.6" width="6.7" height="2.9" fill="#8a8580"/>
<rect x="35.9" y="121.5" width="5.4" height="1.5" fill="#ddd4ca"/>
<rect x="176.7" y="117.0" width="6.1" height="2.4" fill="#8a8580"/>
<rect x="156.3" y="156.3" width="4.5" height="3.2" fill="#ddd4ca"/>
<rect x="250.5" y="129.2" width="2.1" height="3.4" fill="#b9b0a8"/>
<rect x="159.2" y="137.7" width="2.7" height="2.0" fill="#ddd4ca"/>
<rect x="50.7" y="97.5" width="3.4" height="3.2" fill="#d0cbc4"/>
<rect x="15.6" y="175.2" width="4.3" height="3.4" fill="#968b80"/>
<rect x="119.9" y="123.8" width="3.8" height="2.0" fill="#cfb49b"/>
<rect x="0.2" y="150.7" width="6.2" height="2.0" fill="#bcae9f"/>
<rect x="110.0" y="118.3" width="6.6" height="3.0" fill="#a38a77"/>
<rect x="158.5" y="83.5" width="6.5" height="3.5" fill="#8a8580"/>
<rect x="273.6" y="171.1" width="6.7" height="2.9" fill="#ddd4ca"/>
<rect x="155.9" y="178.3" width="6.0" height="2.1" fill="#a38a77"/>
<rect x="232.0" y="158.2" width="6.1" height="2.5" fill="#968b80"/>
<rect x="274.9" y="150.1" width="5.8" height="3.4" fill="#a58c7a"/>
<rect x="61.6" y="100.1" width="6.0" height="2.3" fill="#a38a77"/>
<rect x="-0.6" y="116.9" width="5.2" height="3.1" fill="#857468"/>
<rect x="82.5" y="176.2" width="3.5" height="2.0" fill="#a58c7a"/>
<rect x="176.6" y="134.2" width="3.9" height="4.0" fill="#b27c68"/>
<rect x="63.6" y="93.7" width="4.0" height="2.9" fill="#a38a77"/>
<rect x="191.1" y="154.4" width="3.3" height="2.5" fill="#8e7b6c"/>
<rect x="237.3" y="145.5" width="2.1" height="2.1" fill="#c4a68e"/>
<rect x="283.1" y="135.9" width="4.5" height="3.9" fill="#d0cbc4"/>
<rect x="264.3" y="91.8" width="4.2" height="3.1" fill="#e2ddd6"/>
<rect x="185.4" y="156.4" width="2.2" height="3.8" fill="#b8a08a"/>
<rect x="118.3" y="177.1" width="6.3" height="2.9" fill="#b9b0a8"/>
<rect x="14.6" y="174.6" width="4.1" height="2.8" fill="#b9b0a8"/>
<rect x="95.0" y="134.0" width="4.4" height="2.2" fill="#b3a699"/>
<rect x="206.4" y="155.3" width="2.1" height="3.4" fill="#d0cbc4"/>
<rect x="9.6" y="97.3" width="5.8" height="2.5" fill="#968b80"/>
<rect x="233.2" y="86.9" width="6.9" height="3.9" fill="#d6ccc0"/>
<rect x="248.8" y="103.9" width="5.6" height="2.1" fill="#857468"/>
<rect x="10.4" y="91.7" width="6.1" height="3.8" fill="#7a685c"/>
<rect x="306.3" y="162.0" width="5.0" height="1.8" fill="#b9b0a8"/>
<rect x="128.2" y="93.6" width="6.3" height="2.4" fill="#7a685c"/>
<rect x="35.4" y="125.4" width="5.3" height="2.6" fill="#c4a68e"/>
<rect x="198.8" y="148.8" width="3.8" height="3.4" fill="#7a685c"/>
<rect x="298.0" y="154.0" width="3.2" height="1.8" fill="#b3a699"/>
<rect x="244.6" y="143.2" width="3.8" height="2.2" fill="#efe9e2"/>
<rect x="225.8" y="150.5" width="3.0" height="2.2" fill="#857468"/>
<rect x="56.2" y="106.4" width="6.9" height="3.8" fill="#efe9e2"/>
<rect x="8.5" y="88.0" width="3.4" height="2.6" fill="#b9b0a8"/>
<rect x="8.1" y="103.8" width="3.4" height="3.4" fill="#efe9e2"/>
<rect x="47.0" y="105.0" width="6.9" height="2.7" fill="#cfb49b"/>
<rect x="62.8" y="115.7" width="5.7" height="3.6" fill="#d6ccc0"/>
<rect x="250.3" y="125.8" width="6.1" height="3.6" fill="#ddd4ca"/>
<rect x="136.9" y="155.2" width="4.0" height="1.9" fill="#7a685c"/>
<rect x="203.2" y="178.9" width="3.6" height="2.9" fill="#b8a08a"/>
<rect x="131.6" y="118.2" width="2.5" height="3.7" fill="#d6ccc0"/>
<rect x="168.3" y="124.3" width="4.8" height="3.5" fill="#bcae9f"/>
<rect x="90.7" y="158.0" width="2.4" height="2.0" fill="#efe9e2"/>
<rect x="187.4" y="150.1" width="4.5" height="3.4" fill="#968b80"/>
<rect x="85.7" y="96.0" width="3.8" height="3.3" fill="#cfb49b"/>
<rect x="283.3" y="113.6" width="4.2" height="3.0" fill="#efe9e2"/>
<rect x="285.5" y="124.9" width="6.0" height="2.3" fill="#968b80"/>
<rect x="66.1" y="176.8" width="5.6" height="2.8" fill="#d6ccc0"/>
<rect x="110.7" y="117.8" width="3.8" height="2.5" fill="#a58c7a"/>
<rect x="248.4" y="154.4" width="3.8" height="2.5" fill="#7a685c"/>
<rect x="261.1" y="137.2" width="2.9" height="3.4" fill="#b3a699"/>
<rect x="253.4" y="103.7" width="2.3" height="1.9" fill="#b3a699"/>
<rect x="302.4" y="145.8" width="6.0" height="1.7" fill="#e2ddd6"/>
<rect x="92.8" y="135.5" width="3.7" height="2.2" fill="#a38a77"/>
<rect x="281.0" y="90.3" width="5.2" height="1.9" fill="#b27c68"/>
<rect x="129.8" y="151.8" width="4.4" height="3.8" fill="#968b80"/>
<rect x="238.4" y="120.6" width="3.7" height="3.9" fill="#efe9e2"/>
<rect x="39.3" y="129.8" width="6.0" height="1.7" fill="#b9b0a8"/>
<rect x="286.0" y="122.2" width="6.1" height="3.2" fill="#c2b2a0"/>
<rect x="251.5" y="163.7" width="6.4" height="3.9" fill="#b27c68"/>
<rect x="3.7" y="117.5" width="2.1" height="1.8" fill="#9a9490"/>
<rect x="286.2" y="106.1" width="2.8" height="3.1" fill="#efe9e2"/>
<rect x="49.1" y="102.0" width="4.1" height="2.2" fill="#8e7b6c"/>
<rect x="145.4" y="153.6" width="3.5" height="1.9" fill="#b8a08a"/>
<rect x="285.2" y="155.8" width="2.1" height="2.7" fill="#8e7b6c"/>
<rect x="95.1" y="101.4" width="3.8" height="3.0" fill="#b9b0a8"/>
<rect x="223.4" y="140.3" width="3.1" height="2.0" fill="#c4a68e"/>
<rect x="123.6" y="171.2" width="6.7" height="3.1" fill="#e2ddd6"/>
<rect x="148.0" y="107.5" width="6.4" height="3.8" fill="#968b80"/>
<rect x="205.3" y="157.6" width="2.5" height="3.7" fill="#a58c7a"/>
<rect x="11.8" y="174.9" width="6.0" height="2.5" fill="#6f6158"/>
<rect x="247.9" y="157.9" width="5.9" height="1.6" fill="#857468"/>
<rect x="278.8" y="167.7" width="6.5" height="2.6" fill="#857468"/>
<rect x="222.1" y="141.4" width="2.8" height="1.9" fill="#968b80"/>
<rect x="41.9" y="171.0" width="6.1" height="1.8" fill="#b9b0a8"/>
<rect x="80.5" y="134.4" width="2.8" height="3.4" fill="#c2b2a0"/>
<rect x="60.8" y="171.8" width="2.7" height="1.8" fill="#cfb49b"/>
<rect x="81.6" y="152.2" width="2.5" height="2.7" fill="#bcae9f"/>
<rect x="22.3" y="155.4" width="4.7" height="2.8" fill="#c2b2a0"/>
<rect x="246.2" y="122.9" width="6.6" height="1.7" fill="#bcae9f"/>
<rect x="62.1" y="135.3" width="4.6" height="1.9" fill="#b3a699"/>
<rect x="96.2" y="121.7" width="4.8" height="4.0" fill="#efe9e2"/>
<rect x="222.7" y="117.3" width="5.4" height="1.8" fill="#a58c7a"/>
<rect x="210.2" y="155.2" width="5.9" height="1.8" fill="#bcae9f"/>
<rect x="-0.1" y="119.0" width="5.6" height="2.1" fill="#d0cbc4"/>
<rect x="31.9" y="157.6" width="6.3" height="3.6" fill="#ddd4ca"/>
<rect x="281.8" y="96.9" width="5.1" height="3.8" fill="#b3a699"/>
<rect x="298.4" y="156.0" width="4.8" height="1.7" fill="#ddd4ca"/>
<rect x="59.4" y="153.7" width="3.6" height="3.9" fill="#d0cbc4"/>
<rect x="144.9" y="144.8" width="4.2" height="2.5" fill="#a38a77"/>
<rect x="40.6" y="91.3" width="5.4" height="3.3" fill="#b8a08a"/>
<rect x="57.2" y="85.6" width="4.3" height="3.3" fill="#a38a77"/>
<rect x="67.8" y="97.4" width="2.6" height="2.5" fill="#d6ccc0"/>
<rect x="104.3" y="162.7" width="6.6" height="1.8" fill="#ddd4ca"/>
<rect x="239.1" y="162.5" width="3.9" height="2.3" fill="#9a9490"/>
<rect x="193.5" y="153.2" width="5.1" height="2.3" fill="#857468"/>
<rect x="205.3" y="141.6" width="2.1" height="2.3" fill="#968b80"/>
<rect x="93.2" y="125.2" width="4.8" height="2.0" fill="#968b80"/>
<rect x="246.0" y="162.9" width="5.1" height="1.9" fill="#e2ddd6"/>
<rect x="282.2" y="135.7" width="3.8" height="2.8" fill="#7a685c"/>
<rect x="178.0" y="101.4" width="6.7" height="4.0" fill="#8a8580"/>
<rect x="260.9" y="101.3" width="6.7" height="3.1" fill="#ddd4ca"/>
<rect x="242.2" y="95.4" width="4.4" height="2.5" fill="#968b80"/>
<rect x="100.4" y="173.0" width="3.8" height="2.7" fill="#a38a77"/>
<rect x="139.4" y="153.5" width="3.2" height="2.9" fill="#e2ddd6"/>
<rect x="173.8" y="136.9" width="3.3" height="3.8" fill="#968b80"/>
<rect x="186.7" y="94.0" width="6.1" height="2.2" fill="#cfb49b"/>
<rect x="72.4" y="138.2" width="6.2" height="2.0" fill="#e2ddd6"/>
<rect x="253.2" y="126.5" width="4.0" height="3.5" fill="#efe9e2"/>
<rect x="39.8" y="156.1" width="6.2" height="3.8" fill="#b9b0a8"/>
<rect x="183.6" y="160.8" width="2.1" height="2.0" fill="#bcae9f"/>
<rect x="6.5" y="133.7" width="2.6" height="2.5" fill="#968b80"/>
<rect x="160.8" y="107.8" width="4.8" height="2.3" fill="#b27c68"/>
<rect x="244.5" y="152.7" width="5.9" height="2.5" fill="#c9b8a4"/>
<rect x="186.2" y="128.1" width="4.1" height="3.1" fill="#8a8580"/>
<rect x="175.0" y="121.9" width="3.4" height="3.7" fill="#bcae9f"/>
<rect x="261.7" y="165.8" width="4.0" height="2.6" fill="#d0cbc4"/>
<rect x="32.3" y="174.0" width="3.7" height="2.8" fill="#9a9490"/>
<rect x="282.7" y="113.4" width="2.3" height="3.3" fill="#9a9490"/>
<rect x="228.0" y="140.6" width="5.8" height="2.3" fill="#d0cbc4"/>
<rect x="274.0" y="105.9" width="6.2" height="2.1" fill="#a58c7a"/>
<rect x="304.3" y="128.6" width="2.5" height="3.8" fill="#e2ddd6"/>
<rect x="93.1" y="120.8" width="3.2" height="1.7" fill="#efe9e2"/>
<rect x="112.9" y="135.5" width="4.8" height="1.9" fill="#b27c68"/>
<rect x="232.7" y="137.5" width="6.5" height="1.7" fill="#7a685c"/>
<rect x="35.2" y="134.7" width="6.8" height="1.5" fill="#857468"/>
<rect x="226.8" y="84.3" width="2.9" height="2.6" fill="#bcae9f"/>
<rect x="254.5" y="120.9" width="3.8" height="3.0" fill="#8e7b6c"/>
<rect x="93.1" y="126.6" width="3.6" height="2.3" fill="#7a685c"/>
<rect x="292.1" y="177.8" width="4.4" height="2.0" fill="#b3a699"/>
<rect x="268.3" y="149.9" width="2.3" height="2.3" fill="#cfb49b"/>
<rect x="281.1" y="83.6" width="5.2" height="3.2" fill="#e2ddd6"/>
<rect x="60.0" y="144.0" width="3.0" height="3.7" fill="#8e7b6c"/>
<rect x="202.1" y="112.0" width="6.1" height="3.9" fill="#c4a68e"/>
<rect x="271.7" y="151.9" width="2.7" height="3.2" fill="#bcae9f"/>
<rect x="127.6" y="98.6" width="6.3" height="1.8" fill="#8a8580"/>
<rect x="58.3" y="99.7" width="3.2" height="3.2" fill="#c4a68e"/>
<rect x="114.1" y="146.9" width="6.4" height="3.0" fill="#857468"/>
<rect x="305.8" y="169.8" width="2.9" height="2.1" fill="#7a685c"/>
<rect x="198.9" y="90.8" width="6.9" height="2.6" fill="#6f6158"/>
<rect x="19.4" y="170.9" width="2.0" height="3.0" fill="#e2ddd6"/>
<rect x="75.5" y="160.7" width="2.4" height="2.2" fill="#ddd4ca"/>
<rect x="73.9" y="109.4" width="4.7" height="2.0" fill="#7a685c"/>
<rect x="309.1" y="85.3" width="4.3" height="3.4" fill="#a58c7a"/>
<rect x="-3.2" y="169.4" width="2.3" height="1.7" fill="#b27c68"/>
<rect x="284.4" y="113.4" width="4.4" height="1.6" fill="#b3a699"/>
<rect x="156.3" y="164.8" width="5.4" height="2.8" fill="#e2ddd6"/>
<rect x="51.1" y="158.4" width="2.8" height="3.0" fill="#857468"/>
<rect x="207.9" y="135.7" width="3.3" height="3.3" fill="#857468"/>
<rect x="78.3" y="135.3" width="6.3" height="3.0" fill="#c4a68e"/>
<rect x="7.2" y="140.5" width="5.6" height="2.9" fill="#b8a08a"/>
<rect x="99.0" y="141.6" width="5.0" height="3.5" fill="#6f6158"/>
<rect x="136.0" y="107.8" width="6.0" height="1.7" fill="#b8a08a"/>
<rect x="176.3" y="135.2" width="6.0" height="2.1" fill="#7a685c"/>
<rect x="13.1" y="123.7" width="5.5" height="3.5" fill="#6f6158"/>
<rect x="243.5" y="157.0" width="4.5" height="3.1" fill="#6f6158"/>
<rect x="50.4" y="107.0" width="2.8" height="3.2" fill="#b9b0a8"/>
<rect x="245.4" y="88.0" width="4.1" height="2.4" fill="#ddd4ca"/>
<rect x="219.1" y="175.8" width="2.6" height="3.4" fill="#b9b0a8"/>
<rect x="308.6" y="96.2" width="4.3" height="3.4" fill="#8e7b6c"/>
<rect x="-2.9" y="122.2" width="4.6" height="1.7" fill="#e2ddd6"/>
<rect x="90.5" y="123.6" width="2.4" height="1.6" fill="#8a8580"/>
<rect x="238.0" y="153.9" width="3.1" height="2.1" fill="#e2ddd6"/>
<rect x="267.1" y="123.0" width="2.4" height="2.1" fill="#b3a699"/>
<rect x="102.8" y="178.2" width="5.1" height="1.6" fill="#a58c7a"/>
<rect x="181.5" y="179.5" width="5.7" height="2.9" fill="#d0cbc4"/>
<rect x="288.9" y="99.4" width="6.3" height="3.8" fill="#ddd4ca"/>
<rect x="116.8" y="158.6" width="3.1" height="2.4" fill="#b8a08a"/>
<rect x="247.5" y="160.8" width="4.4" height="2.5" fill="#b9b0a8"/>
<rect x="144.3" y="112.2" width="4.2" height="4.0" fill="#efe9e2"/>
<rect x="53.6" y="129.7" width="4.7" height="2.5" fill="#8e7b6c"/>
<rect x="215.2" y="117.6" width="3.4" height="1.5" fill="#b8a08a"/>
<rect x="231.1" y="132.2" width="4.8" height="3.1" fill="#ddd4ca"/>
<rect x="81.2" y="117.4" width="2.8" height="3.8" fill="#cfb49b"/>
<rect x="39.5" y="105.6" width="6.2" height="1.8" fill="#968b80"/>
<rect x="261.9" y="126.1" width="6.3" height="2.5" fill="#c4a68e"/>
<rect x="240.3" y="132.9" width="2.3" height="2.5" fill="#857468"/>
<rect x="150.8" y="100.4" width="4.6" height="1.8" fill="#ddd4ca"/>
<rect x="95.0" y="123.6" width="4.7" height="1.8" fill="#8a8580"/>
<rect x="169.8" y="112.8" width="4.3" height="2.4" fill="#ddd4ca"/>
<rect x="260.6" y="134.4" width="4.2" height="1.8" fill="#6f6158"/>
<rect x="270.5" y="104.2" width="3.5" height="2.4" fill="#ddd4ca"/>
<rect x="40.5" y="165.1" width="5.7" height="2.7" fill="#c2b2a0"/>
<rect x="252.4" y="177.6" width="3.5" height="3.2" fill="#ddd4ca"/>
<rect x="172.9" y="116.6" width="2.6" height="3.4" fill="#cfb49b"/>
<rect x="70.4" y="144.0" width="2.4" height="2.6" fill="#a58c7a"/>
<rect x="152.3" y="130.0" width="6.7" height="2.2" fill="#8a8580"/>
<rect x="84.7" y="97.5" width="4.0" height="2.7" fill="#b8a08a"/>
<rect x="107.2" y="151.8" width="4.6" height="3.4" fill="#9a9490"/>
<rect x="250.9" y="128.9" width="3.3" height="3.6" fill="#b3a699"/>
<rect x="218.0" y="84.3" width="4.0" height="2.4" fill="#d6ccc0"/>
<rect x="285.2" y="108.7" width="3.9" height="3.6" fill="#b3a699"/>
<rect x="144.7" y="113.9" width="3.3" height="1.6" fill="#cfb49b"/>
<rect x="98.6" y="118.6" width="3.5" height="3.5" fill="#b8a08a"/>
<rect x="199.6" y="119.7" width="3.7" height="3.7" fill="#c2b2a0"/>
<rect x="178.6" y="174.4" width="5.9" height="3.1" fill="#b9b0a8"/>
<rect x="168.1" y="142.1" width="2.3" height="1.7" fill="#bcae9f"/>
<rect x="274.9" y="119.4" width="6.5" height="1.6" fill="#7a685c"/>
<rect x="212.6" y="108.7" width="4.5" height="2.7" fill="#c2b2a0"/>
<rect x="43.5" y="100.9" width="3.1" height="3.2" fill="#857468"/>
<rect x="161.0" y="172.8" width="6.9" height="1.5" fill="#e2ddd6"/>
<rect x="152.5" y="145.7" width="4.7" height="3.1" fill="#e2ddd6"/>
<rect x="276.3" y="149.7" width="6.0" height="2.2" fill="#a38a77"/>
<rect x="277.0" y="112.7" width="5.6" height="3.2" fill="#efe9e2"/>
<rect x="45.6" y="100.8" width="2.8" height="2.3" fill="#8a8580"/>
<rect x="151.5" y="137.3" width="3.8" height="2.2" fill="#efe9e2"/>
<rect x="165.3" y="105.2" width="3.2" height="2.3" fill="#b8a08a"/>
<rect x="286.8" y="154.3" width="6.4" height="4.0" fill="#a38a77"/>
<rect x="276.7" y="112.4" width="6.2" height="2.8" fill="#efe9e2"/>
<rect x="148.4" y="97.9" width="6.3" height="3.7" fill="#8e7b6c"/>
<rect x="105.3" y="120.9" width="5.7" height="3.2" fill="#c4a68e"/>
<rect x="223.0" y="106.7" width="5.6" height="2.3" fill="#968b80"/>
<rect x="267.4" y="102.1" width="4.8" height="1.8" fill="#9a9490"/>
<rect x="199.3" y="94.3" width="5.7" height="2.2" fill="#b8a08a"/>
<rect x="35.7" y="118.9" width="5.3" height="2.1" fill="#b8a08a"/>
<rect x="304.7" y="128.2" width="5.5" height="3.5" fill="#7a685c"/>
<rect x="81.0" y="108.6" width="3.3" height="3.2" fill="#a58c7a"/>
<rect x="291.9" y="178.9" width="2.2" height="3.3" fill="#a38a77"/>
<rect x="272.0" y="101.0" width="3.8" height="2.8" fill="#a38a77"/>
<rect x="124.3" y="170.7" width="6.2" height="3.6" fill="#b8a08a"/>
<rect x="114.4" y="112.3" width="6.0" height="3.6" fill="#b3a699"/>
<rect x="66.9" y="152.7" width="4.0" height="1.9" fill="#d0cbc4"/>
<rect x="119.4" y="150.0" width="4.7" height="3.5" fill="#7a685c"/>
<rect x="136.2" y="163.7" width="4.8" height="3.7" fill="#c9b8a4"/>
<rect x="133.1" y="96.9" width="6.4" height="2.2" fill="#d0cbc4"/>
<rect x="41.5" y="143.3" width="3.4" height="2.1" fill="#c9b8a4"/>
<rect x="59.7" y="136.0" width="4.8" height="1.9" fill="#c2b2a0"/>
<rect x="279.0" y="112.3" width="2.4" height="2.0" fill="#c9b8a4"/>
<rect x="40.3" y="159.3" width="7.0" height="2.5" fill="#8e7b6c"/>
<rect x="127.4" y="161.1" width="4.0" height="1.6" fill="#e2ddd6"/>
<rect x="191.5" y="163.1" width="3.3" height="2.0" fill="#b3a699"/>
<rect x="270.1" y="179.4" width="4.2" height="3.6" fill="#8e7b6c"/>
<rect x="51.7" y="84.6" width="2.8" height="1.8" fill="#d6ccc0"/>
<rect x="81.9" y="84.4" width="4.8" height="1.7" fill="#bcae9f"/>
<rect x="-0.7" y="102.6" width="6.8" height="1.5" fill="#6f6158"/>
<rect x="80.0" y="106.0" width="6.6" height="2.7" fill="#b3a699"/>
<rect x="250.6" y="163.1" width="5.8" height="4.0" fill="#a38a77"/>
<rect x="292.8" y="129.2" width="6.2" height="2.5" fill="#b9b0a8"/>
<rect x="3.4" y="138.5" width="3.1" height="2.5" fill="#cfb49b"/>
<rect x="156.5" y="109.1" width="7.0" height="3.1" fill="#bcae9f"/>
<rect x="108.2" y="109.4" width="6.5" height="2.3" fill="#a38a77"/>
<rect x="79.9" y="102.9" width="2.9" height="1.6" fill="#7a685c"/>
<rect x="169.2" y="148.7" width="2.9" height="1.8" fill="#7a685c"/>
<rect x="114.2" y="99.9" width="2.1" height="2.5" fill="#8e7b6c"/>
<rect x="123.9" y="113.5" width="4.7" height="3.9" fill="#ddd4ca"/>
<rect x="2.6" y="99.1" width="2.3" height="3.0" fill="#d0cbc4"/>
<rect x="309.0" y="124.2" width="6.8" height="2.0" fill="#9a9490"/>
<rect x="243.4" y="169.0" width="6.1" height="1.7" fill="#a58c7a"/>
<rect x="296.4" y="113.6" width="2.9" height="2.4" fill="#c2b2a0"/>
<rect x="43.0" y="144.2" width="3.9" height="3.1" fill="#ddd4ca"/>
<rect x="191.4" y="115.8" width="4.2" height="3.3" fill="#9a9490"/>
<rect x="156.0" y="137.6" width="2.6" height="3.6" fill="#8a8580"/>
<rect x="231.9" y="124.7" width="4.3" height="3.6" fill="#6f6158"/>
<rect x="68.9" y="140.9" width="4.9" height="2.8" fill="#8e7b6c"/>
<rect x="163.4" y="126.3" width="3.4" height="1.6" fill="#8e7b6c"/>
<rect x="291.3" y="96.9" width="4.3" height="4.0" fill="#b9b0a8"/>
<rect x="95.2" y="154.2" width="6.9" height="2.5" fill="#7a685c"/>
<rect x="234.7" y="169.9" width="2.6" height="2.0" fill="#b27c68"/>
<rect x="246.4" y="96.0" width="2.6" height="1.8" fill="#c4a68e"/>
<rect x="311.0" y="88.4" width="6.4" height="3.3" fill="#c4a68e"/>
<rect x="160.1" y="116.2" width="3.0" height="1.5" fill="#9a9490"/>
<rect x="58.1" y="109.4" width="5.2" height="1.7" fill="#e2ddd6"/>
<rect x="135.6" y="156.2" width="6.4" height="1.7" fill="#c9b8a4"/>
<rect x="267.1" y="157.5" width="4.7" height="3.8" fill="#7a685c"/>
<rect x="253.3" y="99.5" width="3.7" height="3.8" fill="#857468"/>
<rect x="260.3" y="93.5" width="2.9" height="2.5" fill="#efe9e2"/>
<rect x="191.6" y="170.4" width="2.4" height="4.0" fill="#ddd4ca"/>
<rect x="164.7" y="113.0" width="6.8" height="3.9" fill="#e2ddd6"/>
<rect x="207.9" y="124.2" width="2.1" height="2.3" fill="#968b80"/>
<rect x="263.8" y="174.7" width="5.3" height="2.0" fill="#ddd4ca"/>
<rect x="53.3" y="94.5" width="5.5" height="2.7" fill="#7a685c"/>
<rect x="84.2" y="107.3" width="3.7" height="3.1" fill="#b3a699"/>
<rect x="58.2" y="179.5" width="5.5" height="3.3" fill="#cfb49b"/>
<rect x="271.9" y="157.4" width="3.0" height="1.7" fill="#c4a68e"/>
<rect x="130.6" y="162.4" width="4.0" height="2.6" fill="#6f6158"/>
<rect x="35.2" y="91.3" width="4.6" height="2.5" fill="#c9b8a4"/>
<rect x="179.6" y="109.9" width="6.4" height="2.2" fill="#d6ccc0"/>
<rect x="210.5" y="126.6" width="6.7" height="2.5" fill="#9a9490"/>
<rect x="186.6" y="125.9" width="2.3" height="2.5" fill="#b3a699"/>
<rect x="181.2" y="146.5" width="3.3" height="3.2" fill="#c2b2a0"/>
<rect x="209.0" y="106.0" width="4.1" height="1.8" fill="#c4a68e"/>
<rect x="119.0" y="109.3" width="2.5" height="3.7" fill="#d0cbc4"/>
<rect x="29.1" y="146.4" width="4.3" height="2.0" fill="#cfb49b"/>
<rect x="1.1" y="85.0" width="5.0" height="3.2" fill="#c2b2a0"/>
<rect x="207.7" y="97.3" width="2.4" height="1.9" fill="#6f6158"/>
<rect x="96.2" y="147.7" width="5.0" height="3.9" fill="#c2b2a0"/>
<rect x="310.7" y="120.7" width="6.1" height="3.1" fill="#8a8580"/>
<rect x="30.9" y="87.6" width="7.0" height="3.1" fill="#b27c68"/>
<rect x="291.5" y="132.7" width="4.9" height="2.7" fill="#7a685c"/>
<rect x="159.4" y="91.4" width="6.0" height="1.5" fill="#b27c68"/>
<rect x="216.6" y="159.1" width="6.5" height="3.2" fill="#c9b8a4"/>
<rect x="242.0" y="93.7" width="4.3" height="1.5" fill="#cfb49b"/>
<rect x="295.4" y="169.8" width="2.1" height="2.4" fill="#e2ddd6"/>
<rect x="173.9" y="177.5" width="5.9" height="1.7" fill="#6f6158"/>
<rect x="174.8" y="88.6" width="3.2" height="3.2" fill="#6f6158"/>
<rect x="158.4" y="110.8" width="5.9" height="2.1" fill="#9a9490"/>
<rect x="143.8" y="179.0" width="4.9" height="1.9" fill="#a38a77"/>
<rect x="141.6" y="165.4" width="2.5" height="3.6" fill="#7a685c"/>
<rect x="41.6" y="137.3" width="2.9" height="3.0" fill="#8a8580"/>
<rect x="301.5" y="122.5" width="2.1" height="1.9" fill="#a38a77"/>
<rect x="228.8" y="151.8" width="2.8" height="2.8" fill="#c2b2a0"/>
<rect x="124.4" y="130.4" width="6.6" height="2.9" fill="#8e7b6c"/>
<rect x="119.6" y="111.3" width="3.1" height="2.8" fill="#efe9e2"/>
<rect x="287.3" y="114.2" width="4.4" height="3.1" fill="#e2ddd6"/>
<rect x="296.0" y="137.7" width="4.5" height="3.8" fill="#a58c7a"/>
<rect x="194.3" y="108.2" width="5.0" height="2.1" fill="#d6ccc0"/>
<rect x="132.1" y="128.7" width="3.8" height="2.6" fill="#bcae9f"/>
<rect x="33.0" y="112.5" width="4.7" height="1.9" fill="#a58c7a"/>
<rect x="169.6" y="121.2" width="3.1" height="1.7" fill="#cfb49b"/>
<rect x="6.3" y="117.2" width="6.8" height="2.8" fill="#6f6158"/>
<rect x="150.5" y="82.9" width="4.0" height="3.9" fill="#c2b2a0"/>
<rect x="214.0" y="117.0" width="3.2" height="3.9" fill="#8a8580"/>
<rect x="112.9" y="111.5" width="5.0" height="3.0" fill="#968b80"/>
<rect x="54.2" y="93.6" width="5.8" height="2.4" fill="#d6ccc0"/>
<rect x="63.6" y="139.8" width="6.0" height="3.9" fill="#b27c68"/>
<rect x="268.6" y="121.4" width="3.4" height="3.2" fill="#d6ccc0"/>
<rect x="121.7" y="104.1" width="3.3" height="1.6" fill="#7a685c"/>
<rect x="255.7" y="159.3" width="5.2" height="1.6" fill="#c9b8a4"/>
<rect x="11.2" y="143.2" width="4.8" height="3.8" fill="#b27c68"/>
<rect x="223.5" y="142.5" width="5.4" height="2.0" fill="#e2ddd6"/>
<rect x="-2.2" y="154.2" width="4.1" height="3.2" fill="#d6ccc0"/>
<rect x="50.7" y="90.2" width="5.4" height="1.9" fill="#bcae9f"/>
<rect x="210.7" y="160.5" width="4.2" height="3.7" fill="#d6ccc0"/>
<rect x="260.8" y="175.7" width="3.8" height="3.6" fill="#8a8580"/>
<rect x="31.9" y="93.6" width="3.6" height="3.9" fill="#e2ddd6"/>
<rect x="32.1" y="167.1" width="2.5" height="2.3" fill="#7a685c"/>
<rect x="262.0" y="94.1" width="6.4" height="2.7" fill="#8e7b6c"/>
<rect x="280.2" y="173.2" width="3.0" height="3.3" fill="#c9b8a4"/>
<rect x="152.5" y="149.6" width="3.9" height="3.4" fill="#a38a77"/>
<rect x="170.2" y="165.8" width="5.9" height="2.3" fill="#c2b2a0"/>
<rect x="105.8" y="98.1" width="3.7" height="3.0" fill="#6f6158"/>
<rect x="212.7" y="126.4" width="4.9" height="2.7" fill="#d0cbc4"/>
<rect x="42.9" y="151.0" width="4.0" height="1.7" fill="#c9b8a4"/>
<rect x="70.0" y="107.6" width="5.7" height="2.9" fill="#c4a68e"/>
<rect x="288.2" y="160.7" width="3.3" height="2.1" fill="#ddd4ca"/>
<rect x="133.2" y="142.5" width="4.8" height="3.9" fill="#6f6158"/>
<rect x="140.5" y="129.7" width="3.2" height="3.4" fill="#a38a77"/>
<rect x="211.4" y="131.1" width="2.8" height="4.0" fill="#cfb49b"/>
<rect x="176.1" y="136.0" width="3.7" height="1.9" fill="#cfb49b"/>
<rect x="251.4" y="91.6" width="5.9" height="2.0" fill="#ddd4ca"/>
<rect x="269.0" y="154.3" width="3.7" height="1.9" fill="#ddd4ca"/>
<rect x="180.6" y="170.1" width="6.6" height="3.2" fill="#cfb49b"/>
<rect x="30.5" y="159.2" width="6.0" height="3.0" fill="#c4a68e"/>
<rect x="31.0" y="117.1" width="2.9" height="3.7" fill="#efe9e2"/>
<rect x="88.9" y="106.8" width="2.7" height="2.7" fill="#c4a68e"/>
<rect x="5.2" y="159.8" width="6.7" height="1.9" fill="#a58c7a"/>
<rect x="46.8" y="166.2" width="6.3" height="3.0" fill="#e2ddd6"/>
<rect x="249.7" y="98.0" width="5.8" height="3.3" fill="#d0cbc4"/>
<rect x="241.7" y="107.5" width="2.3" height="3.8" fill="#cfb49b"/>
<rect x="202.6" y="135.2" width="4.4" height="3.2" fill="#cfb49b"/>
<rect x="227.2" y="174.5" width="4.5" height="2.9" fill="#cfb49b"/>
<rect x="276.7" y="89.4" width="4.7" height="2.9" fill="#efe9e2"/>
<rect x="231.5" y="111.6" width="2.0" height="3.8" fill="#a38a77"/>
<rect x="57.9" y="118.0" width="3.8" height="1.9" fill="#efe9e2"/>
<rect x="206.7" y="95.8" width="4.1" height="1.9" fill="#efe9e2"/>
<rect x="304.8" y="177.5" width="6.6" height="2.9" fill="#9a9490"/>
<rect x="163.1" y="100.1" width="4.6" height="2.4" fill="#c9b8a4"/>
<rect x="289.3" y="168.2" width="2.5" height="1.8" fill="#ddd4ca"/>
<rect x="20.9" y="129.7" width="4.8" height="3.9" fill="#e2ddd6"/>
<rect x="24.2" y="170.1" width="3.3" height="2.0" fill="#c4a68e"/>
<rect x="293.6" y="177.7" width="6.7" height="3.8" fill="#9a9490"/>
<rect x="292.4" y="84.0" width="4.4" height="3.0" fill="#efe9e2"/>
<rect x="177.1" y="170.0" width="3.6" height="1.9" fill="#6f6158"/>
<rect x="45.8" y="171.5" width="2.5" height="2.2" fill="#b3a699"/>
<rect x="299.4" y="84.4" width="2.2" height="3.6" fill="#8a8580"/>
<rect x="187.7" y="165.0" width="5.8" height="3.2" fill="#d6ccc0"/>
<rect x="-3.8" y="88.7" width="6.0" height="3.9" fill="#857468"/>
<rect x="125.2" y="114.9" width="3.7" height="1.5" fill="#857468"/>
<rect x="79.1" y="139.4" width="4.6" height="2.3" fill="#efe9e2"/>
<rect x="107.6" y="145.9" width="6.7" height="2.5" fill="#ddd4ca"/>
<rect x="43.5" y="106.8" width="4.4" height="3.5" fill="#968b80"/>
<rect x="54.6" y="148.5" width="5.1" height="3.0" fill="#d0cbc4"/>
<rect x="76.8" y="167.9" width="2.9" height="2.1" fill="#b3a699"/>
<rect x="157.6" y="154.5" width="3.0" height="1.6" fill="#857468"/>
<rect x="167.2" y="89.7" width="5.8" height="2.1" fill="#ddd4ca"/>
<rect x="10.2" y="136.6" width="2.7" height="3.2" fill="#d6ccc0"/>
<rect x="284.8" y="179.1" width="3.9" height="1.8" fill="#efe9e2"/>
<rect x="244.0" y="115.1" width="6.0" height="2.4" fill="#b3a699"/>
<rect x="174.2" y="174.5" width="2.3" height="3.9" fill="#c2b2a0"/>
<rect x="12.5" y="85.2" width="6.8" height="2.6" fill="#b8a08a"/>
<rect x="41.5" y="102.1" width="6.4" height="3.9" fill="#968b80"/>
<rect x="104.4" y="173.2" width="2.7" height="3.3" fill="#8e7b6c"/>
<rect x="57.1" y="95.3" width="5.4" height="3.7" fill="#efe9e2"/>
<rect x="139.8" y="118.5" width="2.6" height="2.2" fill="#d6ccc0"/>
<rect x="307.8" y="153.1" width="5.4" height="1.8" fill="#968b80"/>
<rect x="54.0" y="94.0" width="4.6" height="2.9" fill="#d0cbc4"/>
<rect x="136.3" y="160.7" width="3.3" height="1.7" fill="#b27c68"/>
<rect x="66.7" y="89.5" width="3.5" height="3.4" fill="#efe9e2"/>
<rect x="155.7" y="97.7" width="3.7" height="2.9" fill="#b3a699"/>
<rect x="149.3" y="169.5" width="5.0" height="2.4" fill="#c9b8a4"/>
<rect x="143.4" y="100.7" width="6.7" height="3.9" fill="#c2b2a0"/>
<rect x="135.1" y="139.3" width="4.7" height="2.2" fill="#8e7b6c"/>
<rect x="50.9" y="154.2" width="3.1" height="1.5" fill="#857468"/>
<rect x="130.4" y="176.2" width="5.1" height="1.7" fill="#c2b2a0"/>
<rect x="53.9" y="83.5" width="3.5" height="1.6" fill="#c4a68e"/>
<rect x="264.8" y="137.1" width="5.4" height="2.1" fill="#968b80"/>
<rect x="48.7" y="96.1" width="4.9" height="3.0" fill="#9a9490"/>
<rect x="167.2" y="127.1" width="3.7" height="3.8" fill="#857468"/>
<rect x="210.8" y="142.9" width="6.5" height="3.1" fill="#bcae9f"/>
<rect x="157.3" y="178.5" width="3.4" height="1.9" fill="#968b80"/>
<rect x="70.5" y="139.2" width="2.8" height="3.9" fill="#b3a699"/>
<rect x="198.5" y="144.1" width="2.0" height="2.7" fill="#a38a77"/>
<rect x="153.6" y="172.4" width="4.6" height="2.4" fill="#c2b2a0"/>
<rect x="206.1" y="121.3" width="4.5" height="3.6" fill="#d0cbc4"/>
<rect x="142.5" y="90.8" width="4.5" height="2.7" fill="#b27c68"/>
<rect x="41.3" y="84.7" width="4.7" height="1.6" fill="#c4a68e"/>
<rect x="249.6" y="105.0" width="6.1" height="3.5" fill="#c4a68e"/>
<rect x="57.8" y="144.1" width="2.5" height="2.4" fill="#8e7b6c"/>
<rect x="295.8" y="130.0" width="4.4" height="2.2" fill="#efe9e2"/>
<rect x="155.5" y="115.6" width="3.0" height="2.0" fill="#bcae9f"/>
<rect x="250.7" y="177.9" width="6.6" height="3.2" fill="#8a8580"/>
<rect x="82.7" y="111.2" width="6.4" height="1.8" fill="#c9b8a4"/>
<rect x="92.1" y="105.9" width="6.6" height="1.6" fill="#6f6158"/>
<rect x="204.6" y="128.1" width="5.2" height="3.2" fill="#a58c7a"/>
<rect x="291.6" y="145.1" width="2.3" height="3.2" fill="#a38a77"/>
<rect x="78.3" y="110.2" width="3.9" height="2.1" fill="#b9b0a8"/>
<rect x="216.1" y="156.3" width="6.9" height="3.1" fill="#7a685c"/>
<rect x="233.5" y="147.6" width="4.2" height="2.5" fill="#a58c7a"/>
<rect x="245.0" y="167.6" width="4.8" height="3.9" fill="#b27c68"/>
<rect x="289.0" y="104.0" width="5.6" height="1.6" fill="#b8a08a"/>
<rect x="154.5" y="178.0" width="3.2" height="3.0" fill="#a38a77"/>
<rect x="216.1" y="132.6" width="3.6" height="2.2" fill="#b8a08a"/>
<rect x="4.5" y="108.2" width="5.9" height="1.8" fill="#968b80"/>
<rect x="289.9" y="171.3" width="3.5" height="3.9" fill="#b9b0a8"/>
<rect x="92.0" y="127.5" width="2.3" height="1.8" fill="#ddd4ca"/>
<rect x="161.6" y="129.8" width="2.2" height="3.7" fill="#e2ddd6"/>
<rect x="11.9" y="156.1" width="4.6" height="2.2" fill="#d0cbc4"/>
<rect x="111.5" y="124.5" width="4.0" height="2.3" fill="#cfb49b"/>
<rect x="89.7" y="166.3" width="6.3" height="2.8" fill="#ddd4ca"/>
<rect x="124.9" y="105.1" width="4.4" height="3.9" fill="#a38a77"/>
<rect x="132.1" y="128.6" width="4.1" height="3.1" fill="#b27c68"/>
<rect x="289.1" y="131.0" width="6.7" height="3.0" fill="#9a9490"/>
<rect x="312.2" y="133.7" width="2.9" height="3.4" fill="#8e7b6c"/>
<rect x="191.0" y="100.0" width="6.8" height="3.5" fill="#d0cbc4"/>
<rect x="226.4" y="113.3" width="5.8" height="3.1" fill="#8a8580"/>
<rect x="14.4" y="88.0" width="6.9" height="3.9" fill="#ddd4ca"/>
<rect x="298.6" y="169.1" width="2.3" height="1.7" fill="#c4a68e"/>
<rect x="143.4" y="142.3" width="6.3" height="4.0" fill="#c9b8a4"/>
<rect x="177.7" y="154.9" width="4.0" height="3.1" fill="#efe9e2"/>
<rect x="269.7" y="122.1" width="2.4" height="2.9" fill="#857468"/>
<rect x="13.4" y="128.4" width="2.1" height="1.7" fill="#a58c7a"/>
<rect x="227.5" y="142.7" width="3.0" height="2.1" fill="#c9b8a4"/>
<rect x="308.8" y="167.6" width="6.6" height="3.1" fill="#968b80"/>
<rect x="92.4" y="103.7" width="6.3" height="2.8" fill="#9a9490"/>
<rect x="230.3" y="167.2" width="3.0" height="1.6" fill="#d6ccc0"/>
<rect x="220.5" y="125.9" width="3.8" height="2.6" fill="#bcae9f"/>
<rect x="134.0" y="102.7" width="2.1" height="3.7" fill="#b9b0a8"/>
<rect x="241.0" y="126.6" width="4.4" height="3.7" fill="#bcae9f"/>
<rect x="205.0" y="148.4" width="4.5" height="3.5" fill="#a58c7a"/>
<rect x="276.9" y="89.3" width="3.1" height="2.1" fill="#b9b0a8"/>
<rect x="297.1" y="146.3" width="5.3" height="2.6" fill="#b27c68"/>
<rect x="90.6" y="140.9" width="2.4" height="3.0" fill="#968b80"/>
<rect x="174.6" y="120.4" width="6.2" height="2.4" fill="#9a9490"/>
<rect x="78.3" y="142.1" width="3.1" height="2.5" fill="#ddd4ca"/>
<rect x="232.9" y="124.5" width="4.5" height="1.6" fill="#ddd4ca"/>
<rect x="261.4" y="120.3" width="5.0" height="3.3" fill="#968b80"/>
<rect x="232.7" y="138.7" width="3.3" height="3.3" fill="#e2ddd6"/>
<rect x="125.2" y="97.4" width="2.1" height="3.4" fill="#d0cbc4"/>
<rect x="99.0" y="153.2" width="6.8" height="2.2" fill="#d0cbc4"/>
<rect x="104.8" y="175.4" width="3.6" height="3.8" fill="#c9b8a4"/>
<rect x="206.3" y="110.3" width="6.0" height="2.6" fill="#7a685c"/>
<rect x="27.1" y="86.7" width="4.3" height="2.9" fill="#bcae9f"/>
<rect x="176.5" y="175.4" width="3.8" height="3.4" fill="#d6ccc0"/>
<rect x="-1.1" y="135.5" width="2.8" height="2.4" fill="#ddd4ca"/>
<rect x="116.5" y="108.8" width="3.8" height="2.8" fill="#c2b2a0"/>
<rect x="167.0" y="121.0" width="4.0" height="3.5" fill="#b27c68"/>
<rect x="272.6" y="173.5" width="3.2" height="1.9" fill="#a38a77"/>
<rect x="284.6" y="144.4" width="2.1" height="2.0" fill="#c2b2a0"/>
<rect x="151.0" y="150.1" width="2.1" height="3.5" fill="#968b80"/>
<rect x="63.0" y="150.9" width="5.5" height="2.3" fill="#ddd4ca"/>
<rect x="264.1" y="150.7" width="2.1" height="3.8" fill="#d0cbc4"/>
<rect x="85.2" y="131.5" width="3.8" height="2.9" fill="#b9b0a8"/>
<rect x="192.4" y="96.7" width="6.8" height="2.4" fill="#bcae9f"/>
<rect x="277.1" y="99.2" width="2.9" height="3.0" fill="#b8a08a"/>
<rect x="146.0" y="141.3" width="3.7" height="3.4" fill="#968b80"/>
<rect x="272.5" y="104.2" width="3.8" height="2.1" fill="#8a8580"/>
<rect x="208.0" y="165.3" width="5.7" height="3.4" fill="#efe9e2"/>
<rect x="168.2" y="139.2" width="2.5" height="1.6" fill="#cfb49b"/>
<rect x="237.5" y="130.2" width="4.7" height="2.5" fill="#a38a77"/>
<rect x="128.4" y="171.1" width="5.1" height="2.9" fill="#8e7b6c"/>
<rect x="207.4" y="150.2" width="3.6" height="2.7" fill="#b3a699"/>
<rect x="66.1" y="84.0" width="3.2" height="1.5" fill="#b3a699"/>
<rect x="91.0" y="83.5" width="3.8" height="2.5" fill="#b8a08a"/>
<rect x="81.2" y="93.1" width="6.2" height="2.7" fill="#6f6158"/>
<rect x="56.2" y="135.4" width="6.4" height="3.7" fill="#efe9e2"/>
<rect x="136.8" y="152.4" width="3.2" height="3.5" fill="#cfb49b"/>
<rect x="155.8" y="127.9" width="4.6" height="2.8" fill="#857468"/>
<rect x="86.4" y="111.0" width="4.0" height="3.1" fill="#8e7b6c"/>
<rect x="192.7" y="110.0" width="3.0" height="3.7" fill="#e2ddd6"/>
<rect x="212.7" y="149.8" width="5.7" height="2.6" fill="#a58c7a"/>
<rect x="154.9" y="104.2" width="4.9" height="3.1" fill="#ddd4ca"/>
<rect x="19.6" y="106.2" width="6.9" height="2.9" fill="#6f6158"/>
<rect x="172.3" y="85.8" width="3.4" height="2.4" fill="#d6ccc0"/>
<rect x="164.6" y="93.0" width="6.3" height="3.5" fill="#8a8580"/>
<rect x="198.7" y="92.8" width="4.8" height="3.8" fill="#9a9490"/>
<rect x="183.5" y="135.6" width="2.3" height="3.3" fill="#d6ccc0"/>
<rect x="143.1" y="170.2" width="5.4" height="2.0" fill="#bcae9f"/>
<rect x="202.8" y="161.6" width="6.9" height="3.8" fill="#b9b0a8"/>
<rect x="1.7" y="103.6" width="5.3" height="2.0" fill="#d6ccc0"/>
<rect x="73.0" y="112.5" width="2.9" height="3.7" fill="#6f6158"/>
<rect x="28.1" y="144.4" width="3.3" height="3.5" fill="#857468"/>
<rect x="236.4" y="87.6" width="2.2" height="3.5" fill="#7a685c"/>
<rect x="246.7" y="144.2" width="5.7" height="3.7" fill="#b27c68"/>
<rect x="299.7" y="113.5" width="3.3" height="3.6" fill="#b8a08a"/>
<rect x="97.3" y="93.3" width="2.0" height="3.2" fill="#d0cbc4"/>
<rect x="92.4" y="168.1" width="5.3" height="2.5" fill="#b27c68"/>
<rect x="54.7" y="130.5" width="6.8" height="2.1" fill="#c4a68e"/>
<rect x="81.7" y="101.6" width="2.4" height="2.1" fill="#8a8580"/>
<rect x="71.2" y="110.4" width="6.2" height="3.3" fill="#b27c68"/>
<rect x="208.3" y="143.5" width="3.9" height="3.3" fill="#c9b8a4"/>
<rect x="-1.8" y="122.2" width="4.9" height="1.8" fill="#c4a68e"/>
<rect x="11.5" y="84.7" width="6.9" height="2.4" fill="#968b80"/>
<rect x="119.4" y="174.4" width="5.2" height="3.0" fill="#ddd4ca"/>
<rect x="154.6" y="131.0" width="5.8" height="2.9" fill="#857468"/>
<rect x="138.2" y="129.5" width="2.2" height="2.9" fill="#8e7b6c"/>
<rect x="37.2" y="119.6" width="3.1" height="2.6" fill="#a58c7a"/>
<rect x="232.4" y="156.6" width="5.6" height="1.6" fill="#d6ccc0"/>
<rect x="42.8" y="97.9" width="2.2" height="1.6" fill="#b27c68"/>
<rect x="116.8" y="90.5" width="2.2" height="3.6" fill="#b9b0a8"/>
<rect x="309.4" y="160.7" width="5.0" height="2.1" fill="#b8a08a"/>
<rect x="56.5" y="93.0" width="3.0" height="3.1" fill="#b8a08a"/>
<rect x="18.4" y="163.0" width="6.0" height="2.5" fill="#a58c7a"/>
<rect x="176.1" y="131.8" width="3.9" height="2.7" fill="#8e7b6c"/>
<rect x="309.1" y="84.8" width="6.0" height="3.8" fill="#9a9490"/>
<rect x="277.4" y="139.6" width="4.0" height="2.9" fill="#efe9e2"/>
<rect x="37.9" y="119.6" width="5.5" height="2.4" fill="#8a8580"/>
<rect x="30.1" y="146.0" width="3.3" height="2.2" fill="#857468"/>
<rect x="233.8" y="158.9" width="5.5" height="3.8" fill="#b8a08a"/>
<rect x="195.1" y="166.8" width="3.7" height="2.1" fill="#e2ddd6"/>
<rect x="306.6" y="154.6" width="6.3" height="2.4" fill="#b9b0a8"/>
<rect x="210.5" y="138.5" width="6.4" height="3.7" fill="#c4a68e"/>
<rect x="312.7" y="164.2" width="5.3" height="3.9" fill="#7a685c"/>
<rect x="78.3" y="130.7" width="2.4" height="3.4" fill="#b27c68"/>
<rect x="15.7" y="143.6" width="3.4" height="2.3" fill="#b9b0a8"/>
<rect x="119.4" y="108.3" width="5.3" height="3.7" fill="#c2b2a0"/>
<rect x="79.2" y="117.8" width="5.5" height="2.0" fill="#c4a68e"/>
<rect x="59.0" y="136.6" width="3.7" height="1.5" fill="#c2b2a0"/>
<rect x="214.0" y="143.5" width="5.2" height="2.7" fill="#6f6158"/>
<rect x="198.1" y="88.4" width="5.6" height="2.1" fill="#c9b8a4"/>
<rect x="52.4" y="127.4" width="4.4" height="3.2" fill="#c4a68e"/>
<rect x="96.7" y="121.0" width="3.6" height="3.4" fill="#bcae9f"/>
<rect x="166.7" y="142.6" width="6.6" height="3.1" fill="#ddd4ca"/>
<rect x="35.8" y="140.7" width="5.4" height="2.6" fill="#b8a08a"/>
<rect x="168.9" y="101.1" width="5.4" height="2.4" fill="#b27c68"/>
<rect x="14.5" y="91.6" width="2.2" height="2.6" fill="#c4a68e"/>
<rect x="212.8" y="135.7" width="6.3" height="2.4" fill="#a38a77"/>
<rect x="14.2" y="145.5" width="4.4" height="1.8" fill="#d0cbc4"/>
<rect x="47.2" y="88.3" width="4.7" height="1.8" fill="#b9b0a8"/>
<rect x="218.1" y="166.3" width="6.6" height="2.4" fill="#b27c68"/>
<rect x="226.9" y="168.6" width="4.8" height="3.0" fill="#8e7b6c"/>
<rect x="210.7" y="177.5" width="3.4" height="3.4" fill="#b27c68"/>
<rect x="130.5" y="102.7" width="4.2" height="3.6" fill="#c9b8a4"/>
<rect x="186.7" y="131.9" width="4.6" height="1.6" fill="#7a685c"/>
<rect x="109.9" y="117.8" width="2.5" height="3.9" fill="#b3a699"/>
<rect x="19.4" y="141.6" width="4.1" height="2.2" fill="#efe9e2"/>
<rect x="149.4" y="121.0" width="4.4" height="2.4" fill="#a38a77"/>
<rect x="10.7" y="121.2" width="2.4" height="3.2" fill="#7a685c"/>
<rect x="136.8" y="137.7" width="2.5" height="2.1" fill="#7a685c"/>
<rect x="136.9" y="110.9" width="3.8" height="3.7" fill="#ddd4ca"/>
<rect x="226.9" y="82.3" width="2.8" height="1.9" fill="#b8a08a"/>
<rect x="39.1" y="169.3" width="5.7" height="1.7" fill="#efe9e2"/>
<rect x="45.1" y="114.6" width="2.9" height="4.0" fill="#b3a699"/>
<rect x="292.6" y="114.8" width="2.7" height="3.5" fill="#a38a77"/>
<rect x="171.2" y="177.6" width="3.7" height="2.5" fill="#ddd4ca"/>
<rect x="258.6" y="171.3" width="2.9" height="2.7" fill="#b3a699"/>
<rect x="286.6" y="102.4" width="5.2" height="1.7" fill="#b8a08a"/>
<rect x="296.8" y="142.6" width="3.6" height="3.3" fill="#8e7b6c"/>
<rect x="254.8" y="105.4" width="6.2" height="2.8" fill="#e2ddd6"/>
<rect x="270.2" y="106.4" width="4.8" height="2.3" fill="#b8a08a"/>
<rect x="184.6" y="107.7" width="3.2" height="3.2" fill="#8a8580"/>
<rect x="293.0" y="103.9" width="2.3" height="2.8" fill="#857468"/>
<rect x="49.7" y="163.0" width="4.5" height="3.1" fill="#cfb49b"/>
<rect x="58.9" y="89.6" width="3.1" height="3.0" fill="#857468"/>
<rect x="36.8" y="150.9" width="5.0" height="3.0" fill="#b9b0a8"/>
<rect x="247.5" y="158.7" width="4.2" height="2.1" fill="#cfb49b"/>
<rect x="284.8" y="158.6" width="2.6" height="2.1" fill="#bcae9f"/>
<rect x="107.6" y="165.0" width="6.0" height="3.2" fill="#b3a699"/>
<rect x="118.4" y="145.0" width="3.3" height="2.3" fill="#a38a77"/>
<rect x="303.3" y="99.0" width="6.6" height="3.0" fill="#b27c68"/>
<rect x="33.1" y="95.9" width="5.2" height="3.7" fill="#d6ccc0"/>
<rect x="165.3" y="158.2" width="4.4" height="1.7" fill="#d6ccc0"/>
<rect x="107.8" y="128.4" width="3.0" height="2.2" fill="#9a9490"/>
<rect x="251.5" y="111.9" width="4.4" height="2.0" fill="#d0cbc4"/>
<rect x="250.4" y="114.0" width="3.0" height="1.8" fill="#d6ccc0"/>
<rect x="22.2" y="155.4" width="4.8" height="2.1" fill="#bcae9f"/>
<rect x="185.8" y="113.3" width="2.2" height="2.6" fill="#cfb49b"/>
<rect x="77.7" y="95.1" width="5.1" height="3.4" fill="#efe9e2"/>
<rect x="178.1" y="94.3" width="6.0" height="1.7" fill="#e2ddd6"/>
<rect x="204.0" y="131.4" width="2.9" height="3.0" fill="#b3a699"/>
<rect x="310.4" y="138.6" width="6.5" height="3.9" fill="#bcae9f"/>
<rect x="200.7" y="128.4" width="5.9" height="3.2" fill="#b8a08a"/>
<rect x="160.6" y="167.4" width="6.0" height="3.4" fill="#8a8580"/>
<rect x="188.7" y="162.5" width="5.8" height="2.6" fill="#7a685c"/>
<rect x="232.3" y="166.4" width="6.8" height="3.4" fill="#a38a77"/>
<rect x="135.2" y="127.6" width="4.8" height="2.2" fill="#b9b0a8"/>
<rect x="101.1" y="164.9" width="6.0" height="1.5" fill="#e2ddd6"/>
<rect x="115.9" y="170.7" width="3.1" height="2.4" fill="#b27c68"/>
<rect x="239.7" y="139.9" width="5.3" height="2.5" fill="#6f6158"/>
<rect x="203.4" y="123.9" width="2.2" height="1.6" fill="#bcae9f"/>
<rect x="29.8" y="95.5" width="3.0" height="2.8" fill="#d0cbc4"/>
<rect x="151.2" y="176.2" width="3.1" height="3.1" fill="#b27c68"/>
<rect x="46.3" y="162.9" width="6.9" height="1.9" fill="#c9b8a4"/>
<rect x="293.1" y="102.4" width="2.6" height="1.9" fill="#857468"/>
<rect x="284.8" y="90.9" width="2.0" height="3.6" fill="#cfb49b"/>
<rect x="24.8" y="109.9" width="6.2" height="2.8" fill="#cfb49b"/>
<rect x="134.5" y="126.8" width="4.3" height="2.4" fill="#bcae9f"/>
<rect x="156.3" y="175.2" width="6.4" height="3.9" fill="#8a8580"/>
<rect x="42.0" y="86.4" width="3.9" height="2.4" fill="#8e7b6c"/>
<rect x="170.4" y="169.7" width="5.3" height="2.1" fill="#cfb49b"/>
<rect x="5.6" y="113.0" width="3.8" height="2.3" fill="#7a685c"/>
<rect x="14.7" y="149.3" width="5.1" height="2.3" fill="#b8a08a"/>
<rect x="29.4" y="83.5" width="5.8" height="2.1" fill="#d6ccc0"/>
<rect x="59.4" y="119.1" width="4.4" height="1.7" fill="#b3a699"/>
<rect x="10.0" y="129.9" width="2.4" height="1.8" fill="#c4a68e"/>
<rect x="292.1" y="88.3" width="3.5" height="2.4" fill="#6f6158"/>
<rect x="293.3" y="98.8" width="7.0" height="2.0" fill="#857468"/>
<rect x="34.4" y="111.7" width="4.2" height="3.6" fill="#efe9e2"/>
<rect x="97.1" y="90.6" width="4.1" height="3.5" fill="#8e7b6c"/>
<rect x="12.1" y="110.0" width="3.5" height="2.5" fill="#d6ccc0"/>
<rect x="184.6" y="162.3" width="2.4" height="2.1" fill="#b9b0a8"/>
<rect x="103.9" y="104.3" width="2.3" height="1.6" fill="#9a9490"/>
<rect x="81.7" y="110.6" width="6.6" height="2.8" fill="#cfb49b"/>
<rect x="1.3" y="148.1" width="3.7" height="2.7" fill="#a58c7a"/>
<rect x="25.4" y="143.0" width="2.0" height="3.4" fill="#b8a08a"/>
<rect x="32.4" y="84.9" width="4.4" height="1.5" fill="#c2b2a0"/>
<rect x="110.2" y="125.5" width="4.6" height="1.6" fill="#a38a77"/>
<rect x="123.4" y="163.8" width="5.3" height="1.7" fill="#a58c7a"/>
<rect x="234.1" y="131.3" width="6.0" height="3.6" fill="#7a685c"/>
<rect x="209.6" y="127.2" width="4.7" height="2.9" fill="#6f6158"/>
<rect x="159.5" y="178.9" width="6.6" height="3.6" fill="#b9b0a8"/>
<rect x="166.2" y="136.8" width="6.4" height="3.0" fill="#7a685c"/>
<rect x="115.0" y="174.9" width="2.8" height="2.9" fill="#7a685c"/>
<rect x="280.3" y="156.5" width="2.6" height="3.1" fill="#9a9490"/>
<rect x="-1.8" y="104.0" width="5.7" height="3.7" fill="#c4a68e"/>
<rect x="300.5" y="122.1" width="4.3" height="3.8" fill="#d0cbc4"/>
<rect x="292.3" y="133.7" width="2.2" height="2.7" fill="#968b80"/>
<rect x="50.1" y="138.8" width="3.9" height="2.7" fill="#bcae9f"/>
<rect x="35.8" y="136.2" width="4.5" height="2.0" fill="#a58c7a"/>
<rect x="126.1" y="128.3" width="4.2" height="3.0" fill="#c2b2a0"/>
<rect x="291.3" y="170.9" width="6.1" height="2.1" fill="#857468"/>
<rect x="58.8" y="171.5" width="4.4" height="3.3" fill="#efe9e2"/>
<rect x="310.4" y="112.6" width="2.1" height="1.7" fill="#ddd4ca"/>
<rect x="309.9" y="175.3" width="6.7" height="3.1" fill="#a38a77"/>
<rect x="72.8" y="159.1" width="6.5" height="2.2" fill="#a38a77"/>
<rect x="136.9" y="109.2" width="6.5" height="3.0" fill="#7a685c"/>
<rect x="232.7" y="157.2" width="4.5" height="2.2" fill="#6f6158"/>
<rect x="187.0" y="150.6" width="5.7" height="1.8" fill="#c4a68e"/>
<rect x="303.8" y="102.7" width="3.1" height="3.9" fill="#8e7b6c"/>
<rect x="289.3" y="164.4" width="6.2" height="3.6" fill="#d0cbc4"/>
<rect x="211.7" y="168.5" width="6.7" height="3.4" fill="#8e7b6c"/>
<rect x="9.8" y="88.0" width="5.7" height="2.7" fill="#d0cbc4"/>
<rect x="310.1" y="125.8" width="5.4" height="3.2" fill="#8a8580"/>
<rect x="133.9" y="87.8" width="6.9" height="3.4" fill="#a58c7a"/>
<rect x="225.4" y="160.7" width="4.3" height="2.0" fill="#bcae9f"/>
<rect x="136.2" y="162.6" width="5.6" height="1.9" fill="#a58c7a"/>
<rect x="287.4" y="163.9" width="2.7" height="3.9" fill="#8a8580"/>
<rect x="183.3" y="95.1" width="6.0" height="3.2" fill="#8a8580"/>
<rect x="189.0" y="153.7" width="5.1" height="2.4" fill="#968b80"/>
<rect x="198.7" y="116.2" width="6.9" height="3.6" fill="#e2ddd6"/>
<rect x="284.8" y="147.5" width="5.0" height="3.5" fill="#bcae9f"/>
<rect x="141.7" y="83.4" width="5.1" height="3.1" fill="#b9b0a8"/>
<rect x="112.0" y="88.1" width="5.2" height="2.3" fill="#c9b8a4"/>
<rect x="308.3" y="140.2" width="6.3" height="3.4" fill="#ddd4ca"/>
<rect x="142.5" y="169.9" width="4.0" height="1.5" fill="#968b80"/>
<rect x="286.8" y="87.9" width="4.8" height="2.3" fill="#d6ccc0"/>
<rect x="215.0" y="91.5" width="3.5" height="2.5" fill="#a38a77"/>
<rect x="25.1" y="132.0" width="3.8" height="1.6" fill="#b9b0a8"/>
<rect x="305.8" y="101.2" width="4.7" height="2.1" fill="#c2b2a0"/>
<rect x="161.9" y="122.8" width="5.4" height="2.3" fill="#6f6158"/>
<rect x="189.8" y="150.4" width="3.8" height="2.5" fill="#b3a699"/>
<rect x="297.8" y="158.0" width="6.0" height="4.0" fill="#7a685c"/>
<rect x="270.7" y="154.6" width="2.3" height="1.8" fill="#a38a77"/>
<rect x="262.3" y="179.0" width="5.9" height="1.9" fill="#d0cbc4"/>
<rect x="30.4" y="125.0" width="4.3" height="2.5" fill="#968b80"/>
<rect x="157.8" y="108.3" width="6.9" height="2.5" fill="#d6ccc0"/>
<rect x="228.9" y="84.2" width="2.5" height="1.9" fill="#bcae9f"/>
<rect x="188.5" y="113.3" width="5.3" height="3.8" fill="#ddd4ca"/>
<rect x="277.8" y="172.3" width="3.3" height="3.6" fill="#d6ccc0"/>
<rect x="186.3" y="161.4" width="4.4" height="2.8" fill="#8a8580"/>
<rect x="36.2" y="152.3" width="4.6" height="1.5" fill="#7a685c"/>
<rect x="15.3" y="168.9" width="6.1" height="2.7" fill="#bcae9f"/>
<rect x="153.0" y="126.0" width="3.3" height="3.1" fill="#c2b2a0"/>
<rect x="289.3" y="148.5" width="2.6" height="3.3" fill="#8a8580"/>
<rect x="127.4" y="152.5" width="6.2" height="1.8" fill="#6f6158"/>
<rect x="162.7" y="109.0" width="3.4" height="3.7" fill="#cfb49b"/>
<rect x="23.1" y="120.8" width="3.0" height="3.8" fill="#a38a77"/>
<rect x="301.4" y="155.7" width="6.9" height="3.0" fill="#8e7b6c"/>
<rect x="145.8" y="170.8" width="5.5" height="2.3" fill="#a58c7a"/>
<rect x="298.9" y="111.0" width="3.2" height="2.1" fill="#7a685c"/>
<rect x="264.7" y="97.7" width="4.9" height="2.5" fill="#e2ddd6"/>
<rect x="297.5" y="112.7" width="6.1" height="2.8" fill="#a38a77"/>
<rect x="142.9" y="116.8" width="5.1" height="2.8" fill="#857468"/>
<rect x="218.6" y="104.8" width="5.4" height="3.6" fill="#ddd4ca"/>
<rect x="73.5" y="97.3" width="6.8" height="3.8" fill="#ddd4ca"/>
<rect x="167.5" y="87.0" width="3.8" height="3.8" fill="#d6ccc0"/>
<rect x="50.1" y="148.9" width="2.0" height="3.8" fill="#d6ccc0"/>
<rect x="270.8" y="86.5" width="6.7" height="2.1" fill="#efe9e2"/>
<rect x="67.5" y="117.2" width="3.5" height="1.8" fill="#a38a77"/>
<rect x="252.1" y="107.7" width="6.1" height="2.1" fill="#a58c7a"/>
<rect x="257.2" y="108.0" width="4.7" height="2.4" fill="#857468"/>
<rect x="222.6" y="174.9" width="5.5" height="2.1" fill="#ddd4ca"/>
<rect x="35.6" y="165.3" width="3.1" height="4.0" fill="#6f6158"/>
<rect x="216.0" y="122.8" width="2.2" height="1.8" fill="#b27c68"/>
<rect x="265.2" y="168.4" width="3.9" height="4.0" fill="#b8a08a"/>
<rect x="15.9" y="126.2" width="4.8" height="4.0" fill="#857468"/>
<rect x="36.1" y="90.2" width="6.0" height="3.0" fill="#c9b8a4"/>
<rect x="128.0" y="175.8" width="2.1" height="2.2" fill="#c2b2a0"/>
<rect x="184.2" y="145.1" width="6.0" height="3.6" fill="#7a685c"/>
<rect x="181.5" y="126.2" width="4.0" height="2.8" fill="#b27c68"/>
<rect x="271.0" y="148.8" width="6.0" height="2.7" fill="#b8a08a"/>
<rect x="260.7" y="163.3" width="6.0" height="2.0" fill="#cfb49b"/>
<rect x="59.9" y="125.6" width="4.3" height="2.6" fill="#7a685c"/>
<rect x="87.8" y="124.3" width="6.3" height="3.9" fill="#ddd4ca"/>
<rect x="275.8" y="172.5" width="3.4" height="3.0" fill="#d6ccc0"/>
<rect x="309.1" y="169.0" width="4.9" height="3.0" fill="#e2ddd6"/>
<rect x="176.4" y="88.4" width="4.3" height="1.7" fill="#9a9490"/>
<rect x="148.1" y="102.4" width="2.4" height="2.4" fill="#6f6158"/>
<rect x="135.8" y="87.4" width="5.9" height="2.9" fill="#9a9490"/>
<rect x="257.0" y="148.6" width="5.6" height="1.8" fill="#6f6158"/>
<rect x="21.1" y="123.6" width="2.7" height="3.6" fill="#b9b0a8"/>
<rect x="19.3" y="125.6" width="5.4" height="3.6" fill="#b9b0a8"/>
<rect x="181.4" y="145.3" width="5.2" height="1.6" fill="#ddd4ca"/>
<rect x="106.1" y="91.4" width="5.7" height="1.8" fill="#d6ccc0"/>
<rect x="78.3" y="86.6" width="4.8" height="2.5" fill="#6f6158"/>
<rect x="61.5" y="102.1" width="2.1" height="1.6" fill="#a58c7a"/>
<rect x="44.7" y="83.5" width="4.9" height="2.1" fill="#b9b0a8"/>
<rect x="59.5" y="177.8" width="4.6" height="3.3" fill="#e2ddd6"/>
<rect x="87.8" y="156.4" width="3.3" height="3.7" fill="#efe9e2"/>
<rect x="63.0" y="135.9" width="2.8" height="2.9" fill="#c2b2a0"/>
<rect x="77.6" y="145.4" width="3.6" height="1.8" fill="#8e7b6c"/>
<rect x="180.6" y="106.3" width="2.3" height="2.0" fill="#efe9e2"/>
<rect x="41.0" y="156.0" width="3.4" height="2.4" fill="#c2b2a0"/>
<rect x="258.7" y="163.8" width="6.9" height="3.0" fill="#857468"/>
<rect x="193.3" y="139.1" width="3.6" height="2.4" fill="#d0cbc4"/>
<rect x="86.0" y="179.0" width="4.0" height="1.9" fill="#857468"/>
<rect x="206.8" y="105.8" width="2.6" height="1.8" fill="#e2ddd6"/>
<rect x="89.6" y="169.3" width="6.1" height="1.6" fill="#b8a08a"/>
<rect x="172.8" y="136.2" width="3.2" height="1.8" fill="#bcae9f"/>
<rect x="95.0" y="92.4" width="6.7" height="1.6" fill="#a58c7a"/>
<rect x="160.3" y="126.5" width="2.9" height="3.5" fill="#d6ccc0"/>
<rect x="216.0" y="148.9" width="6.1" height="1.5" fill="#efe9e2"/>
<rect x="21.3" y="133.3" width="2.9" height="3.1" fill="#b9b0a8"/>
<rect x="248.2" y="158.8" width="4.4" height="1.9" fill="#6f6158"/>
<rect x="143.1" y="149.5" width="3.1" height="3.3" fill="#d0cbc4"/>
<rect x="291.4" y="111.3" width="3.3" height="3.4" fill="#ddd4ca"/>
<rect x="87.4" y="118.5" width="4.2" height="3.3" fill="#e2ddd6"/>
<rect x="54.7" y="175.5" width="6.9" height="2.7" fill="#968b80"/>
<rect x="192.9" y="119.7" width="2.4" height="1.5" fill="#d0cbc4"/>
<rect x="234.6" y="165.5" width="3.1" height="3.4" fill="#c9b8a4"/>
<rect x="187.5" y="144.2" width="4.7" height="3.2" fill="#e2ddd6"/>
<rect x="81.2" y="166.3" width="4.7" height="1.6" fill="#c9b8a4"/>
<rect x="303.5" y="129.1" width="2.8" height="2.8" fill="#cfb49b"/>
<rect x="90.5" y="84.7" width="2.8" height="3.5" fill="#b8a08a"/>
<rect x="49.9" y="132.7" width="7.0" height="1.7" fill="#bcae9f"/>
<rect x="-2.1" y="177.8" width="6.5" height="2.6" fill="#b27c68"/>
<rect x="244.9" y="177.2" width="6.3" height="2.4" fill="#b3a699"/>
<rect x="271.7" y="93.2" width="4.7" height="2.7" fill="#e2ddd6"/>
<rect x="-2.9" y="137.3" width="4.1" height="2.0" fill="#b9b0a8"/>
<rect x="212.4" y="115.4" width="4.6" height="3.0" fill="#b27c68"/>
<rect x="71.4" y="115.8" width="4.5" height="2.6" fill="#ddd4ca"/>
<rect x="134.7" y="123.4" width="5.0" height="2.2" fill="#b9b0a8"/>
<rect x="198.3" y="144.3" width="6.7" height="1.9" fill="#b9b0a8"/>
<rect x="305.7" y="135.5" width="3.7" height="2.1" fill="#8a8580"/>
<rect x="308.9" y="130.7" width="7.0" height="3.0" fill="#b9b0a8"/>
<rect x="79.8" y="167.3" width="4.2" height="2.5" fill="#d0cbc4"/>
<rect x="41.7" y="171.6" width="4.2" height="2.1" fill="#7a685c"/>
<rect x="231.5" y="91.1" width="6.9" height="1.5" fill="#8e7b6c"/>
<rect x="273.0" y="171.0" width="6.8" height="3.5" fill="#c9b8a4"/>
<rect x="29.4" y="127.2" width="6.8" height="2.3" fill="#efe9e2"/>
<rect x="13.0" y="112.9" width="4.5" height="3.9" fill="#b27c68"/>
<rect x="227.1" y="105.5" width="2.5" height="1.6" fill="#b9b0a8"/>
<rect x="72.1" y="118.5" width="4.4" height="1.8" fill="#9a9490"/>
<rect x="149.1" y="101.6" width="4.5" height="3.5" fill="#c4a68e"/>
<rect x="69.6" y="87.7" width="5.1" height="1.6" fill="#968b80"/>
<rect x="156.2" y="149.4" width="3.1" height="3.2" fill="#d0cbc4"/>
<rect x="79.4" y="168.3" width="2.2" height="2.1" fill="#c9b8a4"/>
<rect x="140.3" y="131.9" width="2.9" height="1.7" fill="#b27c68"/>
<rect x="310.2" y="165.8" width="2.5" height="1.6" fill="#c2b2a0"/>
<rect x="58.1" y="107.8" width="5.8" height="2.6" fill="#7a685c"/>
<rect x="142.5" y="166.6" width="4.8" height="2.1" fill="#8a8580"/>
<rect x="166.6" y="150.9" width="6.2" height="3.5" fill="#857468"/>
<rect x="2.0" y="161.7" width="6.3" height="1.7" fill="#857468"/>
<rect x="54.5" y="137.0" width="3.4" height="3.9" fill="#9a9490"/>
<rect x="287.8" y="153.9" width="5.4" height="2.1" fill="#c2b2a0"/>
<rect x="152.0" y="121.1" width="2.6" height="3.1" fill="#968b80"/>
<rect x="214.0" y="113.1" width="4.6" height="2.4" fill="#a58c7a"/>
<rect x="65.4" y="116.7" width="6.0" height="2.3" fill="#7a685c"/>
<rect x="141.3" y="139.1" width="6.4" height="1.5" fill="#968b80"/>
<rect x="185.4" y="124.2" width="5.4" height="2.6" fill="#cfb49b"/>
<rect x="170.7" y="92.3" width="4.5" height="2.1" fill="#b3a699"/>
<rect x="132.0" y="140.4" width="2.4" height="2.4" fill="#d0cbc4"/>
<rect x="195.6" y="93.6" width="3.1" height="1.8" fill="#c2b2a0"/>
<rect x="39.3" y="136.6" width="3.5" height="3.3" fill="#c9b8a4"/>
<rect x="206.1" y="86.5" width="5.8" height="1.7" fill="#857468"/>
<rect x="2.2" y="131.4" width="6.0" height="2.7" fill="#c2b2a0"/>
<rect x="249.7" y="141.2" width="4.6" height="2.0" fill="#d6ccc0"/>
<rect x="240.0" y="110.2" width="5.9" height="2.7" fill="#9a9490"/>
<rect x="197.6" y="137.3" width="5.2" height="2.5" fill="#e2ddd6"/>
<rect x="112.1" y="101.6" width="2.4" height="3.7" fill="#8a8580"/>
<rect x="283.0" y="133.7" width="4.9" height="1.7" fill="#b3a699"/>
<rect x="74.7" y="142.0" width="4.7" height="3.0" fill="#9a9490"/>
<rect x="281.5" y="98.9" width="6.5" height="1.5" fill="#7a685c"/>
<rect x="97.1" y="112.7" width="4.2" height="2.6" fill="#b27c68"/>
<rect x="281.1" y="84.1" width="4.8" height="3.7" fill="#d0cbc4"/>
<rect x="304.0" y="126.0" width="4.2" height="3.1" fill="#968b80"/>
<rect x="62.0" y="108.3" width="3.2" height="3.5" fill="#9a9490"/>
<rect x="111.4" y="83.0" width="3.4" height="2.7" fill="#7a685c"/>
<rect x="19.8" y="179.7" width="2.4" height="3.2" fill="#c2b2a0"/>
<rect x="203.5" y="97.2" width="6.7" height="2.4" fill="#b27c68"/>
<rect x="209.6" y="162.7" width="6.2" height="1.9" fill="#6f6158"/>
<rect x="282.4" y="156.1" width="3.1" height="2.3" fill="#b3a699"/>
<rect x="206.4" y="173.2" width="4.3" height="3.4" fill="#d0cbc4"/>
<rect x="186.8" y="146.4" width="4.9" height="2.7" fill="#a58c7a"/>
<rect x="225.0" y="137.7" width="6.4" height="1.9" fill="#b3a699"/>
<rect x="233.5" y="88.3" width="6.3" height="2.4" fill="#c9b8a4"/>
<rect x="10.8" y="174.5" width="4.3" height="2.0" fill="#6f6158"/>
<rect x="195.1" y="165.8" width="4.8" height="2.1" fill="#c9b8a4"/>
<rect x="72.7" y="86.2" width="4.8" height="2.5" fill="#c4a68e"/>
<rect x="56.5" y="120.1" width="5.2" height="2.6" fill="#8a8580"/>
<rect x="123.6" y="170.4" width="5.0" height="3.1" fill="#b3a699"/>
<rect x="211.8" y="179.1" width="5.7" height="3.3" fill="#ddd4ca"/>
<rect x="297.8" y="148.9" width="2.9" height="3.3" fill="#7a685c"/>
<rect x="91.5" y="118.1" width="3.2" height="2.3" fill="#857468"/>
<rect x="46.9" y="121.2" width="2.5" height="3.5" fill="#cfb49b"/>
<rect x="79.6" y="99.3" width="6.6" height="2.0" fill="#a38a77"/>
<rect x="219.7" y="164.4" width="6.6" height="3.8" fill="#9a9490"/>
<rect x="49.4" y="126.9" width="2.1" height="2.9" fill="#a58c7a"/>
<rect x="193.2" y="82.7" width="5.8" height="1.7" fill="#9a9490"/>
<rect x="-0.9" y="153.0" width="2.3" height="1.7" fill="#efe9e2"/>
<rect x="97.2" y="149.4" width="2.8" height="2.9" fill="#bcae9f"/>
<rect x="72.9" y="133.7" width="6.3" height="2.3" fill="#968b80"/>
<rect x="73.0" y="134.4" width="5.4" height="3.9" fill="#d6ccc0"/>
<rect x="257.2" y="144.0" width="5.9" height="3.6" fill="#8a8580"/>
<rect x="209.8" y="91.1" width="2.3" height="1.9" fill="#b3a699"/>
<rect x="69.9" y="123.1" width="5.5" height="2.4" fill="#efe9e2"/>
<rect x="162.3" y="156.3" width="2.8" height="1.7" fill="#c9b8a4"/>
<rect x="21.2" y="95.7" width="4.5" height="2.2" fill="#6f6158"/>
<rect x="156.5" y="133.3" width="3.9" height="1.6" fill="#8e7b6c"/>
<rect x="119.5" y="163.0" width="2.5" height="2.6" fill="#e2ddd6"/>
<rect x="272.7" y="151.7" width="4.3" height="3.6" fill="#c4a68e"/>
<rect x="313.0" y="135.3" width="5.7" height="3.0" fill="#c9b8a4"/>
<rect x="29.0" y="174.0" width="4.3" height="4.0" fill="#e2ddd6"/>
<rect x="9.3" y="110.8" width="2.6" height="3.4" fill="#c9b8a4"/>
<rect x="98.3" y="105.5" width="3.6" height="3.4" fill="#968b80"/>
<rect x="120.4" y="82.2" width="2.3" height="1.6" fill="#b3a699"/>
<rect x="168.5" y="174.2" width="4.7" height="3.2" fill="#a38a77"/>
<rect x="179.2" y="160.0" width="5.1" height="1.7" fill="#968b80"/>
<rect x="138.5" y="148.2" width="6.1" height="2.7" fill="#857468"/>
<rect x="162.8" y="87.4" width="3.2" height="3.3" fill="#b8a08a"/>
<rect x="305.2" y="177.0" width="5.8" height="2.3" fill="#6f6158"/>
<rect x="240.4" y="176.9" width="3.9" height="2.5" fill="#bcae9f"/>
<rect x="4.1" y="127.9" width="3.4" height="2.9" fill="#7a685c"/>
<rect x="269.0" y="131.7" width="5.5" height="1.7" fill="#efe9e2"/>
<rect x="10.4" y="161.3" width="5.9" height="2.2" fill="#8e7b6c"/>
<rect x="126.5" y="99.5" width="3.0" height="3.5" fill="#6f6158"/>
<rect x="299.2" y="164.7" width="5.6" height="2.5" fill="#b8a08a"/>
<rect x="146.1" y="92.7" width="6.3" height="1.9" fill="#ddd4ca"/>
<rect x="48.6" y="108.2" width="2.9" height="1.9" fill="#8e7b6c"/>
<rect x="282.5" y="87.9" width="3.1" height="3.3" fill="#efe9e2"/>
<rect x="130.2" y="126.7" width="6.6" height="3.1" fill="#bcae9f"/>
<rect x="301.5" y="150.5" width="6.0" height="3.9" fill="#b3a699"/>
<rect x="228.1" y="155.3" width="5.0" height="1.8" fill="#b3a699"/>
<rect x="51.6" y="160.2" width="5.1" height="3.1" fill="#d6ccc0"/>
<rect x="309.2" y="153.4" width="4.8" height="3.1" fill="#a58c7a"/>
<rect x="127.0" y="165.6" width="5.1" height="2.1" fill="#d6ccc0"/>
<rect x="239.7" y="166.6" width="3.9" height="3.5" fill="#a58c7a"/>
<rect x="234.0" y="83.0" width="2.9" height="2.3" fill="#8e7b6c"/>
<rect x="230.3" y="118.8" width="3.1" height="2.6" fill="#b8a08a"/>
<rect x="20.2" y="165.7" width="6.9" height="3.8" fill="#d0cbc4"/>
<rect x="254.5" y="138.4" width="5.7" height="2.9" fill="#bcae9f"/>
<rect x="155.4" y="177.7" width="4.3" height="2.6" fill="#b27c68"/>
<rect x="305.8" y="114.8" width="4.2" height="1.8" fill="#bcae9f"/>
<rect x="280.2" y="168.1" width="3.7" height="1.6" fill="#b9b0a8"/>
<rect x="142.7" y="173.0" width="5.3" height="3.9" fill="#6f6158"/>
<rect x="236.8" y="98.5" width="5.3" height="2.6" fill="#ddd4ca"/>
<rect x="266.2" y="177.2" width="6.6" height="2.2" fill="#d6ccc0"/>
<rect x="97.6" y="87.4" width="5.9" height="3.4" fill="#7a685c"/>
<rect x="245.2" y="88.2" width="3.4" height="2.7" fill="#b3a699"/>
<rect x="147.3" y="166.4" width="5.2" height="2.4" fill="#9a9490"/>
<rect x="12.0" y="84.8" width="5.0" height="3.0" fill="#e2ddd6"/>
<rect x="309.8" y="130.0" width="4.2" height="1.7" fill="#7a685c"/>
<rect x="66.7" y="97.3" width="4.4" height="2.4" fill="#d0cbc4"/>
<rect x="310.1" y="178.2" width="3.0" height="2.6" fill="#cfb49b"/>
<rect x="232.4" y="102.0" width="5.0" height="3.3" fill="#b27c68"/>
<rect x="164.3" y="171.4" width="6.9" height="3.5" fill="#cfb49b"/>
<rect x="-2.6" y="116.5" width="2.7" height="3.9" fill="#a38a77"/>
<rect x="209.4" y="175.2" width="5.8" height="2.8" fill="#e2ddd6"/>
<rect x="152.0" y="118.7" width="7.0" height="2.1" fill="#a58c7a"/>
<rect x="272.4" y="111.2" width="2.0" height="4.0" fill="#a58c7a"/>
<rect x="173.0" y="102.7" width="6.2" height="3.8" fill="#b3a699"/>
<rect x="146.0" y="145.4" width="2.1" height="3.8" fill="#968b80"/>
<rect x="26.3" y="142.5" width="5.1" height="3.3" fill="#bcae9f"/>
<rect x="246.0" y="174.3" width="6.6" height="2.8" fill="#d6ccc0"/>
<rect x="88.5" y="94.0" width="2.4" height="2.0" fill="#c9b8a4"/>
<rect x="175.5" y="98.8" width="2.7" height="1.7" fill="#9a9490"/>
<rect x="122.6" y="152.7" width="5.1" height="2.5" fill="#a38a77"/>
<rect x="34.0" y="92.1" width="6.6" height="2.0" fill="#b9b0a8"/>
<rect x="178.4" y="103.2" width="2.7" height="3.5" fill="#e2ddd6"/>
<rect x="216.5" y="118.4" width="5.0" height="3.5" fill="#d6ccc0"/>
<rect x="23.0" y="143.4" width="2.3" height="3.0" fill="#bcae9f"/>
<rect x="58.4" y="126.9" width="2.1" height="2.8" fill="#d6ccc0"/>
<rect x="96.2" y="121.0" width="5.5" height="3.0" fill="#c9b8a4"/>
<rect x="180.9" y="112.5" width="5.5" height="1.6" fill="#b9b0a8"/>
<rect x="138.3" y="98.9" width="3.5" height="3.1" fill="#a38a77"/>
<rect x="200.2" y="124.2" width="5.5" height="3.9" fill="#b27c68"/>
<rect x="140.6" y="176.2" width="2.9" height="1.9" fill="#e2ddd6"/>
<rect x="76.6" y="143.7" width="4.9" height="1.5" fill="#ddd4ca"/>
<rect x="71.9" y="84.7" width="5.5" height="3.7" fill="#8a8580"/>
<rect x="267.1" y="102.8" width="3.5" height="3.0" fill="#b9b0a8"/>
<rect x="156.5" y="108.1" width="6.7" height="2.5" fill="#c9b8a4"/>
<rect x="22.8" y="87.6" width="4.9" height="1.7" fill="#7a685c"/>
<rect x="300.0" y="96.3" width="6.8" height="3.1" fill="#c2b2a0"/>
<rect x="130.2" y="123.9" width="2.9" height="3.4" fill="#857468"/>
<rect x="148.2" y="82.5" width="5.0" height="2.3" fill="#bcae9f"/>
<rect x="276.8" y="131.0" width="6.0" height="2.4" fill="#968b80"/>
<rect x="242.6" y="116.5" width="5.7" height="2.4" fill="#b8a08a"/>
<rect x="253.9" y="123.9" width="3.5" height="1.6" fill="#c9b8a4"/>
<rect x="153.7" y="161.3" width="5.0" height="3.8" fill="#cfb49b"/>
<rect x="215.5" y="154.6" width="5.5" height="3.8" fill="#b9b0a8"/>
<rect x="253.2" y="172.7" width="4.3" height="2.4" fill="#6f6158"/>
<rect x="91.1" y="100.6" width="4.5" height="2.3" fill="#8a8580"/>
<rect x="112.0" y="130.6" width="3.6" height="1.9" fill="#a58c7a"/>
<rect x="153.9" y="152.7" width="3.7" height="3.8" fill="#a58c7a"/>
<rect x="304.6" y="91.0" width="5.1" height="3.0" fill="#b9b0a8"/>
<rect x="47.2" y="143.5" width="3.3" height="3.2" fill="#9a9490"/>
<rect x="78.4" y="165.4" width="4.4" height="3.9" fill="#d6ccc0"/>
<rect x="308.9" y="85.6" width="3.9" height="3.0" fill="#857468"/>
<rect x="184.3" y="170.0" width="2.8" height="2.1" fill="#efe9e2"/>
<rect x="288.8" y="90.9" width="6.8" height="2.2" fill="#b9b0a8"/>
<rect x="4.3" y="129.7" width="4.5" height="2.3" fill="#7a685c"/>
<rect x="246.9" y="177.7" width="2.5" height="3.1" fill="#c4a68e"/>
<rect x="299.2" y="153.1" width="3.4" height="1.8" fill="#b8a08a"/>
<rect x="86.6" y="148.6" width="5.1" height="2.4" fill="#8e7b6c"/>
<rect x="23.5" y="149.2" width="6.1" height="1.8" fill="#6f6158"/>
<rect x="6.7" y="108.8" width="2.4" height="3.2" fill="#d6ccc0"/>
<rect x="3.5" y="167.6" width="5.9" height="3.3" fill="#968b80"/>
<rect x="42.9" y="171.2" width="4.5" height="2.8" fill="#b27c68"/>
<rect x="293.2" y="165.7" width="4.7" height="4.0" fill="#8e7b6c"/>
<rect x="246.1" y="137.3" width="5.3" height="1.6" fill="#ddd4ca"/>
<rect x="21.3" y="113.4" width="5.4" height="3.7" fill="#8e7b6c"/>
<rect x="95.7" y="122.6" width="3.7" height="1.9" fill="#d6ccc0"/>
<rect x="-1.3" y="88.6" width="6.1" height="3.0" fill="#7a685c"/>
<rect x="159.1" y="150.5" width="2.9" height="3.4" fill="#b9b0a8"/>
<rect x="263.1" y="97.2" width="5.4" height="2.1" fill="#ddd4ca"/>
<rect x="23.1" y="136.9" width="3.1" height="3.2" fill="#cfb49b"/>
<rect x="200.9" y="123.1" width="4.9" height="1.8" fill="#857468"/>
<rect x="160.9" y="87.6" width="5.9" height="3.3" fill="#a38a77"/>
<rect x="311.1" y="121.5" width="2.4" height="2.8" fill="#8e7b6c"/>
<rect x="85.3" y="126.1" width="4.7" height="3.1" fill="#a58c7a"/>
<rect x="102.3" y="116.3" width="3.0" height="3.3" fill="#cfb49b"/>
<rect x="9.3" y="84.8" width="3.7" height="2.7" fill="#b27c68"/>
<rect x="134.8" y="161.7" width="4.4" height="3.0" fill="#c4a68e"/>
<rect x="259.1" y="125.8" width="3.3" height="3.3" fill="#ddd4ca"/>
<rect x="76.2" y="110.5" width="3.7" height="2.0" fill="#d0cbc4"/>
<rect x="117.5" y="103.4" width="6.3" height="3.2" fill="#7a685c"/>
<rect x="213.6" y="169.0" width="2.7" height="2.0" fill="#968b80"/>
<rect x="175.7" y="119.2" width="2.9" height="3.7" fill="#d6ccc0"/>
<rect x="1.5" y="84.7" width="3.7" height="2.6" fill="#c2b2a0"/>
<rect x="97.9" y="142.0" width="2.1" height="2.9" fill="#9a9490"/>
<rect x="97.0" y="99.1" width="6.2" height="1.8" fill="#bcae9f"/>
<rect x="96.2" y="155.6" width="2.5" height="1.8" fill="#968b80"/>
<rect x="229.4" y="116.8" width="6.9" height="3.9" fill="#b27c68"/>
<rect x="235.4" y="133.7" width="4.0" height="1.8" fill="#c4a68e"/>
<rect x="269.5" y="179.8" width="6.1" height="2.1" fill="#c2b2a0"/>
<rect x="190.2" y="85.7" width="3.0" height="3.9" fill="#efe9e2"/>
<rect x="230.7" y="146.9" width="2.1" height="3.8" fill="#b3a699"/>
<rect x="95.9" y="155.2" width="4.5" height="1.7" fill="#8a8580"/>
<rect x="260.7" y="120.7" width="6.3" height="1.9" fill="#cfb49b"/>
<rect x="226.9" y="153.7" width="5.9" height="3.1" fill="#9a9490"/>
<rect x="255.2" y="129.0" width="2.3" height="2.2" fill="#b3a699"/>
<rect x="279.2" y="121.9" width="6.8" height="3.1" fill="#6f6158"/>
<rect x="115.5" y="136.6" width="5.7" height="2.5" fill="#c4a68e"/>
<rect x="215.1" y="134.0" width="6.0" height="2.2" fill="#b8a08a"/>
<rect x="108.8" y="139.5" width="3.0" height="2.7" fill="#efe9e2"/>
<rect x="300.0" y="116.9" width="6.0" height="3.3" fill="#d0cbc4"/>
<rect x="179.2" y="149.4" width="3.9" height="2.4" fill="#857468"/>
<rect x="295.7" y="88.7" width="4.9" height="3.3" fill="#ddd4ca"/>
<rect x="44.9" y="90.5" width="3.5" height="2.2" fill="#968b80"/>
<rect x="177.5" y="175.7" width="6.0" height="1.8" fill="#9a9490"/>
<rect x="220.2" y="127.4" width="6.8" height="3.1" fill="#c9b8a4"/>
<rect x="57.6" y="122.0" width="3.5" height="2.7" fill="#d0cbc4"/>
<rect x="310.3" y="171.2" width="6.3" height="3.9" fill="#a58c7a"/>
<rect x="229.7" y="90.9" width="4.0" height="2.7" fill="#a38a77"/>
<rect x="285.6" y="96.0" width="2.5" height="3.7" fill="#8e7b6c"/>
<rect x="166.2" y="115.0" width="6.7" height="3.1" fill="#9a9490"/>
<rect x="285.7" y="125.4" width="2.4" height="2.3" fill="#c9b8a4"/>
<rect x="52.6" y="106.2" width="3.3" height="3.0" fill="#8a8580"/>
<rect x="69.3" y="159.8" width="3.6" height="2.3" fill="#9a9490"/>
<rect x="221.9" y="131.5" width="6.3" height="2.2" fill="#8e7b6c"/>
<rect x="222.5" y="115.7" width="5.6" height="2.4" fill="#b9b0a8"/>
<rect x="162.7" y="104.6" width="2.8" height="2.5" fill="#bcae9f"/>
<rect x="201.3" y="120.1" width="6.9" height="3.8" fill="#ddd4ca"/>
<rect x="171.3" y="178.6" width="6.9" height="1.8" fill="#b9b0a8"/>
<rect x="214.9" y="127.9" width="3.5" height="3.0" fill="#8a8580"/>
<rect x="81.1" y="119.3" width="6.9" height="3.9" fill="#b27c68"/>
<rect x="106.2" y="166.2" width="6.4" height="3.9" fill="#d6ccc0"/>
<rect x="69.2" y="143.9" width="5.3" height="3.1" fill="#b27c68"/>
<rect x="-3.8" y="102.2" width="2.5" height="2.4" fill="#bcae9f"/>
<rect x="202.2" y="149.0" width="6.6" height="1.9" fill="#b3a699"/>
<rect x="71.3" y="117.8" width="6.8" height="1.5" fill="#8a8580"/>
<rect x="110.2" y="178.5" width="3.9" height="2.2" fill="#8a8580"/>
<rect x="183.0" y="150.2" width="4.4" height="3.1" fill="#a58c7a"/>
<rect x="75.9" y="164.4" width="6.6" height="3.6" fill="#968b80"/>
<rect x="23.8" y="93.5" width="4.5" height="4.0" fill="#b9b0a8"/>
<rect x="208.0" y="154.7" width="3.0" height="2.8" fill="#c2b2a0"/>
<rect x="248.9" y="160.9" width="6.1" height="2.6" fill="#8e7b6c"/>
<rect x="105.5" y="128.6" width="3.1" height="1.7" fill="#a38a77"/>
<rect x="-1.7" y="104.1" width="5.2" height="3.4" fill="#e2ddd6"/>
<rect x="59.9" y="168.1" width="2.1" height="1.9" fill="#b27c68"/>
<rect x="120.9" y="158.5" width="4.6" height="4.0" fill="#d6ccc0"/>
<rect x="228.5" y="173.8" width="6.5" height="3.9" fill="#b9b0a8"/>
<rect x="245.4" y="150.8" width="4.1" height="2.9" fill="#bcae9f"/>
<rect x="177.3" y="84.5" width="4.2" height="3.7" fill="#8a8580"/>
<rect x="89.3" y="128.7" width="4.1" height="3.7" fill="#8a8580"/>
<rect x="298.2" y="169.1" width="4.2" height="1.7" fill="#d6ccc0"/>
<rect x="264.8" y="83.2" width="3.6" height="2.3" fill="#ddd4ca"/>
<rect x="195.4" y="94.3" width="6.3" height="1.6" fill="#8a8580"/>
<rect x="32.1" y="110.1" width="4.0" height="3.5" fill="#9a9490"/>
<rect x="310.1" y="167.5" width="4.7" height="3.3" fill="#6f6158"/>
<rect x="218.9" y="88.7" width="6.8" height="2.4" fill="#c2b2a0"/>
<rect x="294.6" y="155.2" width="3.2" height="2.0" fill="#cfb49b"/>
<rect x="48.1" y="97.2" width="5.3" height="3.1" fill="#b8a08a"/>
<rect x="147.7" y="177.1" width="4.5" height="3.1" fill="#c2b2a0"/>
<rect x="34.3" y="150.7" width="4.7" height="3.8" fill="#bcae9f"/>
<rect x="200.3" y="160.4" width="6.6" height="1.8" fill="#b9b0a8"/>
<rect x="284.8" y="85.4" width="6.4" height="1.5" fill="#efe9e2"/>
<rect x="297.1" y="113.5" width="5.0" height="2.5" fill="#d6ccc0"/>
<rect x="172.6" y="128.8" width="6.1" height="2.4" fill="#bcae9f"/>
<rect x="47.7" y="104.5" width="6.1" height="1.6" fill="#c2b2a0"/>
<rect x="145.3" y="93.1" width="5.1" height="1.8" fill="#857468"/>
<rect x="72.0" y="154.7" width="3.8" height="3.4" fill="#efe9e2"/>
<rect x="200.0" y="91.4" width="5.1" height="3.2" fill="#c4a68e"/>
<rect x="172.0" y="149.7" width="4.0" height="2.8" fill="#8e7b6c"/>
<rect x="211.8" y="100.9" width="2.7" height="2.2" fill="#a58c7a"/>
<rect x="187.6" y="128.8" width="4.3" height="3.7" fill="#b8a08a"/>
<rect x="232.2" y="131.2" width="6.8" height="2.8" fill="#b27c68"/>
<rect x="263.0" y="165.8" width="6.2" height="3.7" fill="#ddd4ca"/>
<rect x="131.8" y="148.7" width="5.9" height="2.0" fill="#cfb49b"/>
<rect x="4.8" y="137.2" width="6.8" height="2.2" fill="#b3a699"/>
<rect x="301.8" y="158.7" width="6.3" height="2.8" fill="#7a685c"/>
<rect x="140.2" y="126.8" width="4.4" height="1.6" fill="#c9b8a4"/>
<rect x="123.1" y="115.0" width="2.5" height="2.3" fill="#8a8580"/>
<rect x="211.5" y="132.6" width="4.0" height="2.7" fill="#9a9490"/>
<rect x="155.8" y="106.6" width="2.0" height="2.0" fill="#e2ddd6"/>
<rect x="75.3" y="139.1" width="4.3" height="3.4" fill="#b27c68"/>
<rect x="231.2" y="142.5" width="4.5" height="1.8" fill="#bcae9f"/>
<rect x="58.4" y="119.2" width="4.9" height="2.2" fill="#e2ddd6"/>
<rect x="169.2" y="177.3" width="2.1" height="2.7" fill="#968b80"/>
<rect x="170.0" y="94.8" width="6.6" height="2.7" fill="#bcae9f"/>
<rect x="2.1" y="136.0" width="5.1" height="3.1" fill="#efe9e2"/>
<rect x="288.1" y="104.1" width="2.4" height="2.8" fill="#c2b2a0"/>
<rect x="267.0" y="162.0" width="5.1" height="2.8" fill="#b3a699"/>
<rect x="285.0" y="89.4" width="3.6" height="2.3" fill="#ddd4ca"/>
<rect x="307.1" y="160.4" width="4.7" height="3.0" fill="#9a9490"/>
<rect x="105.7" y="157.3" width="5.8" height="3.4" fill="#efe9e2"/>
<rect x="153.3" y="136.6" width="3.3" height="2.5" fill="#6f6158"/>
<rect x="165.4" y="121.3" width="3.5" height="2.1" fill="#bcae9f"/>
<rect x="118.7" y="152.1" width="5.3" height="1.7" fill="#6f6158"/>
<rect x="226.1" y="122.9" width="2.5" height="2.9" fill="#c4a68e"/>
<rect x="42.8" y="126.5" width="5.8" height="2.4" fill="#8e7b6c"/>
<rect x="200.9" y="156.6" width="4.0" height="2.6" fill="#b27c68"/>
<rect x="23.6" y="82.9" width="5.1" height="1.6" fill="#d6ccc0"/>
<rect x="201.2" y="133.2" width="5.5" height="3.2" fill="#bcae9f"/>
<rect x="105.9" y="99.6" width="5.0" height="2.8" fill="#e2ddd6"/>
<rect x="299.1" y="99.4" width="4.4" height="3.8" fill="#a58c7a"/>
<rect x="219.8" y="163.1" width="4.4" height="3.1" fill="#a38a77"/>
<rect x="150.4" y="89.2" width="2.3" height="1.7" fill="#b9b0a8"/>
<rect x="87.7" y="130.1" width="4.3" height="3.9" fill="#7a685c"/>
<rect x="107.2" y="160.9" width="4.8" height="1.9" fill="#bcae9f"/>
<rect x="37.7" y="171.9" width="4.2" height="2.9" fill="#857468"/>
<rect x="203.4" y="111.5" width="5.6" height="2.9" fill="#8e7b6c"/>
<rect x="164.5" y="113.9" width="6.8" height="2.6" fill="#c2b2a0"/>
<rect x="263.7" y="129.8" width="3.9" height="2.0" fill="#cfb49b"/>
<rect x="78.3" y="117.5" width="4.6" height="2.5" fill="#b3a699"/>
<rect x="0.2" y="168.1" width="2.2" height="2.4" fill="#a38a77"/>
<rect x="178.9" y="138.2" width="5.7" height="2.6" fill="#ddd4ca"/>
<rect x="200.9" y="174.2" width="3.9" height="3.6" fill="#9a9490"/>
<rect x="51.1" y="146.8" width="4.9" height="3.9" fill="#8e7b6c"/>
<rect x="189.1" y="94.8" width="4.2" height="1.8" fill="#e2ddd6"/>
<rect x="183.5" y="129.4" width="6.6" height="3.6" fill="#bcae9f"/>
<rect x="5.2" y="108.4" width="4.9" height="2.6" fill="#b3a699"/>
<rect x="271.6" y="88.6" width="3.9" height="3.2" fill="#8e7b6c"/>
<rect x="153.0" y="166.1" width="5.8" height="2.5" fill="#8a8580"/>
<rect x="216.0" y="153.1" width="3.8" height="2.6" fill="#c2b2a0"/>
<rect x="278.8" y="105.0" width="5.9" height="1.6" fill="#c9b8a4"/>
<rect x="294.0" y="174.8" width="6.6" height="2.6" fill="#a38a77"/>
<rect x="133.5" y="156.4" width="5.3" height="2.2" fill="#ddd4ca"/>
<rect x="142.7" y="153.0" width="6.5" height="2.2" fill="#a38a77"/>
<rect x="238.5" y="178.3" width="3.3" height="2.2" fill="#6f6158"/>
<rect x="235.0" y="172.8" width="4.8" height="2.7" fill="#bcae9f"/>
<rect x="182.1" y="119.5" width="7.0" height="2.3" fill="#c2b2a0"/>
<rect x="188.0" y="87.7" width="3.8" height="3.9" fill="#d6ccc0"/>
<rect x="108.2" y="168.5" width="2.8" height="2.1" fill="#d0cbc4"/>
<rect x="229.0" y="111.2" width="5.3" height="2.9" fill="#efe9e2"/>
<rect x="196.3" y="149.6" width="4.9" height="2.0" fill="#d0cbc4"/>
<rect x="84.7" y="165.3" width="5.2" height="2.2" fill="#c4a68e"/>
<rect x="311.1" y="147.4" width="2.9" height="3.0" fill="#c2b2a0"/>
<rect x="274.5" y="88.4" width="2.1" height="3.0" fill="#ddd4ca"/>
<rect x="170.4" y="131.6" width="4.0" height="2.9" fill="#c9b8a4"/>
<rect x="185.4" y="155.1" width="4.3" height="3.7" fill="#6f6158"/>
<rect x="158.4" y="91.8" width="5.9" height="3.1" fill="#efe9e2"/>
<rect x="18.5" y="133.0" width="4.1" height="3.0" fill="#b3a699"/>
<rect x="34.1" y="115.5" width="6.3" height="2.0" fill="#9a9490"/>
<rect x="277.4" y="135.5" width="4.7" height="2.6" fill="#8e7b6c"/>
<rect x="174.4" y="134.4" width="3.8" height="2.6" fill="#c4a68e"/>
<rect x="273.9" y="169.8" width="5.8" height="2.2" fill="#efe9e2"/>
<rect x="4.6" y="147.1" width="2.5" height="3.8" fill="#968b80"/>
<rect x="267.0" y="145.1" width="5.8" height="2.2" fill="#8e7b6c"/>
<rect x="92.4" y="172.3" width="2.2" height="1.6" fill="#b8a08a"/>
<rect x="214.2" y="107.8" width="5.2" height="2.4" fill="#6f6158"/>
<rect x="34.2" y="133.5" width="3.6" height="2.0" fill="#d6ccc0"/>
<rect x="77.2" y="137.9" width="4.8" height="3.7" fill="#c9b8a4"/>
<rect x="188.3" y="173.0" width="4.6" height="1.7" fill="#b27c68"/>
<rect x="303.2" y="138.8" width="4.7" height="3.4" fill="#b9b0a8"/>
<rect x="130.9" y="157.1" width="2.4" height="1.6" fill="#c2b2a0"/>
<rect x="313.0" y="99.7" width="6.7" height="3.1" fill="#8a8580"/>
<rect x="30.0" y="113.5" width="6.6" height="1.8" fill="#7a685c"/>
<rect x="174.7" y="152.9" width="5.8" height="2.6" fill="#6f6158"/>
<rect x="64.0" y="161.0" width="3.6" height="2.7" fill="#a58c7a"/>
<rect x="308.8" y="154.8" width="4.8" height="1.7" fill="#a38a77"/>
<rect x="-3.3" y="173.9" width="3.3" height="3.1" fill="#7a685c"/>
<rect x="173.2" y="93.4" width="3.2" height="3.3" fill="#a38a77"/>
<rect x="249.0" y="165.9" width="3.7" height="3.7" fill="#d0cbc4"/>
<rect x="202.1" y="116.2" width="5.9" height="2.4" fill="#c9b8a4"/>
<rect x="52.5" y="135.6" width="4.2" height="1.8" fill="#a38a77"/>
<rect x="104.4" y="141.9" width="2.3" height="3.9" fill="#efe9e2"/>
<rect x="242.0" y="112.7" width="2.8" height="2.8" fill="#bcae9f"/>
<rect x="65.2" y="96.9" width="6.2" height="3.0" fill="#d0cbc4"/>
<rect x="230.3" y="121.3" width="4.7" height="2.3" fill="#b27c68"/>
<rect x="160.0" y="167.6" width="6.1" height="2.6" fill="#c4a68e"/>
<rect x="22.0" y="85.8" width="3.1" height="1.5" fill="#9a9490"/>
<rect x="308.1" y="87.4" width="5.2" height="3.5" fill="#bcae9f"/>
<rect x="26.1" y="163.4" width="3.8" height="2.1" fill="#b9b0a8"/>
<rect x="111.8" y="155.3" width="5.4" height="3.7" fill="#6f6158"/>
<rect x="224.1" y="179.4" width="3.3" height="3.4" fill="#968b80"/>
<rect x="257.1" y="158.8" width="6.9" height="3.3" fill="#c4a68e"/>
<rect x="60.4" y="107.8" width="5.6" height="2.2" fill="#e2ddd6"/>
<rect x="155.2" y="122.7" width="3.1" height="3.5" fill="#b8a08a"/>
<rect x="312.3" y="91.0" width="6.2" height="3.3" fill="#8a8580"/>
<rect x="93.4" y="121.9" width="6.4" height="3.5" fill="#7a685c"/>
<rect x="270.5" y="122.0" width="5.7" height="3.2" fill="#6f6158"/>
<rect x="6.0" y="113.7" width="3.6" height="1.5" fill="#9a9490"/>
<rect x="234.7" y="98.1" width="4.3" height="3.6" fill="#c2b2a0"/>
<rect x="98.6" y="138.9" width="6.2" height="2.9" fill="#d0cbc4"/>
<rect x="177.8" y="110.2" width="2.8" height="2.6" fill="#c2b2a0"/>
<rect x="223.6" y="150.2" width="5.4" height="3.8" fill="#b8a08a"/>
<rect x="52.1" y="97.2" width="6.7" height="3.5" fill="#a58c7a"/>
<rect x="287.5" y="144.5" width="6.9" height="2.8" fill="#a38a77"/>
<rect x="145.8" y="136.1" width="4.3" height="3.0" fill="#8e7b6c"/>
<rect x="3.5" y="126.0" width="6.2" height="2.4" fill="#8e7b6c"/>
<rect x="52.6" y="174.0" width="6.3" height="2.5" fill="#968b80"/>
<rect x="263.4" y="83.8" width="5.9" height="3.7" fill="#efe9e2"/>
<rect x="71.3" y="162.6" width="3.9" height="3.7" fill="#cfb49b"/>
<rect x="192.9" y="161.0" width="5.2" height="1.8" fill="#c4a68e"/>
<rect x="53.3" y="147.4" width="4.2" height="1.6" fill="#b3a699"/>
<rect x="229.8" y="84.1" width="6.1" height="2.2" fill="#8e7b6c"/>
<rect x="48.5" y="102.7" width="3.9" height="2.3" fill="#ddd4ca"/>
<rect x="275.4" y="133.1" width="3.1" height="3.0" fill="#968b80"/>
<rect x="217.1" y="158.4" width="2.6" height="3.2" fill="#b8a08a"/>
<rect x="132.2" y="179.0" width="3.3" height="2.0" fill="#b27c68"/>
<rect x="199.3" y="109.8" width="4.5" height="3.3" fill="#968b80"/>
<rect x="162.5" y="147.1" width="5.8" height="3.5" fill="#8a8580"/>
<rect x="287.0" y="128.0" width="6.8" height="2.6" fill="#b9b0a8"/>
<rect x="96.7" y="132.6" width="4.8" height="2.9" fill="#b8a08a"/>
<rect x="234.9" y="100.6" width="4.7" height="3.7" fill="#d0cbc4"/>
<rect x="21.7" y="114.6" width="3.5" height="2.5" fill="#8e7b6c"/>
<rect x="114.9" y="117.9" width="4.1" height="1.7" fill="#7a685c"/>
<rect x="9.0" y="148.5" width="3.9" height="2.6" fill="#b27c68"/>
<rect x="111.1" y="129.6" width="2.9" height="3.4" fill="#857468"/>
<rect x="195.2" y="176.0" width="6.1" height="2.8" fill="#6f6158"/>
<rect x="264.4" y="82.6" width="4.8" height="3.5" fill="#c2b2a0"/>
<rect x="209.9" y="85.9" width="6.1" height="1.6" fill="#6f6158"/>
<rect x="117.7" y="119.3" width="2.7" height="4.0" fill="#cfb49b"/>
<rect x="221.3" y="168.7" width="4.5" height="1.7" fill="#8e7b6c"/>
<rect x="17.4" y="96.0" width="2.5" height="2.3" fill="#8a8580"/>
<rect x="43.6" y="165.4" width="3.8" height="2.7" fill="#7a685c"/>
<rect x="53.2" y="131.1" width="2.2" height="2.7" fill="#d0cbc4"/>
<rect x="117.9" y="132.0" width="3.3" height="3.4" fill="#b27c68"/>
<rect x="58.2" y="142.8" width="4.0" height="3.1" fill="#b27c68"/>
<rect x="252.9" y="148.9" width="6.0" height="2.0" fill="#ddd4ca"/>
<rect x="105.9" y="90.7" width="4.7" height="3.7" fill="#b3a699"/>
<rect x="38.5" y="108.7" width="6.6" height="2.0" fill="#c4a68e"/>
<rect x="177.8" y="114.7" width="3.7" height="2.4" fill="#c9b8a4"/>
<rect x="223.5" y="102.3" width="5.4" height="1.9" fill="#857468"/>
<rect x="217.1" y="128.6" width="5.5" height="3.8" fill="#a58c7a"/>
<rect x="180.6" y="99.2" width="3.8" height="3.9" fill="#bcae9f"/>
<rect x="149.6" y="141.9" width="5.0" height="2.6" fill="#bcae9f"/>
<rect x="192.5" y="97.1" width="2.9" height="1.9" fill="#b27c68"/>
<rect x="245.0" y="140.0" width="6.5" height="2.5" fill="#b9b0a8"/>
<rect x="176.6" y="95.0" width="2.8" height="3.1" fill="#c4a68e"/>
<rect x="76.9" y="173.5" width="6.3" height="2.4" fill="#a58c7a"/>
<rect x="267.8" y="134.6" width="2.1" height="2.4" fill="#b27c68"/>
<rect x="304.9" y="85.0" width="2.9" height="3.7" fill="#d0cbc4"/>
<rect x="8.7" y="137.2" width="7.0" height="3.7" fill="#a38a77"/>
<rect x="235.3" y="84.8" width="5.4" height="3.6" fill="#b27c68"/>
<rect x="243.0" y="87.9" width="3.9" height="2.8" fill="#c4a68e"/>
<rect x="81.5" y="173.0" width="6.1" height="1.8" fill="#c2b2a0"/>
<rect x="190.3" y="111.0" width="6.6" height="3.5" fill="#ddd4ca"/>
<rect x="10.5" y="176.6" width="3.1" height="3.2" fill="#cfb49b"/>
<rect x="228.7" y="91.5" width="2.5" height="3.8" fill="#d6ccc0"/>
<rect x="174.2" y="126.2" width="2.9" height="3.5" fill="#b27c68"/>
<rect x="233.7" y="94.9" width="5.1" height="3.0" fill="#b8a08a"/>
<rect x="282.5" y="161.5" width="5.9" height="2.7" fill="#e2ddd6"/>
<rect x="310.0" y="145.2" width="5.6" height="2.2" fill="#bcae9f"/>
<rect x="207.2" y="85.4" width="4.0" height="1.8" fill="#b3a699"/>
<rect x="53.8" y="133.5" width="5.2" height="3.6" fill="#c4a68e"/>
<rect x="258.9" y="116.8" width="3.9" height="4.0" fill="#efe9e2"/>
<rect x="151.0" y="149.1" width="2.5" height="1.9" fill="#c9b8a4"/>
<rect x="63.1" y="167.2" width="2.4" height="2.8" fill="#c2b2a0"/>
<rect x="301.3" y="175.5" width="5.1" height="1.7" fill="#6f6158"/>
<rect x="310.7" y="166.4" width="6.2" height="3.9" fill="#ddd4ca"/>
<rect x="204.1" y="108.9" width="3.2" height="4.0" fill="#e2ddd6"/>
<rect x="214.2" y="176.8" width="3.3" height="2.1" fill="#8e7b6c"/>
<rect x="157.3" y="93.0" width="4.2" height="1.6" fill="#ddd4ca"/>
<rect x="290.2" y="101.9" width="3.4" height="1.7" fill="#e2ddd6"/>
<rect x="48.2" y="122.8" width="4.7" height="1.6" fill="#d0cbc4"/>
<rect x="291.1" y="124.0" width="3.2" height="3.3" fill="#a38a77"/>
<rect x="134.9" y="111.3" width="3.6" height="2.3" fill="#b8a08a"/>
<rect x="135.2" y="125.1" width="4.4" height="2.6" fill="#8e7b6c"/>
<rect x="69.3" y="134.2" width="4.6" height="2.2" fill="#d6ccc0"/>
<rect x="303.2" y="136.0" width="2.3" height="3.6" fill="#c2b2a0"/>
<rect x="1.5" y="110.2" width="6.2" height="2.7" fill="#b8a08a"/>
<rect x="70.8" y="141.8" width="5.4" height="2.5" fill="#c4a68e"/>
<rect x="308.8" y="151.3" width="2.1" height="1.6" fill="#ddd4ca"/>
<rect x="200.0" y="83.6" width="6.5" height="3.5" fill="#efe9e2"/>
<rect x="210.0" y="84.9" width="6.5" height="2.3" fill="#cfb49b"/>
<rect x="171.1" y="147.4" width="5.4" height="3.1" fill="#b9b0a8"/>
<rect x="219.4" y="113.7" width="7.0" height="2.6" fill="#7a685c"/>
<rect x="200.5" y="177.7" width="6.1" height="3.3" fill="#cfb49b"/>
<rect x="219.2" y="127.7" width="2.5" height="3.3" fill="#b9b0a8"/>
<rect x="101.1" y="102.9" width="3.2" height="4.0" fill="#b8a08a"/>
<rect x="16.5" y="107.1" width="2.4" height="3.5" fill="#ddd4ca"/>
<rect x="229.5" y="96.2" width="2.6" height="1.6" fill="#d6ccc0"/>
<rect x="95.9" y="158.8" width="3.1" height="3.5" fill="#b27c68"/>
<rect x="140.6" y="169.3" width="2.1" height="2.8" fill="#857468"/>
<rect x="108.5" y="96.8" width="3.7" height="2.5" fill="#6f6158"/>
<rect x="60.9" y="88.2" width="5.5" height="2.4" fill="#8a8580"/>
<rect x="60.4" y="130.2" width="4.1" height="3.8" fill="#d0cbc4"/>
<rect x="263.8" y="99.8" width="4.1" height="3.6" fill="#efe9e2"/>
<rect x="52.1" y="150.3" width="2.4" height="3.6" fill="#c4a68e"/>
<rect x="65.5" y="151.3" width="5.2" height="3.9" fill="#c9b8a4"/>
<rect x="280.2" y="105.0" width="5.0" height="1.6" fill="#ddd4ca"/>
<rect x="110.9" y="121.9" width="6.2" height="3.4" fill="#b8a08a"/>
<rect x="249.1" y="114.8" width="2.0" height="2.1" fill="#b3a699"/>
<rect x="204.0" y="152.5" width="4.0" height="2.5" fill="#b8a08a"/>
<rect x="20.2" y="99.7" width="4.3" height="2.1" fill="#c2b2a0"/>
<rect x="236.7" y="97.7" width="6.3" height="3.6" fill="#cfb49b"/>
<rect x="127.1" y="99.7" width="6.4" height="2.5" fill="#c2b2a0"/>
<rect x="251.7" y="84.3" width="2.0" height="2.9" fill="#bcae9f"/>
<rect x="151.0" y="175.0" width="6.3" height="1.9" fill="#c4a68e"/>
<rect x="303.1" y="127.0" width="4.4" height="1.9" fill="#857468"/>
<rect x="171.3" y="129.0" width="2.2" height="3.3" fill="#c4a68e"/>
<rect x="163.1" y="97.8" width="5.7" height="1.7" fill="#7a685c"/>
<rect x="139.4" y="94.8" width="6.9" height="1.5" fill="#b3a699"/>
<rect x="9.8" y="110.3" width="4.4" height="2.6" fill="#8a8580"/>
<rect x="167.2" y="111.4" width="6.4" height="4.0" fill="#b8a08a"/>
<rect x="83.0" y="129.2" width="4.1" height="1.8" fill="#7a685c"/>
<rect x="275.8" y="135.0" width="5.2" height="2.6" fill="#8a8580"/>
<rect x="184.2" y="101.4" width="5.1" height="2.7" fill="#b3a699"/>
<rect x="151.8" y="124.0" width="6.0" height="2.6" fill="#b27c68"/>
<rect x="72.7" y="172.4" width="4.4" height="3.3" fill="#c9b8a4"/>
<rect x="73.4" y="94.9" width="2.1" height="3.7" fill="#6f6158"/>
<rect x="159.3" y="84.5" width="3.9" height="1.8" fill="#c9b8a4"/>
<rect x="113.1" y="93.0" width="5.0" height="3.8" fill="#bcae9f"/>
<rect x="91.2" y="161.6" width="4.5" height="1.8" fill="#b8a08a"/>
<rect x="15.6" y="161.6" width="5.7" height="3.8" fill="#b8a08a"/>
<rect x="106.0" y="99.0" width="5.7" height="1.7" fill="#a38a77"/>
<rect x="251.4" y="128.3" width="6.7" height="3.8" fill="#cfb49b"/>
<rect x="46.4" y="165.5" width="2.9" height="3.2" fill="#efe9e2"/>
<rect x="123.0" y="118.0" width="3.6" height="3.2" fill="#efe9e2"/>
<rect x="247.6" y="145.8" width="4.4" height="3.8" fill="#cfb49b"/>
<rect x="147.7" y="150.0" width="5.6" height="3.5" fill="#857468"/>
<rect x="156.4" y="168.7" width="4.5" height="1.6" fill="#ddd4ca"/>
<rect x="72.7" y="112.9" width="3.6" height="2.2" fill="#cfb49b"/>
<rect x="93.0" y="112.3" width="4.8" height="2.4" fill="#b3a699"/>
<rect x="312.3" y="131.0" width="5.9" height="3.7" fill="#b3a699"/>
<rect x="169.7" y="169.0" width="6.4" height="3.7" fill="#8e7b6c"/>
<rect x="205.5" y="83.1" width="6.7" height="3.0" fill="#d6ccc0"/>
<rect x="214.3" y="117.2" width="2.9" height="2.8" fill="#b9b0a8"/>
<rect x="165.3" y="134.8" width="3.1" height="1.9" fill="#857468"/>
<rect x="111.9" y="141.1" width="4.9" height="2.5" fill="#b27c68"/>
<rect x="68.4" y="154.6" width="6.7" height="2.1" fill="#b3a699"/>
<rect x="60.0" y="163.7" width="6.5" height="1.8" fill="#8e7b6c"/>
<rect x="73.9" y="104.9" width="6.0" height="2.7" fill="#d0cbc4"/>
<rect x="36.6" y="160.1" width="5.9" height="2.2" fill="#8a8580"/>
<rect x="31.5" y="154.6" width="2.1" height="1.8" fill="#c4a68e"/>
<rect x="171.6" y="114.0" width="2.0" height="2.4" fill="#968b80"/>
<rect x="245.3" y="131.1" width="4.7" height="3.4" fill="#d0cbc4"/>
<rect x="167.8" y="164.2" width="3.6" height="2.4" fill="#9a9490"/>
<rect x="305.9" y="101.3" width="3.6" height="3.0" fill="#efe9e2"/>
<rect x="135.4" y="118.3" width="5.8" height="2.7" fill="#d0cbc4"/>
<rect x="11.7" y="169.2" width="4.8" height="3.8" fill="#a58c7a"/>
<rect x="92.8" y="84.3" width="4.4" height="2.0" fill="#cfb49b"/>
<rect x="100.5" y="132.7" width="6.9" height="2.9" fill="#efe9e2"/>
<rect x="96.5" y="176.2" width="6.9" height="2.0" fill="#a58c7a"/>
<rect x="3.6" y="123.7" width="4.1" height="2.0" fill="#9a9490"/>
<rect x="125.3" y="90.6" width="4.4" height="3.9" fill="#e2ddd6"/>
<rect x="169.7" y="140.0" width="3.9" height="3.5" fill="#bcae9f"/>
<rect x="270.1" y="83.7" width="4.3" height="3.0" fill="#8a8580"/>
<rect x="251.4" y="174.7" width="6.2" height="2.2" fill="#ddd4ca"/>
<rect x="-3.4" y="147.2" width="6.4" height="3.2" fill="#efe9e2"/>
<rect x="126.8" y="82.8" width="12.6" height="5.2" fill="#b8a79c"/>
<rect x="10.9" y="82.7" width="10.5" height="5.3" fill="#a99383"/>
<rect x="176.0" y="83.6" width="13.1" height="4.4" fill="#a99383"/>
<rect x="199.5" y="81.6" width="9.6" height="6.4" fill="#a99383"/>
<rect x="46.8" y="83.0" width="3.2" height="5.0" fill="#a99383"/>
<rect x="171.0" y="81.4" width="7.8" height="6.6" fill="#c9a898"/>
<rect x="255.1" y="82.8" width="10.8" height="5.2" fill="#c9a898"/>
<rect x="14.9" y="83.1" width="12.4" height="4.9" fill="#d4bcaa"/>
<rect x="24.2" y="80.2" width="8.2" height="7.8" fill="#a99383"/>
<rect x="39.8" y="80.0" width="7.3" height="8.0" fill="#a99383"/>
<rect x="82.9" y="81.1" width="4.4" height="6.9" fill="#c9a898"/>
<rect x="291.1" y="79.2" width="6.3" height="8.8" fill="#c9a898"/>
<rect x="306.4" y="82.8" width="5.4" height="5.2" fill="#e0c9b8"/>
<rect x="274.2" y="82.0" width="3.2" height="6.0" fill="#d4bcaa"/>
<rect x="77.4" y="79.5" width="13.8" height="8.5" fill="#c9a898"/>
<rect x="29.6" y="82.0" width="12.2" height="6.0" fill="#c9a898"/>
<rect x="148.4" y="80.1" width="6.3" height="7.9" fill="#a99383"/>
<rect x="108.7" y="80.8" width="7.4" height="7.2" fill="#a99383"/>
<rect x="54.5" y="83.3" width="10.7" height="4.7" fill="#e0c9b8"/>
<rect x="199.1" y="81.4" width="3.6" height="6.6" fill="#b8a79c"/>
<rect x="217.0" y="79.5" width="3.6" height="8.5" fill="#b8a79c"/>
<rect x="241.6" y="82.4" width="4.9" height="5.6" fill="#b8a79c"/>
<rect x="162.8" y="82.0" width="12.5" height="6.0" fill="#d4bcaa"/>
<rect x="208.4" y="81.4" width="13.7" height="6.6" fill="#a99383"/>
<rect x="81.0" y="79.6" width="8.7" height="8.4" fill="#c9a898"/>
<rect x="59.6" y="83.9" width="12.4" height="4.1" fill="#b8a79c"/>
<rect x="198.4" y="79.3" width="9.9" height="8.7" fill="#c9a898"/>
<rect x="171.4" y="82.6" width="6.0" height="5.4" fill="#b8a79c"/>
<rect x="31.8" y="82.9" width="10.7" height="5.1" fill="#e0c9b8"/>
<rect x="304.4" y="81.7" width="5.8" height="6.3" fill="#b8a79c"/>
<rect x="284.2" y="82.5" width="5.1" height="5.5" fill="#d4bcaa"/>
<rect x="19.1" y="81.6" width="8.4" height="6.4" fill="#d4bcaa"/>
<rect x="46.5" y="83.1" width="5.4" height="4.9" fill="#c9a898"/>
<rect x="30.0" y="80.7" width="9.4" height="7.3" fill="#e0c9b8"/>
<rect x="130.0" y="81.1" width="9.7" height="6.9" fill="#e0c9b8"/>
<rect x="64.1" y="79.2" width="5.2" height="8.8" fill="#e0c9b8"/>
<rect x="261.1" y="83.8" width="8.8" height="4.2" fill="#c9a898"/>
<rect x="156.9" y="81.9" width="13.4" height="6.1" fill="#a99383"/>
<rect x="186.6" y="79.8" width="12.0" height="8.2" fill="#a99383"/>
<rect x="303.8" y="79.6" width="4.5" height="8.4" fill="#a99383"/>
<rect x="73.7" y="80.0" width="3.4" height="8.0" fill="#c9a898"/>
<rect x="66.9" y="82.7" width="6.1" height="5.3" fill="#c9a898"/>
<rect x="216.9" y="82.6" width="12.2" height="5.4" fill="#d4bcaa"/>
<rect x="96.5" y="80.6" width="4.2" height="7.4" fill="#e0c9b8"/>
<rect x="174.3" y="81.1" width="6.3" height="6.9" fill="#d4bcaa"/>
<rect x="52.4" y="79.1" width="7.2" height="8.9" fill="#d4bcaa"/>
<rect x="255.7" y="83.2" width="12.3" height="4.8" fill="#c9a898"/>
<rect x="257.5" y="79.4" width="5.2" height="8.6" fill="#c9a898"/>
<rect x="281.1" y="83.2" width="4.0" height="4.8" fill="#b8a79c"/>
<rect x="227.4" y="83.7" width="8.3" height="4.3" fill="#a99383"/>
<rect x="114.9" y="79.9" width="11.6" height="8.1" fill="#c9a898"/>
<rect x="108.6" y="83.1" width="5.6" height="4.9" fill="#e0c9b8"/>
<rect x="40.7" y="81.2" width="13.4" height="6.8" fill="#e0c9b8"/>
<rect x="311.4" y="82.5" width="13.3" height="5.5" fill="#a99383"/>
<rect x="4.7" y="80.7" width="8.9" height="7.3" fill="#e0c9b8"/>
<rect x="50.2" y="81.9" width="12.4" height="6.1" fill="#e0c9b8"/>
<rect x="295.6" y="83.7" width="4.0" height="4.3" fill="#c9a898"/>
<rect x="158.5" y="79.5" width="9.4" height="8.5" fill="#d4bcaa"/>
<rect x="86.9" y="80.6" width="5.8" height="7.4" fill="#e0c9b8"/>
<rect x="71.6" y="80.8" width="4.3" height="7.2" fill="#d4bcaa"/>
<rect x="292.8" y="80.4" width="12.7" height="7.6" fill="#c9a898"/>
<rect x="148.1" y="83.3" width="4.9" height="4.7" fill="#c9a898"/>
<rect x="216.0" y="81.9" width="12.3" height="6.1" fill="#c9a898"/>
<rect x="19.1" y="81.8" width="5.5" height="6.2" fill="#d4bcaa"/>
<rect x="235.1" y="80.9" width="8.5" height="7.1" fill="#e0c9b8"/>
<rect x="251.9" y="79.1" width="10.7" height="8.9" fill="#c9a898"/>
<rect x="202.5" y="79.4" width="13.7" height="8.6" fill="#c9a898"/>
<rect x="277.3" y="80.1" width="11.1" height="7.9" fill="#b8a79c"/>
<rect x="61.6" y="79.7" width="3.1" height="8.3" fill="#a99383"/>
<rect x="105.8" y="82.1" width="9.6" height="5.9" fill="#a99383"/>
<rect x="0" y="97" width="60" height="16" fill="#bdb6ad" opacity="0.7"/>
<rect x="240" y="92" width="40" height="10" fill="#c99a86" opacity="0.6"/>
</g>
<g filter="url(#bl)">
<polygon points="100,142 101,100 103,62 105,58 106,64 107,54 109,52 111,56 112,68 114,56 116,53 118,58 119,70 121,62 123,72 124,104 183,104 184,70 186,60 188,50 190,48 192,55 194,49 197,48 199,56 200,62 202,60 203,72 204,104 205,142" fill="#4e433b"/>
<rect x="124" y="104" width="60" height="38" fill="#564a40"/>
<rect x="104" y="108" width="1.5" height="32" fill="#3f352e" opacity="0.8"/>
<rect x="109" y="108" width="1.5" height="32" fill="#3f352e" opacity="0.8"/>
<rect x="114" y="108" width="1.5" height="32" fill="#3f352e" opacity="0.8"/>
<rect x="119" y="108" width="1.5" height="32" fill="#3f352e" opacity="0.8"/>
<rect x="124" y="108" width="1.5" height="32" fill="#3f352e" opacity="0.8"/>
<rect x="129" y="108" width="1.5" height="32" fill="#3f352e" opacity="0.8"/>
<rect x="134" y="108" width="1.5" height="32" fill="#3f352e" opacity="0.8"/>
<rect x="139" y="108" width="1.5" height="32" fill="#3f352e" opacity="0.8"/>
<rect x="144" y="108" width="1.5" height="32" fill="#3f352e" opacity="0.8"/>
<rect x="149" y="108" width="1.5" height="32" fill="#3f352e" opacity="0.8"/>
<rect x="154" y="108" width="1.5" height="32" fill="#3f352e" opacity="0.8"/>
<rect x="159" y="108" width="1.5" height="32" fill="#3f352e" opacity="0.8"/>
<rect x="164" y="108" width="1.5" height="32" fill="#3f352e" opacity="0.8"/>
<rect x="169" y="108" width="1.5" height="32" fill="#3f352e" opacity="0.8"/>
<rect x="174" y="108" width="1.5" height="32" fill="#3f352e" opacity="0.8"/>
<rect x="179" y="108" width="1.5" height="32" fill="#3f352e" opacity="0.8"/>
<rect x="184" y="108" width="1.5" height="32" fill="#3f352e" opacity="0.8"/>
<rect x="189" y="108" width="1.5" height="32" fill="#3f352e" opacity="0.8"/>
<rect x="194" y="108" width="1.5" height="32" fill="#3f352e" opacity="0.8"/>
<rect x="199" y="108" width="1.5" height="32" fill="#3f352e" opacity="0.8"/>
<polygon points="183,104 204,104 205,142 183,142" fill="#6b5f55"/>
</g>
<rect x="121" y="43" width="1.4" height="61" fill="#d9d2c2"/>
<rect x="118" y="44" width="13" height="1.1" fill="#d9d2c2"/>
<rect x="162" y="21" width="1.4" height="83" fill="#d9d2c2"/>
<rect x="157" y="22" width="26" height="1.1" fill="#d9d2c2"/>
<rect x="183" y="34" width="1.4" height="70" fill="#d9d2c2"/>
<rect x="179" y="35" width="15" height="1.1" fill="#d9d2c2"/>
<rect x="132" y="77" width="1.5" height="63" fill="#c8913f"/>
<g filter="url(#bl)"><rect x="130" y="144" width="81" height="22" fill="#9b5a47"/>
<rect x="138" y="150" width="64" height="16" fill="#84493a"/>
<ellipse cx="261" cy="156" rx="11" ry="4.5" fill="#a06e5c"/>
<ellipse cx="203" cy="139" rx="9" ry="5" fill="#70a89a"/></g>
</svg>
<div class="abs" style="left:357px;top:199px;width:287px;height:1px;background:#3b4383"></div>
<div class="abs" style="left:357px;top:256px;width:287px;height:1px;background:#3b4383"></div>
<div class="abs" style="left:35px;top:353px;width:600px;height:377px;background:#fff;box-shadow:0 6px 18px rgba(40,45,80,.08)"></div>
<div class="abs" style="left:35px;top:681px;width:600px;height:49px;background:#f7f8fa"></div>
<div class="abs" style="left:35px;top:422px;width:600px;height:1px;background:#e7e8ed"></div>
<div class="abs" style="left:35px;top:471px;width:600px;height:1px;background:#e7e8ed"></div>
<div class="abs" style="left:35px;top:544px;width:600px;height:1px;background:#e7e8ed"></div>
<div class="abs" style="left:35px;top:595px;width:600px;height:1px;background:#e7e8ed"></div>
<div class="abs" style="left:35px;top:681px;width:600px;height:1px;background:#e7e8ed"></div>
<div class="abs" style="left:136px;top:422px;width:1px;height:308px;background:#e7e8ed"></div>
<div class="abs" style="left:232px;top:422px;width:1px;height:308px;background:#e7e8ed"></div>
<div class="abs" style="left:584.9px;top:387.1px;width:4.6px;height:4.6px;border-radius:50%;background:#1f2233"></div>
<div class="abs" style="left:591.4px;top:387.1px;width:4.6px;height:4.6px;border-radius:50%;background:#1f2233"></div>
<div class="abs" style="left:597.9px;top:387.1px;width:4.6px;height:4.6px;border-radius:50%;background:#1f2233"></div>
<div style="position:absolute;left:244.9px;top:483.8px;width:26px;height:26px;overflow:hidden;background:#34d186"><div style="position:absolute;left:2px;top:7px;font:700 10px/1 'Liberation Sans',sans-serif;color:#fff;letter-spacing:-0.3px">Bolt</div></div>
<div style="position:absolute;left:288.9px;top:483.8px;width:26px;height:26px;overflow:hidden;background:#ff4a0a"><svg width="26" height="26"><g fill="none" stroke="#fff" stroke-width="1.4"><circle cx="8" cy="15" r="4"/><circle cx="18" cy="15" r="4"/><path d="M8 15 L12 9 L18 15 M11 9 L15 9 M15 9 L18 6"/></g><rect x="9" y="21" width="8" height="1" fill="#fff"/></svg></div>
<div style="position:absolute;left:244.9px;top:557.0px;width:26px;height:26px;overflow:hidden;background:linear-gradient(135deg,#7b3fe0,#e63ca8)"><div style="position:absolute;left:7px;top:5px;font:italic 700 15px/1 'Liberation Sans',sans-serif;color:#fff">R</div></div>
<div style="position:absolute;left:244.9px;top:608.1px;width:26px;height:26px;overflow:hidden;background:#fff"><div style="position:absolute;left:0;top:0;width:26px;height:17px;background:#ff1616"></div><svg width="26" height="26" style="position:absolute;left:0;top:0"><path d="M7 13 q4 -6 8 -3 l4 -2 M9 14 h8" stroke="#fff" stroke-width="1.6" fill="none"/><circle cx="8" cy="14" r="2" fill="#fff"/><circle cx="18" cy="14" r="2" fill="#fff"/><path d="M6 21 h14" stroke="#e02020" stroke-width="1.2"/></svg></div>
<div style="position:absolute;left:288.9px;top:608.1px;width:26px;height:26px;overflow:hidden;background:#fff"><svg width="26" height="26"><path d="M17.5 9.5 C15 7 9 7.5 7.3 12.5 C6 16.5 8.5 18.5 11 17.5 C13 16.7 15 14 16.5 10.5 C16 13.5 15.5 16.5 17 17.5 C18 18 19 17.3 19.5 16.5" fill="none" stroke="#2a7dd0" stroke-width="3" stroke-linecap="round" stroke-linejoin="round"/></svg></div>
<div style="position:absolute;left:332.9px;top:608.1px;width:26px;height:26px;overflow:hidden;background:#0356b6"><svg width="26" height="26"><circle cx="13" cy="13" r="6.6" fill="none" stroke="#fff" stroke-width="2.6"/><path d="M15.6 10.6 A3.6 3.6 0 1 0 15.6 15.4" fill="none" stroke="#fff" stroke-width="1.5"/><circle cx="16.3" cy="10.3" r="0.9" fill="#3ddc84"/></svg></div>
<div style="position:absolute;left:376.9px;top:608.1px;width:26px;height:26px;overflow:hidden;background:#0a8cf2"><svg width="26" height="26"><path d="M15 10 h-4 a3 3 0 0 0 0 6 h4 a3 3 0 0 0 0 -6" fill="none" stroke="#fff" stroke-width="1.6"/><path d="M19 10 l2 3 l-2 3" fill="none" stroke="#8fe3a0" stroke-width="1.2"/></svg></div>
<div style="position:absolute;left:420.9px;top:608.1px;width:26px;height:26px;overflow:hidden;background:#ffe600"><svg width="26" height="26"><circle cx="13" cy="13" r="9" fill="#1a1a1a"/><ellipse cx="13" cy="15" rx="6" ry="4" fill="#f0d000"/><circle cx="10" cy="11" r="1.5" fill="#f0d000"/><circle cx="16" cy="11" r="1.5" fill="#f0d000"/></svg></div>
<div style="position:absolute;left:464.9px;top:608.1px;width:26px;height:26px;overflow:hidden;background:#fff"><svg width="26" height="26"><path d="M13 4 C15 9 19 11 18 17 C17 21 15 22 13 22 C10 22 8 20 8 17 C8 13 12 11 13 4 Z" fill="#d8343c"/><path d="M13 13 C14 16 16 17 15 20 C14 21 12 21 11.5 20 C11 18 13 16 13 13Z" fill="#ffffff" opacity=".35"/></svg></div>
<div style="position:absolute;left:508.9px;top:608.1px;width:26px;height:26px;overflow:hidden;background:#fff"><svg width="26" height="26"><circle cx="13" cy="11" r="7" fill="none" stroke="#2cc6d8" stroke-width="3.6"/><path d="M9 20 L17 20 L13 24 Z" fill="#f0388c"/></svg></div>
<div style="position:absolute;left:552.9px;top:608.1px;width:26px;height:26px;overflow:hidden;background:#0d0d0d"><div style="position:absolute;left:7px;top:5px;font:700 4px/1 'Liberation Sans',sans-serif;color:#aaa">SEAT</div><div style="position:absolute;left:3px;top:10px;font:700 11px/1 'Liberation Sans',sans-serif;color:#e8343a;letter-spacing:-0.5px">MÓ</div></div>
<div style="position:absolute;left:244.9px;top:643.0px;width:26px;height:26px;overflow:hidden;background:#262626"><svg width="26" height="26"><path d="M19 7.5 A8 8 0 1 0 19 18.5" fill="none" stroke="#fff" stroke-width="3.4"/></svg></div>
<div style="position:absolute;left:288.9px;top:643.0px;width:26px;height:26px;overflow:hidden;background:linear-gradient(180deg,#39c9b0,#1f9c8c)"><svg width="26" height="26"><circle cx="13" cy="12" r="10" fill="#263238"/><rect x="11" y="22" width="2" height="4" fill="#fff"/><rect x="13" y="22" width="2.5" height="4" fill="#f0b030"/></svg><div style="position:absolute;left:4.5px;top:9px;font:700 6.5px/1 'Liberation Sans',sans-serif;color:#fff;letter-spacing:-0.2px">YEGO</div></div></div>
<div class="tx " id="L158" style="left:1286px;top:38.87px;font-size:30.86px;transform:scaleX(1.013);color:#fff;font-weight:700">Explore Barcelona</div>
<div class="tx " id="L159" style="left:1286px;top:84.07px;font-size:16.46px;transform:scaleX(0.973);color:#9497bd">The City of Gaudi</div>
<div class="tx " id="L160" style="left:1616px;top:151.23px;font-size:15.09px;transform:scaleX(0.874);color:#fff;font-weight:700">101</div>
<div class="tx " id="L161" style="left:1616px;top:178.05px;font-size:12.35px;transform:scaleX(1.069);color:#9497bd">km²</div>
<div class="tx " id="L162" style="left:1616px;top:208.23px;font-size:15.09px;transform:scaleX(1.043);color:#fff;font-weight:700">1,620,343</div>
<div class="tx " id="L163" style="left:1616px;top:233.47px;font-size:13.03px;transform:scaleX(1.032);color:#9497bd">inhabitants</div>
<div class="tx " id="L164" style="left:1616px;top:264.23px;font-size:15.09px;transform:scaleX(1.062);color:#fff;font-weight:700">16,043</div>
<div class="tx " id="L165" style="left:1616px;top:290.47px;font-size:13.03px;transform:scaleX(1.000);color:#9497bd">inhab. / km²</div>
<div class="tx " id="L166" style="left:1311px;top:383.61px;font-size:14.40px;transform:scaleX(1.016);color:#1f2233;font-weight:700">Vehicles Available</div>
<div class="tx " id="L167" style="left:1297.8px;top:439.62px;font-size:14.27px;transform:scaleX(0.931);color:#8a90a6">TYPE</div>
<div class="tx " id="L168" style="left:1400px;top:439.62px;font-size:14.27px;transform:scaleX(0.992);color:#8a90a6">VEHICLES</div>
<div class="tx " id="L169" style="left:1495.8px;top:439.62px;font-size:14.27px;transform:scaleX(1.008);color:#8a90a6">OPERATORS MONITORED</div>
<div class="tx " id="L170" style="left:1297.8px;top:488.26px;font-size:14.81px;transform:scaleX(1.028);color:#262939">Bikes</div>
<div class="tx " id="L171" style="left:1297.2px;top:512.26px;font-size:14.81px;transform:scaleX(1.142);color:#262939">(dockless)</div>
<div class="tx " id="L172" style="left:1433px;top:488.26px;font-size:14.81px;transform:scaleX(0.999);color:#262939">1,062</div>
<div class="tx " id="L173" style="left:1297.2px;top:561.16px;font-size:14.81px;transform:scaleX(1.120);color:#262939">Scooters</div>
<div class="tx " id="L174" style="left:1444.3px;top:561.16px;font-size:14.81px;transform:scaleX(1.052);color:#262939">374</div>
<div class="tx " id="L175" style="left:1297.2px;top:612.46px;font-size:14.81px;transform:scaleX(1.145);color:#262939">Mopeds</div>
<div class="tx " id="L176" style="left:1429.5px;top:612.46px;font-size:14.81px;transform:scaleX(1.102);color:#262939">6,892</div>
<div class="tx " id="L177" style="left:1297.2px;top:698.46px;font-size:14.81px;transform:scaleX(1.057);color:#1f2233;font-weight:700">Total</div>
<div class="tx " id="L178" style="left:1429.5px;top:698.46px;font-size:14.81px;transform:scaleX(1.080);color:#1f2233;font-weight:700">8,328</div>
<div class="tx " id="L179" style="left:1495.6px;top:698.46px;font-size:14.81px;transform:scaleX(1.083);color:#1f2233;font-weight:700">Operators monitored</div>
<div class="tx " id="L180" style="left:1285.6px;top:732.47px;font-size:13.03px;transform:scaleX(0.991);color:#9a9fb3">Updated 7 hours ago</div>
<div class="tx " id="L181" style="left:1467.2px;top:792.88px;font-size:15.50px;transform:scaleX(1.062);color:#4656e6;-webkit-text-stroke:0.25px #4656e6;text-decoration:underline;text-decoration-thickness:1px;text-underline-offset:2px">More KPIs, graphs &amp; maps on Barcelona : subscribe now</div>
<div class="tx " id="L182" style="left:1425px;top:1025.70px;font-size:17.83px;transform:scaleX(0.756);color:#8a90a6">Be part of a growing community of data-driven cities</div>
<div id="task"><svg class="abs" style="left:19px;top:14px" width="22" height="22" viewBox="0 0 22 22"><path d="M0 3 L9 1.8 V10.3 H0Z M10 1.6 L21 0 V10.3 H10Z M0 11.3 H9 V19.8 L0 18.7Z M10 11.3 H21 V21.5 L10 20Z" fill="#fff"/></svg>
<svg class="abs" style="left:79px;top:14px" width="22" height="22" viewBox="0 0 22 22"><g fill="none" stroke="#fff" stroke-width="1.1"><rect x="1" y="4.5" width="13" height="13"/><path d="M1 1 H14 M1 21 H14 M19.5 0.5 V21.5"/></g><rect x="18" y="8" width="3" height="3" fill="#fff"/></svg>
<div class="abs" style="left:129px;top:47px;width:51.0px;height:3px;background:#76b9ed"></div>
<div class="abs" style="left:190.9px;top:47px;width:51.0px;height:3px;background:#76b9ed"></div>
<div class="abs" style="left:253px;top:47px;width:50.8px;height:3px;background:#76b9ed"></div>
<div class="abs" style="left:315px;top:47px;width:51.0px;height:3px;background:#76b9ed"></div>
<div class="abs" style="left:377px;top:47px;width:51.0px;height:3px;background:#76b9ed"></div>
<div class="abs" style="left:439px;top:47px;width:51.0px;height:3px;background:#76b9ed"></div>
<div class="abs" style="left:500.6px;top:47px;width:50.4px;height:3px;background:#76b9ed"></div>
<div class="abs" style="left:563px;top:47px;width:50.5px;height:3px;background:#76b9ed"></div>
<div class="abs" style="left:620px;top:47px;width:60.6px;height:3px;background:#76b9ed"></div>
<div class="abs" style="left:620px;top:0;width:60.6px;height:47px;background:#5b5c61"></div>
<svg class="abs" style="left:139px;top:12px" width="29" height="25" viewBox="0 0 29 25"><path d="M0 2 Q0 0 2 0 H10 L12 2 H27 Q29 2 29 4 V23 Q29 25 27 25 H2 Q0 25 0 23Z" fill="#f7c948"/><path d="M0 6 H29 V23 Q29 25 27 25 H2 Q0 25 0 23Z" fill="#ffd86a"/><path d="M8 25 V14 H21 V25 H18 V18 H11 V25Z" fill="#3b8de0"/></svg>
<svg class="abs" style="left:200px;top:11px" width="30" height="28" viewBox="0 0 30 28"><rect x="8" y="0" width="20" height="10" fill="#0f67c2"/><rect x="18" y="0" width="10" height="10" fill="#30b5f0"/><rect x="8" y="10" width="20" height="18" rx="1" fill="#1695e6"/><path d="M8 12 L18 20 L28 12" fill="#28a8ea"/><rect x="0" y="6" width="15" height="15" rx="1.5" fill="#0a64b8"/><circle cx="7.5" cy="13.5" r="3.8" fill="none" stroke="#fff" stroke-width="1.8"/></svg>
<svg class="abs" style="left:262px;top:11px" width="30" height="28" viewBox="0 0 30 28"><circle cx="16" cy="14" r="14" fill="#ed6c47"/><path d="M16 0 A14 14 0 0 1 30 14 H16Z" fill="#ff8f6b"/><path d="M16 14 H30 A14 14 0 0 1 16 28Z" fill="#d35230"/><rect x="0" y="6" width="15" height="15" rx="1.5" fill="#c43e1c"/><text x="7.5" y="18" font-family="Liberation Sans" font-weight="700" font-size="11" fill="#fff" text-anchor="middle">P</text></svg>
<svg class="abs" style="left:325px;top:11px" width="30" height="28" viewBox="0 0 30 28"><rect x="8" y="0" width="22" height="28" rx="1.5" fill="#185abd"/><rect x="8" y="0" width="22" height="7" fill="#41a5ee"/><rect x="8" y="7" width="22" height="7" fill="#2b7cd3"/><rect x="0" y="6" width="15" height="15" rx="1.5" fill="#1c5fb8"/><text x="7.5" y="18" font-family="Liberation Sans" font-weight="700" font-size="10" fill="#fff" text-anchor="middle">W</text></svg>
<svg class="abs" style="left:387px;top:11px" width="30" height="28" viewBox="0 0 30 28"><rect x="8" y="0" width="22" height="28" rx="1.5" fill="#107c41"/><rect x="8" y="0" width="22" height="7" fill="#33c481"/><rect x="8" y="7" width="22" height="7" fill="#21a366"/><rect x="0" y="6" width="15" height="15" rx="1.5" fill="#0f7b40"/><text x="7.5" y="18" font-family="Liberation Sans" font-weight="700" font-size="10" fill="#fff" text-anchor="middle">X</text></svg>
<svg class="abs" style="left:449px;top:11px" width="28" height="28" viewBox="0 0 28 28"><rect width="28" height="28" rx="3" fill="#b30b00"/><path d="M6 20 C10 16 14 8 13 6 C12 4 10 8 13 13 C15 17 20 18 22 17 C23 16 19 15 14 16 C10 17 7 21 6 20Z" fill="none" stroke="#fff" stroke-width="1.5"/></svg>
<svg class="abs" style="left:511px;top:11px" width="28" height="28" viewBox="0 0 28 28"><circle cx="14" cy="14" r="14" fill="#db4437"/><path d="M14 14 L26.1 7 A14 14 0 0 1 14 28Z" fill="#ffcd40"/><path d="M14 14 L14 28 A14 14 0 0 1 1.9 7Z" fill="#0f9d58"/><circle cx="14" cy="14" r="6.3" fill="#fff"/><circle cx="14" cy="14" r="5" fill="#4285f4"/></svg>
<svg class="abs" style="left:574px;top:11px" width="28" height="28" viewBox="0 0 28 28"><rect width="28" height="28" rx="4" fill="#1a1a1a"/><g><rect x="4" y="19" width="4" height="2" fill="#ffed00"/><rect x="9" y="19" width="4" height="2" fill="#ff0092"/><rect x="9" y="16" width="4" height="2" fill="#ff7700"/><rect x="14" y="19" width="4" height="2" fill="#c2ff00"/><rect x="14" y="16" width="4" height="2" fill="#c2ff00"/><rect x="14" y="13" width="4" height="2" fill="#ff0092"/><rect x="19" y="19" width="4" height="2" fill="#00c7f2"/><rect x="19" y="16" width="4" height="2" fill="#00c7f2"/><rect x="19" y="13" width="4" height="2" fill="#00c7f2"/><rect x="19" y="10" width="4" height="2" fill="#00c7f2"/><rect x="19" y="7" width="4" height="2" fill="#00c7f2"/></g></svg>
<svg class="abs" style="left:637px;top:10px" width="27" height="30" viewBox="0 0 27 30"><path d="M13 2 A10 10 0 1 1 4 14" fill="none" stroke="#d83b01" stroke-width="3.5"/><path d="M13 2 L15 2 L14 20 L12 20Z" fill="#e8e8e8"/><circle cx="6" cy="24" r="3.5" fill="none" stroke="#3a96dd" stroke-width="2"/><circle cx="15" cy="26" r="3.5" fill="none" stroke="#3a96dd" stroke-width="2"/></svg>
<svg class="abs" style="left:1578px;top:11px" width="30" height="30" viewBox="0 0 30 30"><circle cx="14" cy="14" r="13" fill="#1e8ae0"/><circle cx="14" cy="14" r="11" fill="#fff"/><circle cx="14" cy="14" r="9.5" fill="#1e8ae0"/><text x="14" y="19.5" font-family="Liberation Sans" font-weight="700" font-size="15" fill="#fff" text-anchor="middle">?</text><circle cx="23" cy="23" r="5.5" fill="#e81123"/><rect x="22.2" y="19.5" width="1.6" height="4.5" fill="#fff"/><rect x="22.2" y="25" width="1.6" height="1.6" fill="#fff"/></svg>
<svg class="abs" style="left:1618px;top:20px" width="18" height="10"><path d="M1 9 L9 1 L17 9" fill="none" stroke="#fff" stroke-width="1.3"/></svg>
<svg class="abs" style="left:1649px;top:16px" width="17" height="18" viewBox="0 0 17 18"><g fill="none" stroke="#fff" stroke-width="1.1"><rect x="1" y="4" width="11" height="10" rx="1"/><path d="M12 7 L16 5 V13 L12 11"/><path d="M3 2 H10 M3 16 H10"/></g></svg>
<svg class="abs" style="left:1676px;top:15px" width="24" height="20" viewBox="0 0 24 20"><path d="M4 13 A4 4 0 0 1 5 5 A6 6 0 0 1 16 6 A3.5 3.5 0 0 1 17 13Z" fill="#d9d9d9"/><circle cx="17" cy="14" r="5.5" fill="#1e7fd8"/><path d="M14.5 13 A2.5 2.5 0 0 1 19 12 M19.5 15 A2.5 2.5 0 0 1 15 16" stroke="#fff" stroke-width="1" fill="none"/></svg>
<svg class="abs" style="left:1705px;top:17px" width="23" height="16" viewBox="0 0 23 16"><g fill="none" stroke="#fff" stroke-width="1.1"><rect x="4" y="4" width="17" height="9"/><path d="M21 7 h2 v3 h-2"/></g><rect x="6" y="6" width="13" height="5" fill="#fff"/><path d="M1 1 v4 M3 1 v4 M0 5 h4 v2 h-4Z" stroke="#fff" stroke-width="0.9" fill="#fff"/></svg>
<svg class="abs" style="left:1736px;top:16px" width="22" height="18" viewBox="0 0 22 18"><path d="M1 6 H4 L9 2 V16 L4 12 H1Z" fill="none" stroke="#fff" stroke-width="1.1"/><path d="M12 6 Q14 9 12 12 M15 4 Q18 9 15 14 M18 2 Q22 9 18 16" fill="none" stroke="#fff" stroke-width="1.1"/></svg>
<svg class="abs" style="left:1868px;top:15px" width="22" height="20" viewBox="0 0 22 20"><path d="M1 1 H21 V15 H12 L8 19 V15 H1Z" fill="none" stroke="#fff" stroke-width="1.2"/></svg>
<div class="abs" style="left:1913px;top:0;width:1px;height:50px;background:#6a6b70"></div></div>
<div class="tx " id="L186" style="left:1790.6px;top:1036.97px;font-size:13.03px;transform:scaleX(1.025);color:#fff">10:14</div>
<div class="tx " id="L187" style="left:1770px;top:1058.97px;font-size:13.03px;transform:scaleX(1.151);color:#fff">04/01/2021</div>
</body></html>
